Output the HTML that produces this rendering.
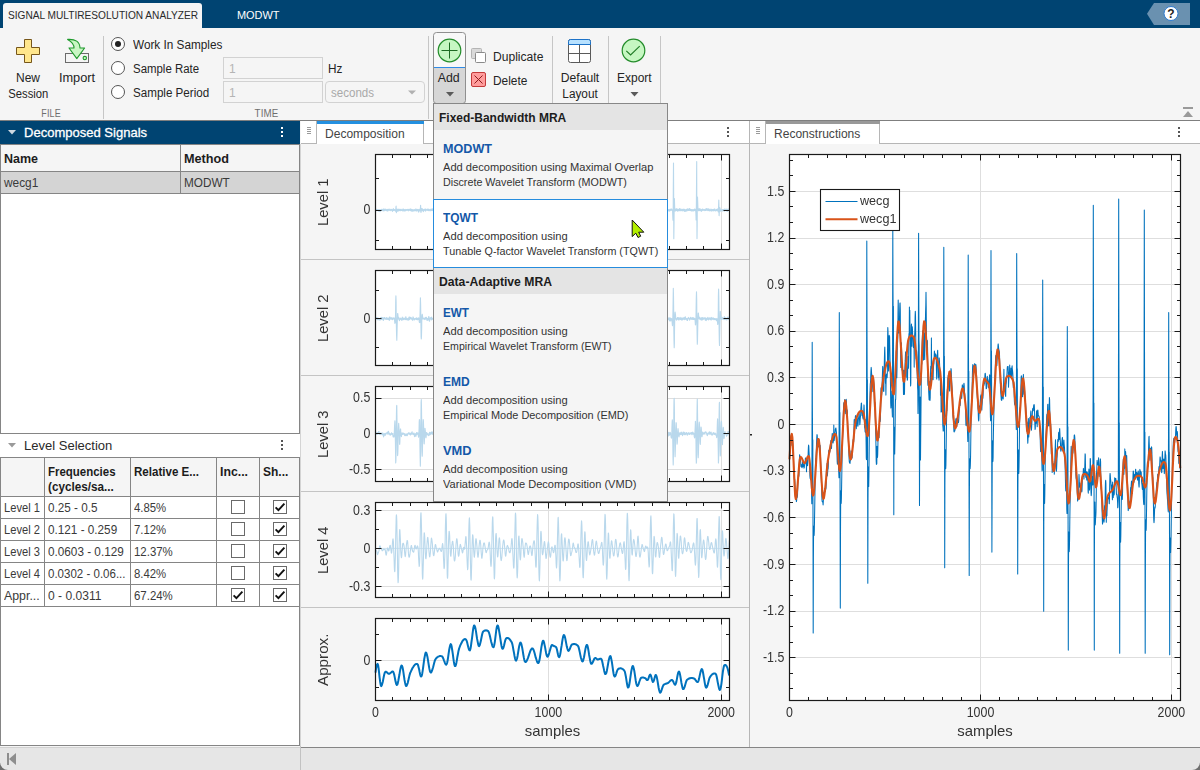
<!DOCTYPE html>
<html lang="en"><head><meta charset="utf-8"><title>Signal Multiresolution Analyzer</title>
<style>
*{box-sizing:border-box;margin:0;padding:0}
html,body{width:1200px;height:770px;overflow:hidden;background:#f5f5f5}
body{position:relative;font-family:"Liberation Sans",sans-serif;font-size:12px;color:#1c1c1c}
.abs{position:absolute}
#app{position:absolute;left:0;top:0;width:1200px;height:770px}
svg.gs{will-change:transform}
.f{display:inline-block;transform-origin:0 50%;white-space:nowrap}
.c>.f{transform-origin:50% 50%}
.t{position:absolute;white-space:nowrap;line-height:14px;height:14px}
.c{text-align:center}
.ui{font-size:12px;color:#242424}
#titlebar{left:0;top:0;width:1200px;height:28px;background:#004472}
#maintab{left:3px;top:3px;width:199px;height:26px;background:#f5f5f5;border-radius:3px 3px 0 0}
#strip{left:0;top:28px;width:1200px;height:92px;background:#f5f5f5}
#stripline{left:0;top:120px;width:1200px;height:1px;background:#7f7f7f}
.vsep{position:absolute;width:1px;background:#c6c6c6}
.seclab{font-size:11px;color:#6e6e6e;letter-spacing:.2px}
.radio{position:absolute;width:14px;height:14px;border:1px solid #555;border-radius:50%;background:#fff}
.radio.on:after{content:"";position:absolute;left:3px;top:3px;width:6px;height:6px;border-radius:50%;background:#222}
.field{position:absolute;border:1px solid #d2d2d2;background:#f5f5f5;color:#b4b4b4;font-size:12px;line-height:22px;padding-left:5px}
.hdr{position:absolute;background:#004472;color:#fff}
.tbl{position:absolute;border:1px solid #858585;background:#fff}
.hl{position:absolute;height:1px;background:#858585}
.vl{position:absolute;width:1px;background:#858585}
.th{position:absolute;font-weight:bold;font-size:12.5px;color:#1c1c1c;white-space:nowrap;line-height:15px}
.td{position:absolute;font-size:12px;color:#3a3a3a;white-space:nowrap;line-height:14px;height:14px}
.cb{position:absolute;width:14px;height:14px;border:1px solid #6a6a6a;background:#fff}
.tabstrip{position:absolute;background:#fff;height:22px;top:121px}
.tabline{position:absolute;height:1px;background:#b6b6b6;top:143px}
.doctab{position:absolute;top:121px;height:23px;background:#fff;border-right:1px solid #b6b6b6;border-left:1px solid #b6b6b6}
.doctab .bar{position:absolute;left:0;right:-1px;top:0;height:3px}
.doctab>span{position:absolute;left:8px;top:6px;font-size:12.5px;color:#444;white-space:nowrap;line-height:14px}
svg{position:absolute;left:0;top:0;overflow:visible}
svg text{font-family:"Liberation Sans",sans-serif}
#popup{left:433px;top:103px;width:235px;height:399px;background:#f5f5f5;border:1px solid #878787}
.ph{position:absolute;left:0;width:233px;height:26px;background:#e4e4e4;font-weight:bold;font-size:12.5px;line-height:28px;padding-left:5px;overflow:hidden;color:#1c1c1c;white-space:nowrap}
.pi{position:absolute;left:0;width:233px;height:69px}
.pi b{position:absolute;left:9px;top:11px;font-size:12.5px;line-height:14px;color:#1458a8;white-space:nowrap}
.pi i{position:absolute;left:9px;font-style:normal;font-size:11px;line-height:14px;color:#333;white-space:nowrap}
.pi.sel{background:#fff;border:1px solid #268cdd;left:-1px;width:235px}
.pi.sel b,.pi.sel i{left:9px}
#status{left:0;top:747px;width:1200px;height:23px;background:#e6e6e6}
</style></head>
<body>
<div id="app">
<div id="titlebar" class="abs"></div>
<div id="maintab" class="abs"></div>
<div class="t" id="tt1" style="left:8px;top:8px;font-size:11px;color:#2a2a2a"><span class="f" style="transform:scaleX(0.921)">SIGNAL MULTIRESOLUTION ANALYZER</span></div>
<div class="t" id="tt2" style="left:237px;top:8px;font-size:11px;color:#fff"><span class="f" style="transform:scaleX(0.994)">MODWT</span></div>
<svg width="1200" height="28" viewBox="0 0 1200 28"><path d="M1147 13.7 L1154 3 L1190 3 L1190 25 L1154 25 Z" fill="#6a91b0"/><circle cx="1171" cy="13.5" r="7" fill="#fff" stroke="#2e7bd0" stroke-width="1"/><text x="1171" y="18" font-size="12" font-weight="bold" text-anchor="middle" fill="#222">?</text></svg>
<div id="strip" class="abs"></div><div id="stripline" class="abs"></div>
<div class="vsep" style="left:103px;top:36px;height:83px"></div>
<div class="vsep" style="left:428px;top:36px;height:83px"></div>
<div class="vsep" style="left:552px;top:36px;height:68px"></div>
<div class="vsep" style="left:608px;top:36px;height:68px"></div>
<div class="vsep" style="left:660px;top:36px;height:68px"></div>
<div class="t c seclab" style="left:21px;width:60px;top:106px"><span class="f" style="transform:scaleX(0.811)">FILE</span></div>
<div class="t c seclab" style="left:237px;width:60px;top:106px"><span class="f" style="transform:scaleX(0.886)">TIME</span></div>
<svg width="1200" height="121" viewBox="0 0 1200 121">
<path d="M24.5 39.5 h7 v8 h8 v7 h-8 v8 h-7 v-8 h-8 v-7 h8 z" fill="#ffe68c" stroke="#76561a" stroke-width="1" stroke-linejoin="round"/>
<rect x="65.5" y="53.5" width="23" height="9" fill="#f5f5f5" stroke="#6b6b6b" stroke-width="1"/>
<circle cx="84.8" cy="58.1" r="1.7" fill="#d4f7d0" stroke="#1f9a2c" stroke-width="1.1"/>
<path d="M67.6 39.4 Q79.6 38.6 80 48 H84.6 L76.8 58.6 L69 48 H74 Q74.2 43 67.6 39.4 Z" fill="#c9f6c4" stroke="#1f9a2c" stroke-width="1.1" stroke-linejoin="round"/>
<path d="M433.5 67 v-32 a3 3 0 0 1 3 -3 h26 a3 3 0 0 1 3 3 v32 z" fill="#f8f8f8"/>
<path d="M433.5 67 h32 v33 a3 3 0 0 1 -3 3 h-26 a3 3 0 0 1 -3 -3 z" fill="#d6d6d6"/>
<rect x="433.5" y="32.5" width="32" height="71" rx="3" fill="none" stroke="#8f8f8f"/>
<rect x="434" y="67" width="31" height="1" fill="#2f8be6"/>
<circle cx="449.5" cy="50.5" r="11.3" fill="#c6f7c2" stroke="#238c2a" stroke-width="1.2"/>
<path d="M449.5 42.5 v16 M441.5 50.5 h16" stroke="#1d6b22" stroke-width="1" fill="none"/>
<path d="M446 92 h8 l-4 4.5 z" fill="#5a5a5a"/>
<rect x="471.5" y="48.5" width="10" height="10" rx="1" fill="#dadada" stroke="#b4b4b4"/>
<rect x="475.5" y="52.5" width="10" height="10" rx="1" fill="#fff" stroke="#8a8a8a"/>
<rect x="471.5" y="72.5" width="14" height="14" rx="1.5" fill="#ff9c9c" stroke="#c23a3a"/>
<path d="M474.5 75.5 l8 8 M482.5 75.5 l-8 8" stroke="#8c1c1c" stroke-width="1" fill="none"/>
<rect x="568.5" y="39.5" width="22" height="23" rx="2" fill="#fff" stroke="#5a5a5a"/>
<path d="M568.5 44.5 v-3 a2 2 0 0 1 2 -2 h18 a2 2 0 0 1 2 2 v3 z" fill="#b7e1ff" stroke="#1c72c8"/>
<path d="M579.5 45 v17 M569 53.5 h21" stroke="#5a5a5a" fill="none"/>
<circle cx="633.5" cy="50.5" r="11.3" fill="#c6f7c2" stroke="#238c2a" stroke-width="1.2"/>
<path d="M626.3 50.9 l4.3 4 l9.1 -8.8" stroke="#1f7a25" stroke-width="1.1" fill="none"/>
<path d="M630.5 92 h8 l-4 4.5 z" fill="#5a5a5a"/>
<rect x="1183" y="107" width="10" height="2" fill="#9a9a9a"/><path d="M1183 117 h10 l-5 -6 z" fill="#9a9a9a"/>
</svg>
<div class="t c ui" style="left:3px;width:50px;top:71px"><span class="f" style="transform:scaleX(0.999)">New</span></div>
<div class="t c ui" style="left:3px;width:50px;top:87px"><span class="f" style="transform:scaleX(0.937)">Session</span></div>
<div class="t c ui" style="left:52px;width:50px;top:71px"><span class="f" style="transform:scaleX(1.064)">Import</span></div>
<div class="radio on" style="left:111px;top:37px"></div>
<div class="t ui" style="left:132.6px;top:38px"><span class="f" style="transform:scaleX(0.981)">Work In Samples</span></div>
<div class="radio" style="left:111px;top:61px"></div>
<div class="t ui" style="left:132.6px;top:62px"><span class="f" style="transform:scaleX(0.953)">Sample Rate</span></div>
<div class="radio" style="left:111px;top:85px"></div>
<div class="t ui" style="left:132.6px;top:86px"><span class="f" style="transform:scaleX(0.968)">Sample Period</span></div>
<div class="field" style="left:223px;top:57px;width:100px;height:22px">1</div>
<div class="field" style="left:223px;top:81px;width:100px;height:22px">1</div>
<div class="field" style="left:325px;top:81px;width:100px;height:22px;border-radius:4px;color:#a9a9a9"><span class="f" style="transform:scaleX(0.962)">seconds</span></div>
<svg width="1200" height="121" viewBox="0 0 1200 121"><path d="M408 90.5 h8 l-4 4 z" fill="#b0b0b0"/></svg>
<div class="t ui" style="left:328px;top:62px"><span class="f" style="transform:scaleX(0.981)">Hz</span></div>
<div class="t c ui" style="left:424px;width:50px;top:71px"><span class="f" style="transform:scaleX(1.030)">Add</span></div>
<div class="t ui" style="left:493px;top:50px"><span class="f" style="transform:scaleX(1.007)">Duplicate</span></div>
<div class="t ui" style="left:493px;top:74px"><span class="f" style="transform:scaleX(0.992)">Delete</span></div>
<div class="t c ui" style="left:550px;width:60px;top:71px"><span class="f" style="transform:scaleX(1.010)">Default</span></div>
<div class="t c ui" style="left:550px;width:60px;top:87px"><span class="f" style="transform:scaleX(0.982)">Layout</span></div>
<div class="t c ui" style="left:604px;width:60px;top:71px"><span class="f" style="transform:scaleX(0.997)">Export</span></div>
<div class="hdr" style="left:0;top:121px;width:300px;height:23px"></div>
<svg width="300" height="150" viewBox="0 0 300 150"><path d="M8 130 h8 l-4 4.5 z" fill="#cfd9e2"/><rect x="281" y="127" width="2" height="2" fill="#fff"/><rect x="281" y="131" width="2" height="2" fill="#fff"/><rect x="281" y="135" width="2" height="2" fill="#fff"/></svg>
<div class="t" id="dsh" style="left:24px;top:125px;-webkit-text-stroke:0.3px #fff;font-size:13.33px;line-height:16px;height:16px;color:#fff"><span class="f" style="transform:scaleX(0.977)">Decomposed Signals</span></div>
<div class="tbl" style="left:0;top:144px;width:300px;height:290px"></div>
<div class="abs" style="left:1px;top:145px;width:298px;height:26px;background:#f5f5f5"></div>
<div class="abs" style="left:1px;top:172px;width:298px;height:21px;background:#d4d4d4"></div>
<div class="hl" style="left:0;top:171px;width:300px"></div>
<div class="hl" style="left:0;top:193px;width:300px"></div>
<div class="vl" style="left:180px;top:144px;height:50px"></div>
<div class="th" style="left:4px;top:152px"><span class="f" style="transform:scaleX(0.999)">Name</span></div>
<div class="th" style="left:184px;top:152px"><span class="f" style="transform:scaleX(1.013)">Method</span></div>
<div class="td" style="left:4px;top:176px"><span class="f" style="transform:scaleX(0.989)">wecg1</span></div>
<div class="td" style="left:184px;top:176px"><span class="f" style="transform:scaleX(0.980)">MODWT</span></div>
<div class="abs" style="left:0;top:434px;width:300px;height:23px;background:#fff"></div>
<svg width="300" height="460" viewBox="0 0 300 460"><path d="M8 443 h8 l-4 4.5 z" fill="#9a9a9a"/><rect x="281" y="440" width="2" height="2" fill="#555"/><rect x="281" y="444" width="2" height="2" fill="#555"/><rect x="281" y="448" width="2" height="2" fill="#555"/></svg>
<div class="t" id="lsh" style="left:24px;top:438px;font-size:13.33px;line-height:16px;height:16px;color:#2a2a2a"><span class="f" style="transform:scaleX(0.977)">Level Selection</span></div>
<div class="tbl" style="left:0;top:457px;width:300px;height:289px"></div>
<div class="abs" style="left:1px;top:458px;width:298px;height:38px;background:#f5f5f5"></div>
<div class="hl" style="left:0;top:496px;width:300px"></div>
<div class="hl" style="left:0;top:518px;width:300px"></div>
<div class="hl" style="left:0;top:540px;width:300px"></div>
<div class="hl" style="left:0;top:562px;width:300px"></div>
<div class="hl" style="left:0;top:584px;width:300px"></div>
<div class="hl" style="left:0;top:606px;width:300px"></div>
<div class="vl" style="left:44px;top:457px;height:150px"></div>
<div class="vl" style="left:130px;top:457px;height:150px"></div>
<div class="vl" style="left:216px;top:457px;height:150px"></div>
<div class="vl" style="left:259px;top:457px;height:150px"></div>
<div class="th" style="left:48px;top:465px"><span class="f" style="transform:scaleX(0.917)">Frequencies</span></div>
<div class="th" style="left:48px;top:480px"><span class="f" style="transform:scaleX(0.937)">(cycles/sa...</span></div>
<div class="th" style="left:134px;top:465px"><span class="f" style="transform:scaleX(0.926)">Relative E...</span></div>
<div class="th" style="left:220px;top:465px"><span class="f" style="transform:scaleX(0.983)">Inc...</span></div>
<div class="th" style="left:263px;top:465px"><span class="f" style="transform:scaleX(0.958)">Sh...</span></div>
<div class="td" style="left:4px;top:501px"><span class="f" style="transform:scaleX(0.928)">Level 1</span></div>
<div class="td" style="left:48px;top:501px"><span class="f" style="transform:scaleX(0.974)">0.25 - 0.5</span></div>
<div class="td" style="left:134px;top:501px"><span class="f" style="transform:scaleX(0.946)">4.85%</span></div>
<div class="cb" style="left:231px;top:500px"></div>
<div class="cb" style="left:273px;top:500px"><svg width="14" height="14" viewBox="0 0 14 14" style="left:-1px;top:-1px"><path d="M2.6 7.4 L5.4 10.2 L11.4 3.6" stroke="#111" stroke-width="1.9" fill="none"/></svg></div>
<div class="td" style="left:4px;top:523px"><span class="f" style="transform:scaleX(0.928)">Level 2</span></div>
<div class="td" style="left:48px;top:523px"><span class="f" style="transform:scaleX(0.978)">0.121 - 0.259</span></div>
<div class="td" style="left:134px;top:523px"><span class="f" style="transform:scaleX(0.946)">7.12%</span></div>
<div class="cb" style="left:231px;top:522px"></div>
<div class="cb" style="left:273px;top:522px"><svg width="14" height="14" viewBox="0 0 14 14" style="left:-1px;top:-1px"><path d="M2.6 7.4 L5.4 10.2 L11.4 3.6" stroke="#111" stroke-width="1.9" fill="none"/></svg></div>
<div class="td" style="left:4px;top:545px"><span class="f" style="transform:scaleX(0.928)">Level 3</span></div>
<div class="td" style="left:48px;top:545px"><span class="f" style="transform:scaleX(0.979)">0.0603 - 0.129</span></div>
<div class="td" style="left:134px;top:545px"><span class="f" style="transform:scaleX(0.953)">12.37%</span></div>
<div class="cb" style="left:231px;top:544px"></div>
<div class="cb" style="left:273px;top:544px"><svg width="14" height="14" viewBox="0 0 14 14" style="left:-1px;top:-1px"><path d="M2.6 7.4 L5.4 10.2 L11.4 3.6" stroke="#111" stroke-width="1.9" fill="none"/></svg></div>
<div class="td" style="left:4px;top:567px"><span class="f" style="transform:scaleX(0.928)">Level 4</span></div>
<div class="td" style="left:48px;top:567px"><span class="f" style="transform:scaleX(0.960)">0.0302 - 0.06...</span></div>
<div class="td" style="left:134px;top:567px"><span class="f" style="transform:scaleX(0.946)">8.42%</span></div>
<div class="cb" style="left:231px;top:566px"></div>
<div class="cb" style="left:273px;top:566px"><svg width="14" height="14" viewBox="0 0 14 14" style="left:-1px;top:-1px"><path d="M2.6 7.4 L5.4 10.2 L11.4 3.6" stroke="#111" stroke-width="1.9" fill="none"/></svg></div>
<div class="td" style="left:4px;top:589px"><span class="f" style="transform:scaleX(1.029)">Appr...</span></div>
<div class="td" style="left:48px;top:589px"><span class="f" style="transform:scaleX(1.006)">0 - 0.0311</span></div>
<div class="td" style="left:134px;top:589px"><span class="f" style="transform:scaleX(0.953)">67.24%</span></div>
<div class="cb" style="left:231px;top:588px"><svg width="14" height="14" viewBox="0 0 14 14" style="left:-1px;top:-1px"><path d="M2.6 7.4 L5.4 10.2 L11.4 3.6" stroke="#111" stroke-width="1.9" fill="none"/></svg></div>
<div class="cb" style="left:273px;top:588px"><svg width="14" height="14" viewBox="0 0 14 14" style="left:-1px;top:-1px"><path d="M2.6 7.4 L5.4 10.2 L11.4 3.6" stroke="#111" stroke-width="1.9" fill="none"/></svg></div>
<div id="status" class="abs"></div>
<div class="abs" style="left:0;top:747px;width:300px;height:1px;background:#d2d2d2"></div>
<div class="abs" style="left:301px;top:747px;width:899px;height:1px;background:#858585"></div>
<div class="abs" style="left:300px;top:746px;width:1px;height:24px;background:#c2c2c2"></div>
<div class="abs" style="left:300px;top:144px;width:1px;height:602px;background:#d4d4d4"></div>
<svg width="40" height="770" viewBox="0 0 40 770"><rect x="7" y="753" width="2" height="12" fill="#8e8e8e"/><path d="M16 753 v12 l-7 -6 z" fill="#8e8e8e"/></svg>
<svg width="1200" height="770" viewBox="0 0 1200 770"><path d="M0 770 V762 A8 8 0 0 0 8 770 Z" fill="#6f6f6f"/><path d="M1200 770 V762 A8 8 0 0 1 1192 770 Z" fill="#6f6f6f"/></svg>
<div class="tabstrip" style="left:301px;width:448px"></div>
<div class="tabline" style="left:301px;width:15px"></div>
<div class="tabline" style="left:424px;width:325px"></div>
<div class="doctab" style="left:316px;width:108px"><div class="bar" style="background:#2490e0"></div><span id="dtab"><span class="f" style="transform:scaleX(0.963)">Decomposition</span></span></div>
<div class="abs" style="left:749px;top:121px;width:1px;height:626px;background:#b6b6b6"></div>
<div class="abs" style="left:301px;top:259px;width:448px;height:1px;background:#c4c4c4"></div>
<div class="abs" style="left:301px;top:375px;width:448px;height:1px;background:#c4c4c4"></div>
<div class="abs" style="left:301px;top:491px;width:448px;height:1px;background:#c4c4c4"></div>
<div class="abs" style="left:301px;top:607px;width:448px;height:1px;background:#c4c4c4"></div>
<svg class="gs" width="1200" height="770" viewBox="0 0 1200 770">
<rect x="307" y="127" width="4" height="1" fill="#9a9a9a"/>
<rect x="307" y="129" width="4" height="1" fill="#9a9a9a"/>
<rect x="307" y="131" width="4" height="1" fill="#9a9a9a"/>
<rect x="307" y="133" width="4" height="1" fill="#9a9a9a"/>
<rect x="727" y="127" width="2" height="2" fill="#555"/>
<rect x="727" y="131" width="2" height="2" fill="#555"/>
<rect x="727" y="135" width="2" height="2" fill="#555"/>
<rect x="375.5" y="154.5" width="354.0" height="95.0" fill="#fff"/>
<path d="M548.5 154.5 V249.5" stroke="#dedede" stroke-width="1" fill="none"/><path d="M721.5 154.5 V249.5" stroke="#dedede" stroke-width="1" fill="none"/>
<path d="M375.5 210.0H729.5" stroke="#cfe3f0" stroke-width="1" fill="none"/>
<path d="M375.5 210.0L375.7 209.8L375.8 210.2L376.0 210.6L376.2 210.3L376.4 210.6L376.5 210.0L376.7 209.2L376.9 210.3L377.1 210.4L377.2 209.7L377.4 209.8L377.6 209.9L377.7 210.6L377.9 210.0L378.1 209.6L378.3 210.9L378.4 210.3L378.6 211.2L378.8 210.8L379.0 211.2L379.1 210.1L379.3 210.8L379.5 209.8L379.6 209.9L379.8 210.1L380.0 211.6L380.2 210.3L380.3 210.0L380.5 209.9L380.7 211.0L380.9 210.3L381.0 210.6L381.2 210.5L381.4 209.3L381.5 210.5L381.7 210.0L381.9 209.4L382.1 210.4L382.2 210.1L382.4 209.9L382.6 210.0L382.8 210.8L382.9 210.0L383.1 209.1L383.3 211.0L383.5 209.5L383.6 209.9L383.8 210.4L384.0 208.7L384.1 209.5L384.3 210.8L384.5 210.0L384.7 209.6L384.8 210.1L385.0 209.6L385.2 210.0L385.4 209.6L385.5 209.1L385.7 210.4L385.9 209.9L386.0 210.3L386.2 209.9L386.4 210.8L386.6 210.4L386.7 210.1L386.9 209.4L387.1 209.3L387.3 210.8L387.4 210.5L387.6 209.6L387.8 211.3L387.9 210.3L388.1 210.1L388.3 209.2L388.5 209.6L388.6 210.2L388.8 210.2L389.0 210.2L389.2 209.0L389.3 210.3L389.5 210.2L389.7 209.8L389.8 210.1L390.0 210.1L390.2 210.7L390.4 210.0L390.5 210.3L390.7 209.3L390.9 209.6L391.1 210.0L391.2 209.6L391.4 210.2L391.6 209.3L391.7 210.0L391.9 209.6L392.1 210.8L392.3 209.8L392.4 211.1L392.6 211.3L392.8 210.2L393.0 210.6L393.1 209.9L393.3 208.6L393.5 210.5L393.6 210.4L393.8 209.9L394.0 209.7L394.2 210.1L394.3 210.1L394.5 209.6L394.7 209.7L394.9 210.7L395.0 210.1L395.2 210.1L395.4 211.2L395.6 210.7L395.7 210.9L395.9 207.7L396.1 206.1L396.2 209.4L396.4 212.7L396.6 211.3L396.8 210.8L396.9 209.7L397.1 209.1L397.3 211.2L397.5 209.5L397.6 211.1L397.8 209.5L398.0 210.5L398.1 209.5L398.3 209.9L398.5 211.0L398.7 209.2L398.8 209.1L399.0 210.0L399.2 210.2L399.4 210.1L399.5 210.6L399.7 209.3L399.9 210.3L400.0 210.0L400.2 210.5L400.4 210.4L400.6 210.8L400.7 209.2L400.9 210.1L401.1 209.4L401.3 210.0L401.4 210.4L401.6 210.2L401.8 210.4L401.9 210.0L402.1 210.2L402.3 210.2L402.5 210.9L402.6 210.5L402.8 209.0L403.0 210.4L403.2 210.7L403.3 209.8L403.5 209.1L403.7 210.9L403.8 210.1L404.0 210.4L404.2 211.1L404.4 209.5L404.5 210.0L404.7 210.0L404.9 210.5L405.1 209.7L405.2 210.3L405.4 210.1L405.6 210.7L405.7 210.8L405.9 209.2L406.1 210.3L406.3 209.8L406.4 210.0L406.6 210.3L406.8 210.3L407.0 209.6L407.1 210.2L407.3 210.1L407.5 210.0L407.7 209.3L407.8 209.6L408.0 209.8L408.2 210.4L408.3 210.9L408.5 209.4L408.7 209.4L408.9 210.1L409.0 209.7L409.2 209.5L409.4 209.5L409.6 209.4L409.7 210.3L409.9 209.0L410.1 210.8L410.2 209.5L410.4 209.7L410.6 209.4L410.8 208.8L410.9 209.1L411.1 210.7L411.3 211.1L411.5 209.5L411.6 210.6L411.8 210.0L412.0 209.5L412.1 211.0L412.3 211.3L412.5 209.8L412.7 210.0L412.8 210.2L413.0 210.0L413.2 210.5L413.4 211.0L413.5 210.1L413.7 210.6L413.9 211.0L414.0 209.7L414.2 210.0L414.4 209.7L414.6 210.6L414.7 210.4L414.9 210.6L415.1 210.6L415.3 209.9L415.4 210.5L415.6 209.8L415.8 209.8L415.9 208.7L416.1 210.9L416.3 209.4L416.5 210.1L416.6 210.0L416.8 210.9L417.0 210.3L417.2 209.5L417.3 210.1L417.5 209.9L417.7 210.2L417.8 209.3L418.0 210.0L418.2 211.4L418.4 210.4L418.5 211.2L418.7 212.1L418.9 210.3L419.1 209.2L419.2 210.0L419.4 210.7L419.6 210.6L419.8 209.4L419.9 210.5L420.1 210.9L420.3 210.4L420.4 208.1L420.6 205.3L420.8 209.1L421.0 212.4L421.1 212.0L421.3 209.2L421.5 209.3L421.7 208.6L421.8 210.6L422.0 210.1L422.2 210.0L422.3 210.8L422.5 208.9L422.7 209.1L422.9 210.3L423.0 209.5L423.2 209.8L423.4 211.7L423.6 209.8L423.7 210.0L423.9 209.9L424.1 210.7L424.2 210.2L424.4 210.1L424.6 209.2L424.8 209.8L424.9 210.0L425.1 209.0L425.3 210.4L425.5 210.2L425.6 211.1L425.8 209.0L426.0 209.4L426.1 209.4L426.3 209.6L426.5 209.9L426.7 209.9L426.8 210.2L427.0 210.1L427.2 210.0L427.4 209.0L427.5 209.6L427.7 210.0L427.9 210.4L428.0 210.4L428.2 209.0L428.4 209.7L428.6 210.0L428.7 210.2L428.9 210.7L429.1 210.0L429.3 209.4L429.4 210.2L429.6 210.1L429.8 210.1L429.9 209.9L430.1 211.0L430.3 210.1L430.5 210.5L430.6 209.4L430.8 210.5L431.0 209.6L431.2 209.0L431.3 210.2L431.5 210.4L431.7 209.9L431.8 210.0L432.0 210.6L432.2 209.7L432.4 208.7L432.5 210.2L432.7 210.1L432.9 210.7L433.1 209.8L433.2 210.8L433.4 210.7L433.6 209.2L433.8 210.6L433.9 209.3L434.1 209.0L434.3 209.8L434.4 209.7L434.6 208.8L434.8 210.1L435.0 210.4L435.1 210.9L435.3 210.0L435.5 209.1L435.7 209.4L435.8 210.6L436.0 210.5L436.2 210.3L436.3 209.8L436.5 210.1L436.7 209.9L436.9 209.8L437.0 210.2L437.2 210.0L437.4 209.9L437.6 210.1L437.7 209.7L437.9 208.8L438.1 209.6L438.2 210.0L438.4 211.1L438.6 209.8L438.8 211.2L438.9 210.9L439.1 209.5L439.3 209.6L439.5 210.1L439.6 211.1L439.8 210.2L440.0 210.4L440.1 209.6L440.3 208.6L440.5 209.9L440.7 210.5L440.8 210.7L441.0 210.0L441.2 210.1L441.4 210.7L441.5 209.9L441.7 210.7L441.9 209.3L442.0 209.3L442.2 209.3L442.4 210.3L442.6 209.7L442.7 210.1L442.9 210.2L443.1 210.2L443.3 210.8L443.4 210.9L443.6 209.5L443.8 210.1L443.9 209.9L444.1 209.4L444.3 211.1L444.5 210.5L444.6 210.2L444.8 211.2L445.0 212.7L445.2 210.3L445.3 204.8L445.5 199.5L445.7 209.1L445.9 216.3L446.2 210.0L446.4 206.1L446.5 207.8L446.7 208.7L446.9 210.2L447.1 210.2L447.2 210.7L447.4 208.4L447.6 210.1L447.8 209.0L447.9 210.4L448.1 209.9L448.3 211.1L448.4 210.2L448.6 209.4L448.8 210.8L449.0 209.3L449.1 209.8L449.3 210.7L449.5 210.3L449.7 210.3L449.8 210.0L450.0 210.3L450.2 210.5L450.3 210.2L450.5 210.6L450.7 210.8L450.9 210.0L451.0 209.4L451.2 211.0L451.4 210.0L451.6 210.4L451.7 210.6L451.9 209.5L452.1 210.3L452.2 209.1L452.4 210.5L452.6 209.8L452.8 210.1L452.9 210.5L453.1 209.6L453.3 210.1L453.5 209.6L453.6 210.0L453.8 210.7L454.0 210.1L454.1 210.0L454.3 209.4L454.5 210.6L454.7 210.0L454.8 211.1L455.0 209.6L455.2 210.7L455.4 211.1L455.5 210.0L455.7 209.3L455.9 211.0L456.0 210.7L456.2 210.5L456.4 210.7L456.6 209.8L456.7 210.5L456.9 210.5L457.1 209.6L457.3 210.5L457.4 209.7L457.6 210.6L457.8 210.8L458.0 211.2L458.1 208.8L458.3 210.2L458.5 209.8L458.6 210.0L458.8 209.9L459.0 210.0L459.2 208.8L459.3 210.7L459.5 211.0L459.7 210.6L459.9 210.8L460.2 209.5L460.4 210.6L460.5 210.9L460.7 210.2L460.9 209.1L461.1 211.8L461.2 209.7L461.4 210.7L461.6 209.3L461.8 210.7L461.9 210.2L462.1 211.0L462.3 210.6L462.4 209.1L462.6 209.5L462.8 210.3L463.0 210.6L463.1 211.2L463.3 210.2L463.5 210.0L463.7 210.1L463.8 210.1L464.0 210.7L464.2 210.0L464.3 210.0L464.5 209.2L464.7 208.8L464.9 210.1L465.0 210.5L465.2 210.0L465.4 210.4L465.6 210.5L465.7 210.0L465.9 210.7L466.1 209.6L466.2 210.1L466.4 209.8L466.6 210.1L466.8 210.5L466.9 210.6L467.1 210.2L467.3 210.3L467.5 209.9L467.6 210.0L467.8 210.9L468.0 210.0L468.1 211.4L468.3 213.1L468.5 214.6L468.7 213.1L468.8 200.8L469.0 189.6L469.2 207.4L469.4 222.5L469.5 216.6L469.7 208.4L469.9 204.7L470.0 207.0L470.2 209.2L470.4 210.7L470.6 209.8L470.7 209.9L470.9 210.1L471.1 210.3L471.3 209.7L471.4 211.1L471.6 209.7L471.8 209.8L472.0 209.8L472.1 209.8L472.3 210.4L472.5 210.2L472.6 209.6L472.8 209.7L473.0 209.9L473.2 211.0L473.3 209.7L473.5 209.3L473.7 209.4L473.9 209.9L474.0 211.0L474.2 209.4L474.4 210.1L474.5 211.6L474.7 209.8L474.9 210.9L475.1 210.8L475.2 210.4L475.4 209.2L475.6 210.2L475.8 209.8L475.9 208.9L476.1 209.0L476.3 210.1L476.4 210.2L476.6 210.8L476.8 210.4L477.0 209.7L477.1 209.7L477.3 209.9L477.5 209.4L477.7 210.5L477.8 210.0L478.0 209.5L478.2 209.6L478.3 209.3L478.5 209.7L478.7 210.2L478.9 209.8L479.0 210.6L479.2 211.0L479.4 209.6L479.6 210.0L479.7 209.8L479.9 211.1L480.1 210.2L480.2 210.4L480.4 210.5L480.6 211.4L480.8 210.2L480.9 209.4L481.1 209.8L481.3 210.4L481.5 210.0L481.6 209.5L481.8 211.7L482.0 210.1L482.1 209.7L482.3 209.6L482.5 208.9L482.7 209.3L482.8 209.8L483.0 209.8L483.2 209.5L483.4 210.3L483.5 210.0L483.7 209.4L483.9 208.8L484.1 210.1L484.2 210.0L484.4 209.9L484.6 209.2L484.7 210.0L484.9 209.1L485.1 210.6L485.3 210.1L485.4 210.1L485.6 209.5L485.8 209.3L486.0 211.0L486.1 210.6L486.3 209.8L486.5 210.4L486.6 211.0L486.8 209.3L487.0 209.7L487.2 209.7L487.3 210.3L487.5 209.3L487.7 210.2L487.9 209.3L488.0 210.6L488.2 210.5L488.4 209.9L488.5 210.4L488.7 209.6L488.9 209.8L489.1 210.6L489.2 210.0L489.4 210.2L489.6 209.4L489.8 210.4L489.9 210.3L490.1 209.2L490.3 208.6L490.4 208.7L490.6 210.0L490.8 209.9L491.0 209.0L491.1 210.1L491.3 210.7L491.5 210.7L491.7 213.0L491.8 216.0L492.0 213.2L492.2 199.6L492.3 184.5L492.5 207.2L492.7 225.3L492.9 217.8L493.0 206.9L493.2 203.4L493.4 205.5L493.6 209.6L493.7 210.2L493.9 210.6L494.1 209.3L494.2 210.0L494.4 210.5L494.6 210.2L494.8 210.1L494.9 209.6L495.1 211.0L495.3 210.7L495.5 210.2L495.6 208.4L495.8 209.4L496.0 210.1L496.2 209.5L496.3 208.7L496.5 210.1L496.7 210.2L496.8 209.2L497.0 209.7L497.2 209.6L497.4 210.3L497.5 208.8L497.7 208.9L497.9 209.6L498.1 209.6L498.2 211.3L498.4 209.6L498.6 210.1L498.7 209.7L498.9 209.6L499.1 210.2L499.3 211.1L499.4 209.8L499.6 210.5L499.8 210.2L500.0 210.4L500.1 210.2L500.3 211.5L500.5 209.2L500.6 209.8L500.8 209.3L501.0 208.7L501.2 210.0L501.3 211.1L501.5 210.6L501.7 210.8L501.9 210.3L502.0 209.9L502.2 211.3L502.4 209.8L502.5 211.0L502.7 209.8L502.9 210.1L503.1 210.2L503.2 210.0L503.4 210.3L503.6 210.4L503.8 211.1L503.9 210.0L504.1 208.8L504.3 208.7L504.4 209.2L504.6 209.6L504.8 210.4L505.0 209.1L505.1 210.0L505.3 210.0L505.5 210.2L505.7 209.9L505.8 210.3L506.0 210.1L506.2 210.7L506.3 210.2L506.5 208.6L506.7 210.0L506.9 210.2L507.0 209.7L507.2 209.6L507.4 210.7L507.6 210.1L507.7 209.4L507.9 209.8L508.1 209.9L508.2 209.0L508.4 210.4L508.6 209.9L508.8 210.3L508.9 209.1L509.1 211.2L509.3 210.4L509.5 210.3L509.6 209.6L509.8 209.6L510.0 209.1L510.2 211.0L510.3 209.5L510.5 210.2L510.7 210.4L510.8 209.7L511.0 210.6L511.2 211.3L511.4 210.2L511.5 210.9L511.7 210.4L511.9 209.8L512.1 209.8L512.2 209.0L512.4 210.1L512.6 211.0L512.7 210.5L512.9 210.6L513.1 210.8L513.3 209.7L513.4 210.4L513.6 211.3L513.8 209.6L514.0 210.1L514.1 209.8L514.3 210.7L514.5 213.1L514.6 215.8L514.8 211.5L515.0 197.7L515.2 183.1L515.3 206.2L515.5 227.1L515.7 218.5L515.9 207.2L516.0 202.7L516.2 206.4L516.5 209.9L516.7 210.8L516.9 211.1L517.1 210.2L517.2 210.1L517.4 210.5L517.6 209.9L517.8 210.4L517.9 209.7L518.1 210.5L518.3 210.0L518.4 209.4L518.6 208.4L518.8 210.6L519.0 210.3L519.1 210.5L519.3 209.5L519.5 210.7L519.7 210.3L519.8 210.0L520.0 210.6L520.2 210.6L520.3 210.3L520.5 211.3L520.7 210.9L520.9 210.3L521.0 209.9L521.2 210.1L521.4 211.1L521.6 210.3L521.7 209.5L521.9 209.6L522.1 210.0L522.3 210.6L522.4 209.6L522.6 210.4L522.8 210.7L522.9 210.5L523.1 209.1L523.3 209.9L523.5 209.3L523.6 210.3L523.8 209.4L524.0 210.4L524.2 210.1L524.3 208.4L524.5 209.5L524.7 210.3L524.8 210.1L525.0 209.8L525.2 209.2L525.4 210.3L525.5 211.1L525.7 210.2L525.9 210.0L526.1 209.9L526.2 209.2L526.4 209.8L526.6 209.5L526.7 210.7L526.9 209.5L527.1 208.7L527.3 209.5L527.4 209.8L527.6 209.9L527.8 208.9L528.0 210.6L528.1 210.1L528.3 209.7L528.5 209.5L528.6 210.3L528.8 209.8L529.0 210.2L529.2 209.9L529.3 210.1L529.5 210.7L529.7 210.0L529.9 209.4L530.0 210.6L530.2 210.2L530.4 209.6L530.5 210.7L530.7 209.9L530.9 210.7L531.1 209.3L531.2 208.5L531.4 208.7L531.6 210.1L531.8 209.5L531.9 209.9L532.1 209.9L532.3 209.0L532.4 210.8L532.6 209.3L532.8 210.0L533.0 209.1L533.1 209.9L533.3 210.4L533.5 209.8L533.7 209.5L533.8 210.0L534.0 209.7L534.2 210.3L534.4 211.3L534.5 209.4L534.7 209.6L534.9 209.9L535.0 210.0L535.2 209.3L535.4 210.3L535.6 210.4L535.7 210.1L535.9 209.2L536.1 210.9L536.3 209.3L536.4 211.2L536.6 214.4L536.8 215.3L536.9 212.5L537.1 198.1L537.3 182.0L537.5 205.7L537.6 226.3L537.8 219.2L538.0 206.6L538.2 201.9L538.3 205.7L538.5 208.7L538.7 209.9L538.8 210.3L539.0 210.3L539.2 210.0L539.4 210.0L539.5 210.4L539.7 210.3L539.9 209.3L540.1 209.9L540.2 209.4L540.4 209.2L540.6 209.6L540.7 208.6L540.9 210.5L541.1 209.5L541.3 210.2L541.4 208.8L541.6 208.9L541.8 211.2L542.0 210.6L542.1 209.6L542.3 209.5L542.5 209.5L542.6 210.0L542.8 209.7L543.0 209.6L543.2 210.0L543.3 209.4L543.5 211.4L543.7 209.6L543.9 210.7L544.0 209.4L544.2 210.1L544.4 210.6L544.5 209.8L544.7 210.6L544.9 210.6L545.1 211.0L545.2 210.0L545.4 209.7L545.6 209.4L545.8 210.1L545.9 209.3L546.1 210.0L546.3 210.1L546.5 209.6L546.6 209.3L546.8 210.2L547.0 210.2L547.1 210.1L547.3 209.9L547.5 210.6L547.7 209.3L547.8 210.3L548.0 209.7L548.2 210.5L548.4 209.8L548.5 209.8L548.7 210.3L548.9 208.7L549.0 209.8L549.2 208.9L549.4 209.4L549.6 210.4L549.7 210.2L549.9 209.7L550.1 210.0L550.3 210.0L550.4 210.2L550.6 211.1L550.8 210.1L550.9 211.4L551.1 209.8L551.3 210.5L551.5 210.5L551.6 210.1L551.8 209.8L552.0 210.9L552.2 211.1L552.3 210.7L552.5 211.3L552.7 210.6L552.8 209.0L553.0 210.7L553.2 209.6L553.4 210.9L553.5 209.8L553.7 210.2L553.9 210.0L554.1 209.6L554.2 208.9L554.4 209.9L554.6 209.9L554.7 210.6L554.9 209.6L555.1 210.2L555.3 209.5L555.4 210.0L555.6 208.9L555.8 211.3L556.0 210.2L556.1 209.4L556.3 210.2L556.5 210.5L556.6 210.2L556.8 210.9L557.0 210.8L557.2 212.2L557.3 215.4L557.5 213.1L557.7 197.7L557.9 181.9L558.0 205.6L558.2 227.7L558.5 206.3L558.7 201.8L558.9 205.6L559.1 209.7L559.2 210.9L559.4 210.4L559.6 211.4L559.8 209.5L559.9 210.4L560.1 209.7L560.3 208.8L560.5 209.3L560.6 210.7L560.8 209.5L561.0 209.3L561.1 210.5L561.3 210.6L561.5 210.1L561.7 211.0L561.8 209.1L562.0 211.5L562.2 210.7L562.4 210.2L562.5 210.1L562.7 209.9L562.9 209.8L563.0 210.1L563.2 209.3L563.4 211.4L563.6 210.0L563.7 210.5L563.9 209.9L564.1 209.9L564.3 210.6L564.4 210.4L564.6 209.5L564.8 209.8L564.9 210.4L565.1 208.7L565.3 208.5L565.5 210.9L565.6 209.8L565.8 208.4L566.0 209.5L566.2 209.9L566.3 210.1L566.5 210.3L566.7 210.1L566.8 210.3L567.0 209.5L567.2 210.3L567.4 210.3L567.5 210.8L567.7 210.0L567.9 210.6L568.1 210.1L568.2 209.3L568.4 209.8L568.6 209.7L568.7 209.8L568.9 210.0L569.1 210.1L569.3 210.2L569.4 209.5L569.6 210.7L569.8 209.2L570.0 210.0L570.1 210.5L570.3 210.3L570.5 210.4L570.6 209.9L570.8 210.5L571.0 209.3L571.2 210.5L571.3 211.4L571.5 210.5L571.7 211.3L571.9 210.0L572.0 209.3L572.2 209.6L572.4 210.8L572.6 210.5L572.7 208.9L572.9 209.8L573.1 210.0L573.2 209.3L573.4 208.4L573.6 209.2L573.8 209.9L573.9 209.8L574.1 209.6L574.3 210.4L574.5 210.7L574.6 210.0L574.8 210.6L575.0 210.0L575.1 209.9L575.3 208.5L575.5 210.5L575.7 210.1L575.8 210.1L576.0 209.7L576.2 209.3L576.4 210.3L576.5 210.5L576.7 211.0L576.9 210.6L577.0 209.7L577.2 210.0L577.4 210.6L577.6 210.2L577.7 210.0L577.9 209.7L578.1 210.4L578.3 210.2L578.4 211.1L578.6 210.7L578.8 209.0L578.9 211.4L579.1 210.2L579.3 209.9L579.5 210.2L579.6 210.5L579.8 210.0L580.0 210.0L580.2 210.1L580.3 212.0L580.5 213.6L580.7 216.3L580.8 212.6L581.0 197.8L581.2 182.9L581.4 205.9L581.5 226.5L581.7 217.8L581.9 206.3L582.1 202.1L582.2 204.7L582.4 209.1L582.6 210.0L582.7 209.5L582.9 210.9L583.1 209.9L583.3 210.3L583.4 210.2L583.6 211.1L583.8 210.6L584.0 210.0L584.1 209.4L584.3 209.4L584.5 210.1L584.7 210.1L584.8 210.5L585.0 209.7L585.2 210.2L585.3 209.6L585.5 208.9L585.7 210.0L585.9 210.9L586.0 210.5L586.2 210.9L586.4 210.8L586.6 209.2L586.9 211.0L587.1 209.6L587.2 209.2L587.4 210.2L587.6 210.4L587.8 210.2L587.9 209.8L588.1 209.6L588.3 209.3L588.5 209.2L588.6 209.3L588.8 209.1L589.0 209.6L589.1 211.0L589.3 210.1L589.5 209.8L589.7 210.2L589.8 209.4L590.0 210.2L590.2 210.6L590.4 209.1L590.5 209.6L590.7 209.9L590.9 209.4L591.0 209.3L591.2 209.8L591.4 211.6L591.6 210.4L591.7 210.3L591.9 210.6L592.1 209.9L592.3 209.2L592.4 210.3L592.6 210.7L592.8 208.7L592.9 210.3L593.1 210.8L593.3 209.8L593.5 209.7L593.6 210.4L593.8 209.5L594.0 210.3L594.2 210.6L594.3 209.9L594.5 209.5L594.7 210.4L594.8 209.8L595.0 210.1L595.2 208.2L595.4 210.4L595.5 209.1L595.7 210.0L595.9 210.1L596.1 209.5L596.2 209.4L596.4 209.2L596.6 209.8L596.8 210.4L596.9 210.3L597.1 209.7L597.3 209.6L597.4 209.1L597.6 209.7L597.8 209.3L598.0 209.0L598.1 209.9L598.3 210.9L598.5 210.7L598.7 210.9L598.8 209.0L599.0 210.5L599.2 209.2L599.3 209.6L599.5 208.9L599.7 209.4L599.9 210.1L600.0 210.1L600.2 209.9L600.4 209.9L600.6 210.3L600.9 209.0L601.1 211.1L601.2 209.8L601.4 210.6L601.6 209.9L601.8 209.5L601.9 210.0L602.1 209.5L602.3 211.0L602.5 209.3L602.6 210.4L602.8 209.6L603.0 209.9L603.1 211.6L603.3 210.5L603.5 209.9L603.7 209.1L603.8 210.6L604.0 213.2L604.2 216.3L604.4 211.2L604.5 197.5L604.7 184.9L604.9 206.8L605.0 226.2L605.2 217.3L605.4 205.5L605.6 202.8L605.7 205.1L605.9 208.7L606.1 210.5L606.3 209.2L606.4 210.8L606.6 210.1L606.8 209.8L606.9 209.4L607.1 209.7L607.3 209.8L607.5 210.5L607.6 210.8L607.8 210.0L608.0 210.4L608.2 210.8L608.3 210.8L608.5 210.3L608.7 211.2L608.8 210.9L609.0 211.0L609.2 209.9L609.4 209.7L609.5 208.7L609.7 210.9L609.9 210.4L610.1 209.4L610.2 210.1L610.4 210.2L610.6 208.9L610.8 210.2L610.9 210.7L611.1 210.8L611.3 209.8L611.4 209.8L611.6 210.9L611.8 210.6L612.0 209.7L612.1 209.6L612.3 210.4L612.5 209.6L612.7 209.6L612.8 211.1L613.0 210.2L613.2 209.7L613.3 210.4L613.5 211.4L613.7 210.2L613.9 209.5L614.0 209.0L614.2 211.4L614.4 208.3L614.6 210.7L614.9 209.2L615.1 209.4L615.2 209.9L615.4 210.7L615.6 209.6L615.8 210.5L615.9 211.6L616.1 208.2L616.3 209.6L616.5 208.9L616.6 210.6L616.8 209.1L617.0 209.0L617.1 209.0L617.3 210.0L617.5 210.8L617.7 210.1L617.8 211.4L618.0 211.1L618.2 209.9L618.4 210.6L618.5 210.1L618.7 210.1L618.9 208.8L619.0 209.2L619.2 210.0L619.4 209.2L619.6 210.5L619.7 210.2L619.9 209.4L620.1 210.8L620.3 210.2L620.4 210.8L620.6 209.9L620.8 209.0L620.9 210.5L621.1 209.9L621.3 210.6L621.5 210.7L621.6 210.8L621.8 209.1L622.0 208.5L622.2 209.7L622.3 210.5L622.5 209.6L622.7 210.2L622.9 209.5L623.0 209.8L623.2 209.8L623.4 209.6L623.5 210.4L623.7 210.3L623.9 211.1L624.1 210.3L624.2 210.9L624.4 210.1L624.6 210.6L624.8 209.9L624.9 209.7L625.1 210.9L625.3 210.5L625.4 210.6L625.6 209.5L625.8 208.9L626.0 209.5L626.1 211.1L626.3 212.8L626.5 217.1L626.7 211.5L626.8 197.7L627.0 183.6L627.2 204.6L627.3 226.0L627.5 219.5L627.7 206.8L627.9 202.5L628.0 205.3L628.2 209.9L628.4 210.3L628.6 209.7L628.7 209.9L628.9 209.2L629.1 209.9L629.2 208.5L629.4 210.5L629.6 209.8L629.8 211.2L629.9 210.8L630.1 209.2L630.3 210.6L630.5 209.7L630.6 210.0L630.8 210.7L631.0 210.2L631.1 210.3L631.3 210.3L631.5 209.5L631.7 209.6L631.8 210.4L632.0 210.6L632.2 209.8L632.4 210.1L632.5 209.3L632.7 208.3L632.9 209.5L633.0 210.0L633.2 210.1L633.4 210.5L633.6 210.6L633.7 210.6L633.9 210.3L634.1 210.3L634.3 209.5L634.4 210.3L634.6 210.1L634.8 210.8L635.0 209.0L635.1 209.7L635.3 208.9L635.5 209.5L635.6 209.1L635.8 210.2L636.0 209.5L636.2 208.3L636.3 210.8L636.5 209.3L636.7 208.9L636.9 209.7L637.0 209.5L637.2 209.2L637.4 210.4L637.5 209.7L637.7 210.6L637.9 210.4L638.1 210.4L638.2 210.1L638.4 209.9L638.6 209.7L638.8 210.9L638.9 208.7L639.1 209.3L639.3 209.5L639.4 210.2L639.6 210.1L639.8 209.6L640.0 209.7L640.1 211.1L640.3 209.5L640.5 208.1L640.7 211.2L640.8 209.4L641.0 209.8L641.2 210.1L641.3 209.1L641.5 210.8L641.7 209.9L641.9 209.1L642.0 210.1L642.2 210.3L642.4 209.9L642.6 210.3L642.7 209.0L642.9 210.6L643.1 209.4L643.2 210.8L643.4 209.6L643.6 210.1L643.8 211.7L643.9 210.0L644.1 210.7L644.3 210.3L644.5 209.0L644.6 210.7L644.8 210.7L645.0 209.1L645.1 209.9L645.3 209.0L645.5 209.8L645.7 210.6L645.8 210.0L646.0 209.2L646.2 209.4L646.4 210.0L646.5 210.0L646.7 210.1L646.9 210.4L647.0 208.7L647.2 210.0L647.4 210.7L647.6 210.3L647.7 209.5L647.9 209.6L648.1 210.1L648.3 210.4L648.4 210.0L648.6 211.1L648.8 210.8L649.0 209.5L649.1 210.3L649.3 209.8L649.5 209.3L649.6 210.7L649.8 215.0L650.0 216.9L650.2 212.8L650.3 193.0L650.5 171.5L650.7 204.7L650.9 233.5L651.0 221.9L651.2 205.9L651.4 201.0L651.5 203.8L651.7 208.8L651.9 210.2L652.1 211.1L652.2 210.2L652.4 210.0L652.6 209.9L652.8 210.7L652.9 209.6L653.1 210.8L653.3 210.1L653.4 209.2L653.6 210.5L653.8 210.3L654.0 209.3L654.1 210.2L654.3 210.2L654.5 209.9L654.7 209.3L654.8 211.4L655.0 210.5L655.2 210.7L655.3 210.7L655.5 210.6L655.7 210.5L655.9 209.8L656.0 210.6L656.2 209.9L656.4 209.7L656.6 210.5L656.7 209.9L656.9 208.9L657.2 210.4L657.4 210.0L657.6 210.6L657.8 209.8L657.9 209.4L658.1 210.5L658.3 210.1L658.5 209.3L658.6 210.3L658.8 209.9L659.0 210.7L659.1 210.5L659.3 210.3L659.5 208.6L659.7 210.3L659.8 210.3L660.0 210.4L660.2 210.1L660.4 209.6L660.5 209.9L660.7 208.7L660.9 209.9L661.1 209.1L661.2 209.8L661.4 209.6L661.6 210.9L661.7 210.1L661.9 210.0L662.1 210.2L662.3 211.4L662.4 209.4L662.6 210.2L662.8 210.3L663.0 210.2L663.1 210.1L663.3 209.7L663.5 210.8L663.6 210.6L663.8 209.8L664.0 209.9L664.2 210.2L664.3 210.4L664.5 210.5L664.7 210.0L664.9 209.3L665.0 210.7L665.2 209.0L665.4 209.5L665.5 210.3L665.7 209.5L665.9 210.9L666.1 211.1L666.2 210.8L666.4 210.3L666.6 210.2L666.8 210.3L666.9 209.9L667.1 211.4L667.3 209.7L667.4 210.9L667.6 210.4L667.8 210.3L668.0 210.7L668.1 210.9L668.3 210.6L668.5 210.0L668.7 209.6L668.8 209.6L669.0 210.6L669.2 210.5L669.3 210.6L669.5 209.7L669.7 211.3L669.9 209.2L670.0 210.3L670.2 210.5L670.4 209.8L670.6 209.3L670.7 209.8L670.9 209.3L671.1 209.9L671.2 209.2L671.4 209.2L671.6 210.1L671.8 209.1L671.9 209.9L672.1 209.9L672.3 210.6L672.5 210.3L672.6 210.9L672.8 217.2L673.0 220.1L673.2 213.9L673.3 188.0L673.5 163.1L673.7 203.7L673.8 238.8L674.0 225.7L674.2 204.6L674.4 198.5L674.5 201.6L674.7 208.6L674.9 209.3L675.1 211.2L675.2 209.6L675.4 210.1L675.6 209.5L675.7 210.6L675.9 210.4L676.1 208.6L676.3 210.5L676.4 210.4L676.6 210.2L676.8 210.6L677.0 209.2L677.1 208.9L677.3 210.4L677.5 211.1L677.6 209.3L677.8 209.3L678.0 209.5L678.2 209.3L678.3 210.5L678.5 210.1L678.7 210.9L678.9 210.9L679.0 209.4L679.2 210.4L679.4 208.6L679.5 210.0L679.7 210.4L679.9 209.5L680.1 208.9L680.2 209.7L680.4 210.8L680.6 209.8L680.8 209.1L680.9 210.3L681.1 210.5L681.3 209.4L681.4 209.9L681.6 210.7L681.8 210.2L682.0 210.5L682.1 209.8L682.3 209.9L682.5 209.3L682.7 209.6L682.8 211.0L683.0 209.7L683.2 209.4L683.3 209.7L683.5 209.3L683.7 210.3L683.9 210.6L684.0 209.4L684.2 210.7L684.4 211.4L684.6 209.4L684.7 210.5L684.9 210.2L685.1 210.9L685.2 210.8L685.6 210.2L685.8 209.8L685.9 211.5L686.1 209.5L686.3 210.7L686.5 210.7L686.6 209.6L686.8 210.0L687.0 211.0L687.2 208.8L687.3 210.5L687.5 209.8L687.7 209.9L687.8 209.1L688.0 210.3L688.2 209.4L688.4 210.5L688.5 209.3L688.7 210.5L688.9 210.2L689.1 208.8L689.2 209.8L689.4 209.9L689.6 208.6L689.7 209.8L689.9 210.5L690.1 209.5L690.3 210.7L690.4 209.3L690.6 209.2L690.8 210.4L691.0 210.4L691.1 209.9L691.3 210.0L691.5 210.6L691.6 209.6L691.8 211.3L692.0 210.3L692.2 210.3L692.3 210.2L692.5 209.8L692.7 210.8L692.9 209.6L693.0 210.1L693.2 210.4L693.4 210.9L693.5 210.7L693.7 209.8L693.9 210.6L694.1 210.0L694.2 209.3L694.4 209.3L694.6 209.0L694.8 210.2L694.9 210.7L695.1 209.4L695.3 209.8L695.4 209.3L695.6 210.1L695.8 210.7L696.0 215.9L696.1 220.0L696.3 213.8L696.5 187.9L696.7 161.5L696.8 203.5L697.0 238.6L697.2 225.6L697.3 203.6L697.5 197.0L697.7 201.4L697.9 208.3L698.0 210.0L698.2 208.7L698.4 210.2L698.6 210.8L698.7 210.5L698.9 210.2L699.1 208.6L699.3 209.9L699.4 209.4L699.6 210.6L699.8 209.8L699.9 209.6L700.1 208.9L700.3 210.4L700.5 209.6L700.6 209.8L700.8 210.6L701.0 210.0L701.2 210.2L701.3 211.5L701.5 209.6L701.7 209.7L701.8 210.3L702.0 210.8L702.2 209.1L702.4 209.8L702.5 209.4L702.7 209.1L702.9 210.3L703.1 209.5L703.2 210.2L703.4 210.0L703.6 210.1L703.7 210.0L703.9 209.3L704.1 209.9L704.3 210.1L704.4 210.2L704.6 209.8L704.8 210.6L705.0 210.3L705.1 210.0L705.3 210.4L705.5 210.1L705.6 210.4L705.8 208.7L706.0 209.2L706.2 209.7L706.3 210.0L706.5 208.6L706.7 209.8L706.9 210.1L707.0 209.8L707.2 209.8L707.4 209.1L707.5 210.0L707.7 208.7L707.9 210.6L708.1 209.6L708.2 210.6L708.4 208.9L708.6 210.2L708.8 210.0L708.9 209.4L709.1 209.2L709.3 210.7L709.4 210.2L709.6 210.9L709.8 209.9L710.0 210.1L710.1 210.2L710.3 210.4L710.5 210.2L710.7 210.5L710.8 209.7L711.0 209.0L711.2 211.2L711.4 210.1L711.5 210.3L711.7 209.7L711.9 210.6L712.0 210.1L712.2 210.7L712.4 209.6L712.6 209.9L712.7 210.1L712.9 209.8L713.1 210.2L713.3 211.0L713.4 209.6L713.6 209.8L713.8 210.1L713.9 209.4L714.1 209.2L714.3 210.7L714.5 210.5L714.6 209.0L714.8 209.1L715.0 210.5L715.2 210.7L715.3 210.4L715.5 210.3L715.7 211.0L715.8 210.0L716.0 210.8L716.2 210.8L716.4 209.4L716.5 210.4L716.7 210.0L716.9 209.6L717.1 209.5L717.2 210.2L717.4 210.0L717.6 210.5L717.7 208.9L717.9 209.8L718.1 211.8L718.3 211.9L718.4 210.3L718.6 205.8L718.8 200.1L719.0 208.0L719.1 215.6L719.3 212.8L719.5 209.9L719.6 207.5L719.8 208.5L720.0 208.0L720.2 209.9L720.3 211.3L720.5 210.4L720.7 209.9L720.9 210.8L721.0 210.5L721.2 210.2L721.4 209.8L721.5 210.1L721.7 210.6L721.9 209.5L722.1 210.3L722.2 210.3L722.4 210.9L722.6 210.5L722.8 209.6L722.9 211.0L723.1 210.0L723.3 209.5L723.5 210.2L723.6 209.8L723.8 210.7L724.0 209.2L724.1 209.3L724.3 209.9L724.5 211.1L724.7 210.7L724.8 209.4L725.0 208.9L725.2 209.8L725.4 209.2L725.5 210.4L725.7 210.1L725.9 210.0L726.0 209.7L726.2 211.0L726.4 209.4L726.6 209.2L726.7 210.7L726.9 210.9L727.1 209.8L727.3 210.4L727.4 211.5L727.6 209.5L727.8 209.9L727.9 210.3L728.1 208.7L728.3 209.9L728.5 210.5L728.6 209.9L728.8 210.7L729.0 210.5L729.2 209.8L729.3 210.4" stroke="#b9d8ec" stroke-width="1.1" fill="none" stroke-linejoin="round"/>
<path d="M375.5 154.5v6M375.5 249.5v-6M392.5 154.5v3.5M392.5 249.5v-3.5M410.5 154.5v3.5M410.5 249.5v-3.5M427.5 154.5v3.5M427.5 249.5v-3.5M444.5 154.5v3.5M444.5 249.5v-3.5M461.5 154.5v3.5M461.5 249.5v-3.5M479.5 154.5v3.5M479.5 249.5v-3.5M496.5 154.5v3.5M496.5 249.5v-3.5M513.5 154.5v3.5M513.5 249.5v-3.5M531.5 154.5v3.5M531.5 249.5v-3.5M548.5 154.5v6M548.5 249.5v-6M565.5 154.5v3.5M565.5 249.5v-3.5M582.5 154.5v3.5M582.5 249.5v-3.5M600.5 154.5v3.5M600.5 249.5v-3.5M617.5 154.5v3.5M617.5 249.5v-3.5M634.5 154.5v3.5M634.5 249.5v-3.5M652.5 154.5v3.5M652.5 249.5v-3.5M669.5 154.5v3.5M669.5 249.5v-3.5M686.5 154.5v3.5M686.5 249.5v-3.5M703.5 154.5v3.5M703.5 249.5v-3.5M721.5 154.5v6M721.5 249.5v-6M375.5 210.5h6M729.5 210.5h-6M375.5 178.5h3.5M729.5 178.5h-3.5M375.5 240.5h3.5M729.5 240.5h-3.5" stroke="#1a1a1a" stroke-width="1" fill="none"/><rect x="375.5" y="154.5" width="354.0" height="95.0" fill="none" stroke="#1a1a1a" stroke-width="1.2"/>
<text x="370.3" y="214.1" font-size="14" text-anchor="end" fill="#333" textLength="6.9" lengthAdjust="spacingAndGlyphs">0</text>
<text transform="translate(328.4 202.3) rotate(-90)" font-size="15.5" text-anchor="middle" fill="#333" textLength="47.4" lengthAdjust="spacingAndGlyphs">Level 1</text>
<rect x="375.5" y="270.5" width="354.0" height="95.0" fill="#fff"/>
<path d="M548.5 270.5 V365.5" stroke="#dedede" stroke-width="1" fill="none"/><path d="M721.5 270.5 V365.5" stroke="#dedede" stroke-width="1" fill="none"/>
<path d="M375.5 318.8H729.5" stroke="#cfe3f0" stroke-width="1" fill="none"/>
<path d="M375.5 319.1L375.8 317.4L376.0 317.9L376.2 318.0L376.4 318.2L376.5 317.7L376.7 318.0L376.9 317.8L377.1 318.3L377.2 319.5L377.4 319.7L377.6 319.8L377.7 318.7L377.9 317.7L378.1 318.4L378.3 319.2L378.4 319.0L378.6 319.4L378.8 319.9L379.0 319.4L379.1 319.7L379.3 319.7L379.5 318.7L379.6 319.2L379.8 319.7L380.0 320.2L380.2 318.5L380.3 318.5L380.5 318.7L380.7 317.6L380.9 318.7L381.0 319.7L381.2 318.9L381.4 317.2L381.5 318.3L381.7 319.5L381.9 318.4L382.1 318.0L382.2 317.5L382.4 318.0L382.6 318.8L382.8 319.2L382.9 318.3L383.1 318.0L383.3 320.5L383.5 320.1L383.6 319.0L383.8 317.8L384.0 317.9L384.1 319.0L384.3 318.5L384.5 317.6L384.7 317.9L384.8 318.2L385.0 317.9L385.2 318.7L385.4 318.9L385.5 318.7L385.7 319.3L385.9 318.6L386.0 318.9L386.2 318.9L386.4 317.6L386.6 318.3L386.7 319.3L386.9 319.4L387.1 318.7L387.3 318.1L387.4 318.2L387.6 318.1L387.8 318.6L387.9 319.0L388.1 319.6L388.3 319.3L388.5 318.3L388.6 318.9L388.8 318.4L389.0 317.7L389.2 320.0L389.3 320.4L389.5 319.6L389.8 316.8L390.0 317.7L390.2 319.1L390.4 318.9L390.5 318.7L390.7 318.2L390.9 317.7L391.1 318.6L391.2 318.5L391.4 318.4L391.6 319.2L391.7 318.0L391.9 317.7L392.1 318.9L392.3 319.7L392.4 319.5L392.6 319.1L392.8 318.2L393.0 318.9L393.1 319.3L393.3 318.2L393.5 318.1L393.6 318.2L393.8 317.7L394.0 317.7L394.2 318.2L394.3 318.6L394.5 319.0L394.7 321.8L394.9 323.4L395.0 323.0L395.2 322.7L395.4 319.2L395.6 312.1L395.7 301.5L395.9 295.9L396.1 301.5L396.2 314.9L396.4 327.3L396.6 335.7L396.8 340.2L396.9 337.1L397.1 329.4L397.3 321.6L397.5 316.3L397.6 313.5L397.8 313.7L398.0 316.1L398.1 317.8L398.3 318.6L398.5 319.0L398.7 317.6L398.8 317.4L399.0 318.6L399.2 319.9L399.4 320.5L399.5 320.6L399.7 319.3L399.9 318.8L400.0 319.2L400.2 319.1L400.4 319.1L400.6 318.0L400.7 318.4L400.9 319.4L401.1 319.5L401.3 318.8L401.4 318.9L401.6 320.0L401.8 320.2L401.9 320.4L402.1 319.3L402.3 317.1L402.5 317.9L402.6 318.8L402.8 318.1L403.0 319.3L403.2 319.6L403.3 319.1L403.5 319.3L403.7 318.1L403.8 318.8L404.0 319.7L404.2 318.4L404.4 318.9L404.5 319.0L404.7 318.2L404.9 318.2L405.1 318.5L405.2 318.2L405.4 319.6L405.6 319.1L405.7 316.7L405.9 316.9L406.1 317.7L406.3 319.0L406.4 319.7L406.6 319.3L406.8 319.6L407.0 318.6L407.1 318.7L407.3 319.3L407.5 320.0L407.7 320.0L407.8 318.8L408.0 319.1L408.2 319.6L408.3 318.1L408.5 318.4L408.7 320.1L408.9 319.9L409.0 318.6L409.2 316.9L409.4 317.4L409.6 319.0L409.7 319.5L409.9 318.4L410.1 318.7L410.2 318.5L410.4 317.2L410.6 318.0L410.8 318.4L410.9 318.0L411.1 317.5L411.3 318.5L411.5 318.7L411.6 318.3L411.8 319.4L412.0 319.2L412.1 318.9L412.3 319.5L412.5 320.3L412.7 320.2L412.8 318.5L413.0 316.9L413.2 317.3L413.4 317.8L413.5 318.4L413.7 319.1L413.9 318.7L414.0 319.3L414.2 320.0L414.4 319.3L414.6 318.9L414.7 319.6L414.9 319.2L415.1 318.7L415.3 318.4L415.4 318.2L415.6 319.0L415.8 318.9L415.9 318.8L416.1 319.3L416.3 319.4L416.5 318.6L416.6 318.0L416.8 317.7L417.0 319.0L417.2 320.0L417.3 319.3L417.5 318.9L417.8 319.3L418.0 318.6L418.2 318.3L418.4 319.4L418.5 318.8L418.7 317.7L418.9 319.1L419.1 320.0L419.2 321.4L419.4 322.4L419.6 322.5L419.8 322.6L419.9 319.2L420.1 312.0L420.3 302.6L420.4 297.7L420.6 303.2L420.8 315.1L421.0 328.7L421.1 336.7L421.3 338.9L421.5 335.6L421.7 326.7L421.8 319.6L422.0 315.8L422.2 314.2L422.3 314.3L422.5 315.9L422.7 317.7L422.9 318.9L423.0 318.4L423.2 318.1L423.4 318.3L423.6 318.4L423.7 318.9L423.9 318.9L424.1 318.6L424.2 318.1L424.4 318.2L424.6 319.0L424.8 319.6L424.9 318.3L425.1 318.0L425.3 319.1L425.5 318.1L425.6 317.3L425.8 317.9L426.0 318.7L426.1 317.7L426.3 317.2L426.5 318.3L426.7 318.6L426.8 319.7L427.0 320.4L427.2 319.3L427.4 318.3L427.5 318.7L427.7 319.6L427.9 320.3L428.0 319.8L428.2 319.8L428.4 319.1L428.6 317.6L428.7 316.5L428.9 316.7L429.1 318.6L429.3 319.6L429.4 321.3L429.6 321.1L429.8 319.2L429.9 318.4L430.1 317.9L430.3 318.1L430.5 318.3L430.6 318.3L430.8 317.6L431.0 318.6L431.2 319.7L431.3 319.8L431.5 318.7L431.7 317.1L431.8 317.6L432.0 319.1L432.2 319.4L432.4 318.8L432.5 318.9L432.7 318.9L432.9 318.6L433.1 318.7L433.2 318.5L433.4 318.2L433.6 318.8L433.8 319.0L433.9 319.1L434.1 318.6L434.3 318.5L434.4 318.8L434.6 318.9L434.8 319.9L435.0 319.1L435.1 318.9L435.3 319.0L435.5 318.2L435.7 319.5L435.8 320.3L436.0 319.6L436.2 319.6L436.3 319.9L436.5 319.1L436.7 318.5L436.9 318.7L437.0 318.8L437.2 318.9L437.4 319.1L437.6 319.2L437.7 318.5L437.9 318.4L438.1 319.0L438.2 319.7L438.4 319.3L438.6 318.5L438.8 318.8L438.9 319.4L439.1 318.9L439.3 317.1L439.5 317.6L439.6 318.8L439.8 318.4L440.0 320.0L440.1 320.2L440.3 319.1L440.5 318.4L440.7 318.2L440.8 319.4L441.0 319.4L441.2 318.8L441.4 319.0L441.5 319.1L441.7 319.6L441.9 319.7L442.0 318.5L442.2 317.2L442.4 317.3L442.6 318.2L442.7 318.0L442.9 317.5L443.1 317.3L443.3 317.2L443.4 318.3L443.6 318.9L443.8 319.1L443.9 319.9L444.1 321.1L444.3 323.0L444.5 324.7L444.6 323.6L444.8 320.0L445.0 312.4L445.2 302.1L445.3 298.7L445.5 303.7L445.7 313.9L445.9 325.8L446.2 336.0L446.4 334.4L446.5 327.7L446.7 319.5L446.9 315.2L447.1 313.0L447.2 314.0L447.4 316.3L447.6 317.8L447.8 319.0L447.9 319.0L448.1 319.6L448.3 320.2L448.4 319.1L448.6 318.5L448.8 318.6L449.0 319.7L449.1 320.3L449.3 319.6L449.5 319.1L449.7 319.1L449.8 318.6L450.0 318.3L450.2 318.8L450.3 318.8L450.5 318.4L450.7 318.7L450.9 318.4L451.0 317.9L451.2 318.5L451.4 318.7L451.6 318.5L451.7 317.9L451.9 317.7L452.1 318.0L452.2 318.1L452.4 318.2L452.6 318.0L452.8 318.1L452.9 320.0L453.1 319.2L453.3 318.0L453.5 319.4L453.6 319.6L453.8 319.4L454.0 318.1L454.1 317.3L454.3 319.4L454.5 319.4L454.7 318.7L454.8 317.9L455.0 318.3L455.2 320.7L455.4 320.0L455.5 319.0L455.7 319.2L455.9 320.3L456.0 319.8L456.2 317.6L456.4 318.9L456.6 319.2L456.7 318.5L456.9 317.8L457.1 317.2L457.3 318.7L457.4 318.3L457.6 317.9L457.8 318.8L458.0 318.7L458.1 318.7L458.3 320.1L458.5 318.7L458.6 317.8L458.8 319.3L459.0 319.0L459.2 319.5L459.3 320.5L459.5 319.9L459.7 319.4L459.9 319.1L460.0 318.1L460.2 318.4L460.4 318.8L460.5 318.2L460.7 319.1L460.9 319.3L461.1 319.2L461.2 318.7L461.4 317.9L461.6 318.5L461.8 319.6L461.9 319.5L462.1 319.2L462.3 318.8L462.4 318.5L462.6 319.3L462.8 318.7L463.0 317.9L463.1 318.7L463.3 318.5L463.5 318.3L463.7 319.1L463.8 318.9L464.0 319.2L464.2 319.5L464.3 319.1L464.5 318.0L464.7 317.1L464.9 318.1L465.0 318.0L465.2 317.9L465.4 318.6L465.6 318.1L465.7 318.1L465.9 317.3L466.1 317.3L466.2 319.3L466.4 318.7L466.6 318.3L466.8 319.2L466.9 320.7L467.1 320.1L467.3 318.4L467.5 319.3L467.6 320.5L467.8 321.2L468.0 322.3L468.1 321.6L468.3 318.4L468.5 311.7L468.7 301.2L468.8 296.2L469.0 303.2L469.2 315.2L469.4 326.5L469.5 335.9L469.7 338.8L469.9 335.3L470.0 329.0L470.2 322.0L470.4 315.2L470.6 313.5L470.7 314.7L470.9 314.9L471.1 316.3L471.3 318.4L471.4 319.4L471.6 318.8L471.8 318.3L472.0 318.7L472.1 319.8L472.3 318.9L472.5 317.6L472.6 318.0L472.8 318.9L473.0 318.9L473.2 318.5L473.3 318.3L473.5 319.0L473.7 319.4L473.9 318.8L474.0 319.5L474.2 319.3L474.4 318.7L474.5 319.0L474.7 318.8L474.9 319.4L475.1 319.6L475.2 318.6L475.4 318.4L475.6 318.0L475.8 318.9L475.9 320.3L476.1 319.5L476.3 318.4L476.4 317.3L476.6 317.2L476.8 318.9L477.0 318.8L477.1 318.8L477.3 320.1L477.5 318.2L477.7 317.1L477.8 318.2L478.0 318.1L478.2 317.5L478.3 317.6L478.5 317.9L478.7 318.7L478.9 320.2L479.0 318.8L479.2 317.2L479.4 317.7L479.6 318.4L479.7 318.6L479.9 319.1L480.1 318.3L480.2 317.6L480.4 318.1L480.6 318.3L480.8 318.0L480.9 317.9L481.1 318.1L481.3 319.0L481.5 319.2L481.6 317.3L481.8 317.9L482.0 319.2L482.1 318.4L482.3 317.7L482.5 317.9L482.7 319.4L482.8 319.4L483.0 319.2L483.2 319.9L483.4 319.0L483.5 318.7L483.7 318.5L483.9 316.6L484.1 316.6L484.2 317.9L484.4 318.9L484.6 319.7L484.7 319.8L484.9 319.7L485.1 319.7L485.3 319.8L485.4 319.3L485.6 319.5L485.8 320.2L486.0 320.4L486.1 319.3L486.3 318.5L486.5 318.2L486.6 317.6L486.8 318.4L487.0 318.6L487.2 319.2L487.3 318.3L487.5 316.8L487.7 318.2L487.9 319.6L488.0 319.2L488.2 319.6L488.4 320.3L488.5 318.8L488.7 318.3L488.9 319.0L489.1 318.5L489.2 318.8L489.4 319.2L489.6 318.9L489.8 319.6L489.9 319.0L490.1 319.1L490.3 318.3L490.4 318.2L490.6 318.6L490.8 319.7L491.0 321.8L491.1 323.0L491.3 324.6L491.5 322.7L491.7 318.0L491.8 311.5L492.0 301.8L492.2 297.1L492.3 303.2L492.5 314.4L492.7 326.0L492.9 335.9L493.0 338.5L493.2 333.9L493.4 327.7L493.6 321.2L493.7 317.1L493.9 315.4L494.1 314.5L494.2 315.3L494.4 317.8L494.6 319.0L494.8 318.0L494.9 318.0L495.1 319.3L495.3 318.4L495.5 317.8L495.6 318.5L495.8 319.1L496.0 320.0L496.2 320.3L496.3 319.7L496.5 319.2L496.7 318.7L496.8 318.3L497.0 318.4L497.2 318.5L497.4 319.2L497.5 320.6L497.7 320.3L497.9 319.6L498.1 319.7L498.2 319.3L498.4 319.7L498.6 320.1L498.7 319.5L498.9 318.8L499.1 319.1L499.3 318.9L499.4 318.6L499.6 319.5L499.8 319.4L500.0 317.7L500.1 318.1L500.3 318.5L500.5 317.4L500.6 317.2L500.8 318.4L501.0 318.1L501.2 317.6L501.3 318.9L501.5 319.1L501.7 318.6L501.9 318.4L502.0 318.9L502.2 318.2L502.5 319.8L502.7 318.9L502.9 317.9L503.1 317.8L503.2 318.8L503.4 318.8L503.6 317.9L503.8 317.5L503.9 318.5L504.1 319.4L504.3 318.8L504.4 319.9L504.6 320.1L504.8 318.6L505.0 318.4L505.1 319.5L505.3 318.7L505.5 317.7L505.7 317.7L505.8 318.7L506.0 319.3L506.2 318.2L506.3 318.6L506.5 319.6L506.7 318.8L506.9 317.4L507.0 318.6L507.2 320.9L507.4 321.1L507.6 320.2L507.7 319.5L507.9 318.5L508.1 318.5L508.2 319.3L508.4 319.1L508.6 319.3L508.8 319.4L508.9 319.2L509.1 317.6L509.3 316.8L509.5 318.8L509.6 319.8L509.8 319.6L510.0 320.0L510.2 320.1L510.3 319.6L510.5 318.7L510.7 318.5L510.8 319.5L511.0 320.0L511.2 320.2L511.4 319.5L511.5 319.0L511.7 318.3L511.9 318.5L512.1 318.6L512.2 318.1L512.4 318.7L512.6 319.9L512.7 320.7L512.9 319.1L513.1 317.6L513.3 318.1L513.4 318.9L513.6 320.1L513.8 322.1L514.0 323.5L514.1 323.2L514.3 321.5L514.5 318.4L514.6 311.0L514.8 300.7L515.0 295.6L515.2 302.2L515.3 313.9L515.5 325.8L515.7 335.9L515.9 338.6L516.0 334.6L516.2 327.7L516.5 315.7L516.7 314.4L516.9 315.4L517.1 315.9L517.2 317.3L517.4 318.7L517.6 318.6L517.8 319.8L517.9 319.5L518.1 318.8L518.3 318.3L518.4 317.4L518.6 317.6L518.8 318.1L519.0 318.6L519.1 318.7L519.3 318.3L519.5 319.0L519.7 319.1L519.8 318.9L520.0 318.7L520.2 318.5L520.3 318.9L520.5 319.5L520.7 318.8L520.9 319.3L521.0 320.1L521.2 318.3L521.4 319.5L521.6 320.7L521.7 318.8L521.9 319.3L522.1 318.3L522.3 318.8L522.4 319.5L522.6 317.1L522.8 317.4L522.9 318.4L523.1 318.7L523.3 319.1L523.5 318.8L523.6 319.0L523.8 319.6L524.0 318.4L524.2 318.9L524.3 319.6L524.5 318.9L524.7 319.5L524.8 318.9L525.0 317.9L525.2 319.5L525.4 319.7L525.5 319.3L525.7 319.6L525.9 319.1L526.1 319.2L526.2 318.7L526.4 318.7L526.6 318.6L526.7 318.3L526.9 318.3L527.1 318.6L527.3 319.4L527.4 319.7L527.6 319.1L527.8 317.9L528.0 317.1L528.1 316.9L528.3 317.9L528.5 318.8L528.6 318.7L528.8 318.6L529.0 318.0L529.2 317.4L529.3 318.7L529.5 319.7L529.7 318.4L529.9 317.8L530.0 318.8L530.2 318.3L530.5 319.2L530.7 319.2L530.9 320.2L531.1 319.4L531.2 319.0L531.4 319.8L531.6 319.5L531.8 318.8L531.9 318.4L532.1 318.8L532.3 319.7L532.4 319.8L532.6 319.7L532.8 319.5L533.0 318.4L533.1 318.6L533.3 317.6L533.5 317.3L533.7 318.2L533.8 318.4L534.0 318.8L534.2 318.4L534.4 317.6L534.5 318.9L534.7 318.9L534.9 317.9L535.0 318.0L535.2 318.0L535.4 319.4L535.6 320.8L535.7 319.9L535.9 320.3L536.1 323.4L536.3 323.8L536.4 322.1L536.6 319.7L536.8 313.4L536.9 303.7L537.1 297.7L537.3 302.5L537.5 314.8L537.6 326.6L537.8 334.9L538.0 339.5L538.2 336.7L538.3 328.5L538.5 321.6L538.7 316.6L538.8 314.0L539.0 314.2L539.2 316.4L539.4 318.1L539.5 317.2L539.7 318.0L539.9 320.3L540.1 319.6L540.2 318.3L540.4 318.2L540.6 319.2L540.7 318.9L540.9 318.7L541.1 319.9L541.3 319.8L541.4 319.2L541.6 318.5L541.8 318.0L542.0 318.5L542.1 318.3L542.3 318.2L542.5 318.2L542.6 319.1L542.8 320.5L543.0 319.3L543.2 319.1L543.3 319.8L543.5 319.0L543.7 319.1L543.9 319.3L544.0 318.3L544.2 319.4L544.4 319.7L544.5 317.0L544.7 317.5L544.9 318.8L545.1 318.4L545.2 317.3L545.4 318.4L545.6 319.4L545.8 318.9L545.9 318.6L546.1 318.4L546.3 318.3L546.5 318.7L546.6 319.0L546.8 319.2L547.0 319.6L547.1 319.3L547.3 319.0L547.5 319.5L547.7 318.6L547.8 318.0L548.0 319.7L548.2 319.0L548.4 318.6L548.5 318.9L548.7 318.5L548.9 318.7L549.0 318.6L549.2 319.0L549.4 319.1L549.6 317.6L549.7 318.9L549.9 320.0L550.1 318.5L550.3 319.2L550.4 320.2L550.6 318.4L550.8 317.8L550.9 317.8L551.1 317.3L551.3 318.5L551.5 318.5L551.6 318.2L551.8 317.8L552.0 317.9L552.2 318.5L552.3 318.6L552.5 317.9L552.7 317.6L552.8 318.9L553.0 319.7L553.2 319.0L553.4 319.0L553.5 319.4L553.7 319.6L553.9 319.5L554.1 318.7L554.2 318.0L554.4 318.2L554.6 317.6L554.7 317.7L554.9 317.0L555.1 316.4L555.3 317.9L555.4 318.8L555.6 320.7L555.8 320.5L556.0 319.0L556.1 318.3L556.3 320.1L556.5 321.4L556.6 322.1L556.8 323.3L557.0 323.4L557.2 319.8L557.3 310.5L557.5 299.9L557.7 294.7L557.9 301.8L558.0 314.4L558.2 326.4L558.5 339.4L558.7 335.5L558.9 328.0L559.1 321.4L559.2 316.8L559.4 313.2L559.6 312.4L559.8 314.7L559.9 317.0L560.1 318.2L560.3 318.5L560.5 318.9L560.6 319.4L560.8 318.0L561.0 317.4L561.1 319.0L561.3 319.9L561.5 320.0L561.7 318.8L561.8 318.0L562.0 318.5L562.2 318.9L562.4 318.9L562.5 319.6L562.7 318.7L562.9 317.8L563.0 317.2L563.2 317.8L563.4 319.3L563.6 318.4L563.7 318.4L563.9 319.7L564.1 320.1L564.3 319.3L564.4 318.5L564.6 318.7L564.8 318.3L564.9 317.7L565.1 318.1L565.3 318.6L565.5 318.9L565.6 318.6L565.8 318.0L566.0 318.2L566.2 318.5L566.3 318.7L566.5 319.8L566.7 320.2L566.8 318.9L567.0 318.1L567.2 317.6L567.4 317.9L567.5 318.3L567.7 317.6L567.9 317.5L568.1 318.6L568.2 319.3L568.4 318.8L568.6 319.3L568.7 319.1L568.9 317.9L569.1 318.5L569.3 318.0L569.4 317.8L569.6 319.1L569.8 319.1L570.0 319.3L570.1 319.0L570.3 318.6L570.5 317.8L570.6 317.5L570.8 318.1L571.0 318.6L571.2 319.7L571.3 319.7L571.5 319.3L571.7 318.7L571.9 318.3L572.0 317.9L572.2 317.4L572.4 317.9L572.6 318.2L572.7 318.6L572.9 318.3L573.1 317.9L573.2 318.7L573.4 318.9L573.6 317.0L573.8 317.4L573.9 319.0L574.1 319.3L574.3 320.0L574.5 318.9L574.6 318.1L574.8 318.6L575.0 317.6L575.1 316.3L575.3 317.9L575.5 318.7L575.7 317.8L575.8 318.2L576.0 318.3L576.2 318.5L576.4 317.9L576.5 317.5L576.7 318.3L576.9 317.9L577.0 317.6L577.2 318.0L577.4 318.3L577.6 317.6L577.7 317.5L577.9 318.6L578.1 319.3L578.3 319.5L578.4 319.6L578.6 319.3L578.8 318.6L578.9 319.8L579.1 320.0L579.3 318.6L579.5 319.0L579.6 320.8L579.8 321.5L580.0 322.7L580.2 324.6L580.3 323.7L580.5 319.1L580.7 309.9L580.8 299.0L581.0 294.6L581.2 301.9L581.4 315.4L581.5 328.1L581.7 337.2L581.9 341.2L582.1 337.5L582.2 328.1L582.4 320.3L582.6 315.1L582.7 313.5L582.9 314.9L583.1 316.3L583.3 316.5L583.4 316.7L583.6 318.2L583.8 318.3L584.0 318.3L584.1 318.1L584.3 317.7L584.5 318.8L584.7 318.6L584.8 318.8L585.0 319.8L585.2 320.2L585.3 319.5L585.5 318.7L585.7 318.9L585.9 319.1L586.0 318.2L586.2 318.2L586.4 319.5L586.6 318.5L586.7 317.3L586.9 317.8L587.1 319.6L587.2 320.1L587.4 318.8L587.6 318.4L587.8 317.9L587.9 318.7L588.1 319.2L588.3 318.8L588.5 318.4L588.6 318.1L588.8 318.3L589.0 318.6L589.1 320.0L589.3 320.2L589.5 319.8L589.7 319.7L589.8 318.7L590.0 317.4L590.2 317.9L590.4 319.2L590.5 319.5L590.7 319.3L590.9 318.4L591.0 317.8L591.2 318.3L591.4 318.7L591.6 320.2L591.7 320.4L591.9 319.9L592.1 319.2L592.3 318.5L592.4 319.2L592.6 319.5L592.8 318.1L592.9 318.5L593.1 319.9L593.3 319.5L593.5 319.3L593.6 319.4L593.8 318.7L594.0 317.5L594.2 318.8L594.3 319.8L594.5 318.8L594.7 318.8L594.8 319.0L595.0 319.1L595.2 318.4L595.4 318.5L595.5 319.1L595.7 318.9L595.9 318.7L596.1 318.8L596.2 318.3L596.4 318.2L596.6 318.7L596.8 318.7L596.9 319.4L597.1 319.8L597.3 319.9L597.4 319.3L597.6 319.1L597.8 319.8L598.0 319.3L598.1 318.4L598.3 319.5L598.5 318.8L598.7 317.8L598.8 318.8L599.0 318.3L599.2 318.2L599.3 319.1L599.5 317.9L599.7 318.2L599.9 319.5L600.0 318.4L600.2 318.9L600.4 319.5L600.6 318.6L600.7 317.2L600.9 317.9L601.1 319.3L601.2 318.5L601.4 318.4L601.6 319.4L601.8 319.3L601.9 318.5L602.1 318.5L602.3 317.9L602.5 317.6L602.6 318.0L602.8 318.6L603.0 319.9L603.1 321.0L603.3 321.6L603.5 323.0L603.7 323.6L603.8 322.7L604.0 318.1L604.2 308.6L604.4 299.8L604.5 296.0L604.7 301.8L604.9 313.9L605.0 326.0L605.2 335.8L605.4 339.6L605.6 336.1L605.7 328.8L605.9 320.7L606.1 315.4L606.3 313.5L606.4 313.3L606.6 314.6L606.8 316.3L606.9 317.4L607.1 318.5L607.3 318.9L607.5 318.6L607.6 318.8L607.8 318.6L608.0 318.2L608.2 319.4L608.3 319.8L608.5 319.5L608.7 319.0L608.8 319.2L609.0 320.5L609.2 320.3L609.4 318.8L609.5 318.6L609.7 319.5L609.9 319.0L610.1 320.1L610.2 320.0L610.4 318.6L610.6 318.5L610.8 318.4L610.9 318.5L611.1 319.0L611.3 319.0L611.4 318.8L611.6 317.5L611.8 317.5L612.0 318.5L612.1 319.0L612.3 319.6L612.5 318.4L612.7 318.6L612.8 320.0L613.0 319.4L613.2 319.1L613.3 317.9L613.5 319.0L613.7 319.9L613.9 318.2L614.0 319.0L614.2 319.8L614.4 318.9L614.6 317.6L614.9 320.2L615.1 319.1L615.2 317.4L615.4 318.1L615.6 320.2L615.8 319.2L615.9 318.1L616.1 318.3L616.3 318.2L616.5 319.0L616.6 319.3L616.8 318.2L617.0 317.1L617.1 319.2L617.3 320.5L617.5 318.3L617.7 318.0L617.8 319.8L618.0 319.6L618.2 318.9L618.4 318.9L618.5 319.1L618.7 319.2L618.9 319.2L619.0 318.9L619.2 319.1L619.4 319.4L619.6 319.0L619.7 318.1L619.9 317.8L620.1 318.7L620.3 318.6L620.4 318.3L620.6 318.0L620.8 317.9L620.9 317.5L621.1 317.0L621.3 318.1L621.5 319.1L621.6 318.5L621.8 318.0L622.0 318.6L622.2 319.7L622.3 320.7L622.5 319.6L622.7 318.2L622.9 317.9L623.0 319.1L623.2 318.9L623.4 318.5L623.5 318.9L623.7 318.3L623.9 319.0L624.1 319.6L624.2 320.3L624.4 320.5L624.6 320.3L624.8 319.6L624.9 318.6L625.1 318.4L625.3 318.7L625.4 320.4L625.6 321.7L625.8 322.8L626.0 323.1L626.1 321.6L626.3 318.9L626.5 311.6L626.7 301.5L626.8 297.2L627.0 302.3L627.2 313.2L627.3 325.9L627.5 335.8L627.7 340.1L627.9 336.6L628.0 328.2L628.2 321.9L628.4 316.6L628.6 313.1L628.7 314.0L628.9 316.0L629.2 318.2L629.4 319.0L629.6 319.8L629.8 317.9L629.9 317.7L630.1 318.5L630.3 318.6L630.5 319.6L630.6 319.5L630.8 318.6L631.0 319.1L631.1 319.2L631.3 317.9L631.5 317.5L631.7 319.1L631.8 320.3L632.0 320.3L632.2 319.1L632.4 317.8L632.5 318.1L632.7 318.9L632.9 320.0L633.0 319.4L633.2 318.7L633.4 319.2L633.6 319.2L633.7 318.4L633.9 318.3L634.1 319.3L634.3 320.6L634.4 320.1L634.6 318.9L634.8 318.9L635.0 319.2L635.1 319.4L635.3 318.8L635.5 318.4L635.6 318.8L635.8 319.3L636.0 319.7L636.2 319.1L636.3 319.3L636.5 320.1L636.7 319.7L636.9 318.3L637.0 318.0L637.2 317.9L637.4 318.0L637.5 319.1L637.7 319.8L637.9 319.9L638.1 318.3L638.2 317.8L638.4 318.2L638.6 318.0L638.8 318.4L638.9 318.9L639.1 318.8L639.3 318.4L639.4 318.2L639.6 318.3L639.8 318.4L640.0 319.1L640.1 319.4L640.3 319.5L640.5 318.8L640.7 319.4L640.8 320.1L641.0 317.6L641.2 317.6L641.3 319.6L641.5 319.5L641.7 318.1L641.9 318.2L642.0 318.5L642.2 318.4L642.4 319.0L642.6 317.2L642.7 317.0L642.9 319.1L643.1 319.4L643.2 318.9L643.4 318.4L643.6 318.1L643.8 318.3L643.9 319.5L644.1 319.3L644.3 318.7L644.5 319.1L644.6 319.8L644.8 320.0L645.0 319.5L645.1 319.2L645.3 319.6L645.5 319.6L645.7 318.7L645.8 319.4L646.0 319.8L646.2 319.6L646.4 318.8L646.5 319.7L646.7 320.4L646.9 319.9L647.0 320.0L647.2 318.6L647.4 318.7L647.6 319.1L647.7 319.2L647.9 318.2L648.1 317.2L648.3 317.7L648.4 319.0L648.6 320.4L648.8 319.6L649.0 320.3L649.1 322.8L649.3 324.2L649.5 325.4L649.6 323.6L649.8 317.9L650.0 307.9L650.2 295.2L650.3 289.0L650.5 296.7L650.7 312.9L650.9 328.4L651.0 340.4L651.2 345.2L651.4 340.8L651.5 332.4L651.7 322.1L651.9 314.0L652.1 311.8L652.2 312.2L652.4 315.1L652.6 317.4L652.8 317.7L652.9 317.3L653.1 318.3L653.3 319.7L653.4 318.5L653.6 318.5L653.8 318.1L654.0 317.6L654.1 319.3L654.3 318.7L654.5 317.3L654.7 318.7L654.8 318.7L655.0 318.1L655.2 318.1L655.3 318.2L655.5 319.9L655.7 319.4L655.9 318.0L656.0 317.1L656.2 316.6L656.4 317.4L656.6 318.5L656.7 319.2L656.9 319.3L657.1 319.4L657.2 319.4L657.4 320.4L657.6 320.1L657.8 318.7L657.9 317.4L658.1 316.9L658.3 318.6L658.5 318.8L658.6 319.2L658.8 319.8L659.0 320.2L659.1 319.0L659.3 317.6L659.5 319.1L659.7 319.5L659.8 318.3L660.0 318.0L660.2 318.3L660.4 319.1L660.5 319.6L660.7 319.1L660.9 318.2L661.1 318.7L661.2 319.9L661.4 318.8L661.6 318.7L661.7 318.7L661.9 318.1L662.1 318.2L662.3 317.3L662.4 317.4L662.6 318.0L662.8 318.9L663.0 319.7L663.1 318.8L663.3 317.6L663.5 317.1L663.6 316.7L663.8 317.3L664.0 318.5L664.2 318.1L664.3 318.2L664.5 318.8L664.7 319.4L664.9 318.8L665.0 318.8L665.2 319.1L665.4 319.3L665.5 319.0L665.7 318.8L665.9 318.9L666.1 319.2L666.2 320.0L666.4 318.4L666.6 318.6L666.8 319.2L666.9 319.0L667.1 320.4L667.3 319.9L667.4 318.4L667.6 319.2L667.8 319.1L668.0 318.9L668.1 319.8L668.3 319.4L668.5 319.2L668.7 317.9L668.8 318.4L669.0 319.3L669.2 317.8L669.3 319.4L669.5 320.9L669.7 319.5L669.9 318.8L670.0 318.9L670.2 317.9L670.4 318.4L670.6 319.6L670.7 321.0L670.9 320.2L671.2 319.2L671.4 318.6L671.6 319.7L671.8 319.4L671.9 319.2L672.1 321.5L672.3 324.4L672.5 325.8L672.6 323.9L672.8 318.9L673.0 309.0L673.2 295.3L673.3 288.3L673.5 296.1L673.7 313.1L673.8 329.2L674.0 340.9L674.2 347.7L674.4 343.5L674.5 331.7L674.7 320.5L674.9 314.0L675.1 312.0L675.2 312.6L675.4 314.1L675.6 316.2L675.7 318.3L675.9 319.2L676.1 318.8L676.3 318.8L676.4 320.1L676.6 319.4L676.8 318.8L677.0 319.0L677.1 318.4L677.3 317.9L677.5 317.5L677.6 318.5L677.8 319.2L678.0 319.6L678.2 318.6L678.3 317.6L678.5 317.8L678.7 318.2L678.9 320.1L679.0 319.1L679.2 317.9L679.4 318.7L679.5 318.7L679.7 318.4L679.9 318.1L680.1 319.4L680.2 319.1L680.4 318.5L680.6 319.4L680.8 318.1L680.9 317.3L681.1 318.5L681.3 320.0L681.4 319.8L681.6 318.4L681.8 318.5L682.0 319.6L682.1 320.0L682.3 320.0L682.5 319.4L682.7 318.2L682.8 317.8L683.0 318.6L683.2 319.1L683.3 318.4L683.5 318.8L683.7 319.2L683.9 317.7L684.0 317.5L684.2 318.2L684.4 318.5L684.6 319.0L684.7 319.8L684.9 319.8L685.1 318.1L685.2 316.9L685.4 316.9L685.6 317.7L685.8 318.4L685.9 319.1L686.1 319.2L686.3 318.5L686.5 318.9L686.6 318.7L686.8 318.8L687.0 320.4L687.2 320.4L687.3 320.3L687.5 320.5L687.7 318.9L687.8 318.3L688.0 318.8L688.2 318.0L688.4 317.4L688.5 318.4L688.7 318.3L688.9 317.8L689.1 318.6L689.2 318.5L689.4 319.4L689.6 320.1L689.7 319.3L689.9 318.5L690.1 318.7L690.3 319.1L690.4 318.3L690.6 317.4L690.8 317.6L691.0 317.6L691.1 318.3L691.3 319.2L691.5 318.8L691.6 318.8L691.8 319.3L692.0 318.1L692.2 318.0L692.3 319.5L692.5 319.1L692.7 317.5L692.9 317.7L693.0 318.1L693.2 318.3L693.4 319.3L693.5 319.5L693.7 319.3L693.9 317.8L694.1 318.4L694.2 318.5L694.4 318.5L694.6 319.6L694.8 318.7L694.9 318.7L695.1 320.1L695.3 323.1L695.4 324.6L695.6 324.8L695.8 322.2L696.0 317.1L696.1 308.9L696.3 297.2L696.5 291.8L696.7 299.1L696.8 313.6L697.0 328.4L697.2 339.9L697.3 344.3L697.5 340.6L697.7 330.0L697.9 320.7L698.0 316.2L698.2 313.0L698.4 313.0L698.6 315.4L698.7 316.2L698.9 317.8L699.1 318.5L699.3 318.6L699.6 317.2L699.8 318.3L699.9 319.2L700.1 319.4L700.3 319.2L700.5 318.0L700.6 319.0L700.8 319.1L701.0 319.0L701.2 320.0L701.3 320.3L701.5 318.6L701.7 317.6L701.8 318.6L702.0 319.0L702.2 318.6L702.4 319.4L702.5 320.0L702.7 317.5L702.9 317.8L703.1 319.0L703.2 318.4L703.4 318.9L703.6 319.2L703.7 318.2L703.9 318.1L704.1 318.5L704.3 318.8L704.4 318.8L704.6 318.6L704.8 317.9L705.0 317.6L705.1 318.5L705.3 320.3L705.5 319.8L705.6 318.0L705.8 318.9L706.0 320.5L706.2 320.6L706.3 318.9L706.5 318.9L706.7 319.7L706.9 318.9L707.0 318.0L707.2 318.1L707.4 318.9L707.5 319.2L707.7 318.2L707.9 317.3L708.1 318.2L708.2 319.6L708.4 320.0L708.6 318.9L708.8 318.9L708.9 318.7L709.1 318.1L709.3 318.4L709.4 318.3L709.6 318.1L709.8 319.0L710.0 319.5L710.1 317.7L710.3 318.2L710.5 319.8L710.7 318.5L710.8 318.3L711.0 319.4L711.2 320.0L711.4 319.2L711.5 317.9L711.7 317.4L711.9 318.0L712.0 318.2L712.2 318.8L712.4 319.3L712.6 319.1L712.7 319.1L712.9 318.3L713.1 317.8L713.3 318.8L713.6 318.3L713.8 319.7L713.9 319.5L714.1 319.7L714.3 319.6L714.5 318.6L714.6 318.7L714.8 318.6L715.0 318.7L715.2 319.0L715.3 319.6L715.5 319.6L715.7 319.3L715.8 319.5L716.0 319.1L716.2 318.7L716.4 319.6L716.5 320.6L716.7 319.9L716.9 319.0L717.1 319.1L717.2 320.1L717.4 321.2L717.6 323.1L717.7 324.5L717.9 323.9L718.1 319.5L718.3 309.1L718.4 295.5L718.6 289.0L718.8 296.7L719.0 313.2L719.1 329.2L719.3 340.8L719.5 345.4L719.6 340.9L719.8 331.2L720.0 321.9L720.2 314.7L720.3 311.3L720.5 312.1L720.7 314.6L720.9 315.3L721.0 316.9L721.2 319.0L721.4 318.7L721.5 319.3L721.7 319.4L721.9 317.7L722.1 317.2L722.2 317.9L722.4 318.1L722.6 318.4L722.8 318.2L722.9 318.3L723.1 319.1L723.3 319.0L723.5 318.2L723.6 318.1L723.8 318.2L724.0 319.6L724.1 319.3L724.3 316.8L724.5 316.7L724.7 318.2L724.8 319.5L725.0 319.1L725.2 319.2L725.4 318.9L725.5 318.7L725.7 318.6L725.9 317.5L726.0 319.2L726.2 319.8L726.4 319.0L726.6 320.0L726.7 320.0L726.9 319.3L727.1 318.3L727.3 319.1L727.6 317.1L727.8 317.3L727.9 318.2L728.1 318.5L728.3 319.5L728.5 319.2L728.6 318.3L728.8 318.2L729.0 316.9L729.2 316.9L729.3 318.1" stroke="#b9d8ec" stroke-width="1.1" fill="none" stroke-linejoin="round"/>
<path d="M375.5 270.5v6M375.5 365.5v-6M392.5 270.5v3.5M392.5 365.5v-3.5M410.5 270.5v3.5M410.5 365.5v-3.5M427.5 270.5v3.5M427.5 365.5v-3.5M444.5 270.5v3.5M444.5 365.5v-3.5M461.5 270.5v3.5M461.5 365.5v-3.5M479.5 270.5v3.5M479.5 365.5v-3.5M496.5 270.5v3.5M496.5 365.5v-3.5M513.5 270.5v3.5M513.5 365.5v-3.5M531.5 270.5v3.5M531.5 365.5v-3.5M548.5 270.5v6M548.5 365.5v-6M565.5 270.5v3.5M565.5 365.5v-3.5M582.5 270.5v3.5M582.5 365.5v-3.5M600.5 270.5v3.5M600.5 365.5v-3.5M617.5 270.5v3.5M617.5 365.5v-3.5M634.5 270.5v3.5M634.5 365.5v-3.5M652.5 270.5v3.5M652.5 365.5v-3.5M669.5 270.5v3.5M669.5 365.5v-3.5M686.5 270.5v3.5M686.5 365.5v-3.5M703.5 270.5v3.5M703.5 365.5v-3.5M721.5 270.5v6M721.5 365.5v-6M375.5 318.5h6M729.5 318.5h-6M375.5 290.5h3.5M729.5 290.5h-3.5M375.5 347.5h3.5M729.5 347.5h-3.5" stroke="#1a1a1a" stroke-width="1" fill="none"/><rect x="375.5" y="270.5" width="354.0" height="95.0" fill="none" stroke="#1a1a1a" stroke-width="1.2"/>
<text x="370.3" y="322.9" font-size="14" text-anchor="end" fill="#333" textLength="6.9" lengthAdjust="spacingAndGlyphs">0</text>
<text transform="translate(328.4 318.3) rotate(-90)" font-size="15.5" text-anchor="middle" fill="#333" textLength="47.4" lengthAdjust="spacingAndGlyphs">Level 2</text>
<rect x="375.5" y="386.5" width="354.0" height="95.0" fill="#fff"/>
<path d="M548.5 386.5 V481.5" stroke="#dedede" stroke-width="1" fill="none"/><path d="M721.5 386.5 V481.5" stroke="#dedede" stroke-width="1" fill="none"/><path d="M375.5 398.5 H729.5" stroke="#dedede" stroke-width="1" fill="none"/><path d="M375.5 469.5 H729.5" stroke="#dedede" stroke-width="1" fill="none"/>
<path d="M375.5 433.9H729.5" stroke="#cfe3f0" stroke-width="1" fill="none"/>
<path d="M375.5 433.4L375.8 431.9L376.0 432.7L376.2 432.8L376.4 434.1L376.5 434.4L376.7 434.4L376.9 434.0L377.1 433.4L377.2 433.1L377.4 432.8L377.6 434.0L377.7 433.3L377.9 433.9L378.1 433.1L378.3 432.1L378.4 432.7L378.6 431.6L378.8 432.1L379.0 431.6L379.1 432.8L379.3 433.3L379.5 433.6L379.6 434.4L379.8 433.6L380.0 433.9L380.2 432.9L380.3 433.8L380.5 433.8L380.7 434.4L380.9 434.6L381.0 433.9L381.2 433.6L381.4 433.5L381.5 433.7L381.7 433.0L381.9 433.4L382.1 433.2L382.2 434.3L382.4 434.7L382.6 434.0L382.8 434.3L382.9 433.0L383.1 434.3L383.3 435.7L383.5 436.2L383.6 437.0L383.8 435.9L384.0 434.9L384.1 434.2L384.3 433.6L384.5 433.8L384.7 434.5L384.8 435.1L385.0 434.4L385.2 435.4L385.4 434.8L385.5 433.3L385.7 434.2L385.9 433.4L386.0 433.3L386.2 433.6L386.4 433.2L386.6 433.3L386.7 432.9L386.9 433.2L387.1 433.2L387.3 432.0L387.4 432.6L387.6 433.5L387.8 433.9L387.9 433.7L388.1 433.1L388.3 432.2L388.5 431.2L388.6 432.7L388.8 432.6L389.0 433.0L389.2 434.3L389.3 433.6L389.5 433.3L389.8 433.8L390.0 434.7L390.2 435.3L390.4 435.0L390.5 434.5L390.7 434.2L390.9 434.7L391.1 433.9L391.2 434.2L391.4 433.3L391.6 432.8L391.7 433.6L391.9 434.3L392.1 434.2L392.3 434.3L392.4 433.6L392.6 433.7L392.8 434.9L393.0 435.9L393.1 436.9L393.3 435.6L393.5 435.3L393.6 435.5L393.8 436.3L394.0 437.0L394.2 436.3L394.3 432.7L394.5 427.4L394.7 423.6L394.9 420.8L395.0 422.4L395.2 430.7L395.4 442.0L395.6 454.6L395.7 463.0L395.9 460.7L396.1 449.6L396.2 432.4L396.4 416.2L396.6 405.8L396.8 405.4L396.9 414.4L397.1 427.0L397.3 441.6L397.5 452.7L397.6 455.6L397.8 453.6L398.0 447.7L398.1 437.6L398.3 430.8L398.5 425.7L398.7 423.4L398.8 425.3L399.0 427.9L399.2 433.8L399.4 439.4L399.5 443.3L399.7 444.5L399.9 441.7L400.0 436.3L400.2 431.6L400.4 429.4L400.6 428.9L400.7 431.0L400.9 433.9L401.1 435.8L401.3 436.1L401.4 436.6L401.6 435.2L401.8 433.2L401.9 433.3L402.1 432.8L402.3 433.4L402.5 434.4L402.6 434.3L402.8 434.3L403.0 433.8L403.2 433.4L403.3 433.0L403.5 433.6L403.7 433.5L403.8 434.1L404.0 434.2L404.2 433.6L404.4 434.0L404.5 434.3L404.7 435.6L404.9 435.5L405.1 435.5L405.2 435.0L405.4 434.6L405.6 434.8L405.7 435.0L405.9 435.8L406.1 434.9L406.3 434.9L406.4 434.2L406.6 434.2L406.8 434.5L407.0 435.2L407.1 435.7L407.3 435.4L407.5 435.1L407.7 434.1L407.8 433.9L408.0 433.2L408.2 433.4L408.3 433.2L408.5 432.7L408.7 433.2L408.9 433.5L409.0 433.6L409.2 434.2L409.4 434.0L409.6 433.2L409.7 433.0L409.9 432.9L410.1 433.8L410.2 434.5L410.4 435.0L410.6 434.2L410.8 433.7L410.9 433.8L411.1 433.3L411.3 434.2L411.5 434.1L411.6 433.0L411.8 432.6L412.0 432.0L412.1 431.8L412.3 433.2L412.5 433.7L412.7 434.0L412.8 434.1L413.0 433.8L413.2 434.1L413.4 434.3L413.5 434.2L413.7 433.2L413.9 433.0L414.0 433.8L414.2 434.5L414.4 436.1L414.6 436.7L414.7 435.5L414.9 434.8L415.1 434.2L415.3 433.7L415.4 434.4L415.6 435.3L415.8 435.8L415.9 436.4L416.1 435.2L416.3 435.2L416.5 433.8L416.6 432.6L416.8 433.5L417.0 432.7L417.2 433.6L417.3 434.1L417.5 433.4L417.8 432.9L418.0 433.2L418.2 434.8L418.4 436.1L418.5 437.2L418.7 436.4L418.9 433.5L419.1 427.8L419.2 422.0L419.4 419.6L419.6 420.1L419.8 429.4L419.9 443.2L420.1 456.0L420.3 466.1L420.4 464.4L420.6 452.7L420.8 434.7L421.0 415.0L421.1 402.3L421.3 399.6L421.5 408.0L421.7 423.0L421.8 439.2L422.0 451.8L422.2 456.1L422.3 454.4L422.5 447.7L422.7 437.5L422.9 429.1L423.0 422.8L423.2 419.5L423.4 420.9L423.6 426.2L423.7 432.3L423.9 439.1L424.1 443.5L424.2 443.9L424.4 440.8L424.6 435.5L424.8 431.5L424.9 428.2L425.1 429.0L425.3 430.8L425.5 432.9L425.6 435.5L425.8 437.5L426.0 437.8L426.1 436.9L426.3 435.5L426.5 432.6L426.7 432.5L426.8 432.5L427.0 433.4L427.2 434.4L427.4 433.9L427.5 434.0L427.7 434.0L427.9 433.8L428.0 434.5L428.2 435.6L428.4 434.9L428.6 435.1L428.7 435.3L428.9 435.1L429.1 435.4L429.3 434.5L429.4 433.1L429.6 432.2L429.8 433.2L429.9 434.0L430.1 434.3L430.3 434.6L430.5 433.4L430.6 433.5L430.8 432.8L431.0 432.2L431.2 432.5L431.3 432.9L431.5 432.7L431.7 433.8L431.8 433.1L432.0 431.6L432.2 433.2L432.4 432.7L432.5 433.5L432.7 434.3L432.9 433.6L433.1 432.7L433.2 432.2L433.4 432.5L433.6 432.1L433.8 433.3L433.9 433.8L434.1 432.6L434.3 433.6L434.4 433.7L434.6 433.5L434.8 435.3L435.0 436.0L435.1 435.1L435.3 435.6L435.5 435.3L435.7 434.4L435.8 435.5L436.0 435.6L436.2 435.2L436.3 433.8L436.5 432.8L436.7 431.9L436.9 432.8L437.0 434.1L437.2 435.1L437.4 435.1L437.6 434.4L437.7 434.3L437.9 433.8L438.1 434.5L438.2 435.2L438.4 434.9L438.6 435.6L438.8 435.9L438.9 435.3L439.1 435.9L439.3 435.1L439.5 433.9L439.6 433.6L439.8 433.1L440.0 433.2L440.1 433.3L440.3 434.4L440.5 434.3L440.7 434.9L440.8 436.0L441.0 435.0L441.2 435.4L441.4 434.6L441.5 433.4L441.7 434.6L441.9 434.4L442.0 433.5L442.2 433.4L442.4 431.2L442.6 431.0L442.7 433.2L442.9 435.3L443.1 437.2L443.3 438.3L443.4 438.5L443.6 436.7L443.8 433.1L443.9 428.6L444.1 422.4L444.3 418.1L444.5 419.5L444.6 427.7L444.8 440.5L445.0 455.7L445.2 465.7L445.3 465.1L445.5 452.9L445.7 433.1L445.9 411.6L446.2 396.6L446.4 407.3L446.5 424.4L446.7 442.0L446.9 454.5L447.1 459.2L447.2 456.7L447.4 448.1L447.6 438.7L447.8 428.7L447.9 422.9L448.1 420.4L448.3 421.3L448.4 424.7L448.6 431.0L448.8 437.8L449.0 442.0L449.1 445.0L449.3 443.0L449.5 437.8L449.7 432.8L449.8 428.9L450.0 427.7L450.2 431.0L450.3 434.1L450.5 436.1L450.7 437.5L450.9 437.0L451.0 435.4L451.2 433.2L451.4 432.6L451.6 431.2L451.7 432.5L451.9 435.0L452.1 435.0L452.2 435.7L452.4 435.0L452.6 434.2L452.8 434.6L452.9 434.0L453.1 433.1L453.3 432.9L453.5 433.6L453.6 433.4L453.8 434.0L454.0 433.5L454.1 432.6L454.3 432.0L454.5 432.3L454.7 432.3L454.8 433.4L455.0 435.0L455.2 435.4L455.4 435.7L455.5 434.5L455.7 434.6L455.9 433.3L456.0 433.9L456.2 434.3L456.4 433.8L456.6 435.4L456.7 434.5L456.9 433.9L457.1 434.2L457.3 432.5L457.4 432.8L457.6 432.9L457.8 433.3L458.0 435.2L458.1 435.6L458.3 435.9L458.5 435.7L458.6 434.4L458.8 435.3L459.0 435.7L459.2 436.5L459.3 436.2L459.5 435.2L459.7 434.9L459.9 434.5L460.0 434.7L460.2 434.6L460.4 434.2L460.5 434.7L460.7 434.6L460.9 434.1L461.1 434.0L461.2 432.2L461.4 432.9L461.6 433.2L461.8 433.2L461.9 433.6L462.1 433.6L462.3 433.5L462.4 434.2L462.6 434.0L462.8 433.4L463.0 433.4L463.1 432.1L463.3 433.3L463.5 433.9L463.7 433.0L463.8 434.3L464.0 434.3L464.2 433.4L464.3 434.0L464.5 434.5L464.7 433.2L464.9 434.5L465.0 435.6L465.2 435.0L465.4 435.6L465.6 435.5L465.7 434.8L465.9 435.0L466.1 434.7L466.2 434.5L466.4 434.8L466.6 436.0L466.8 438.2L466.9 439.5L467.1 438.8L467.3 434.0L467.5 427.1L467.6 420.9L467.8 417.2L468.0 421.0L468.1 429.6L468.3 442.8L468.5 456.4L468.7 463.5L468.8 462.5L469.0 450.0L469.2 432.1L469.4 413.5L469.5 400.5L469.7 397.2L469.9 405.7L470.0 421.6L470.2 439.2L470.4 452.6L470.6 458.4L470.7 456.3L470.9 448.1L471.1 440.0L471.3 429.8L471.4 422.7L471.6 420.7L471.8 421.4L472.0 427.1L472.1 434.4L472.3 439.7L472.5 443.0L472.6 442.9L472.8 439.7L473.0 435.9L473.2 431.5L473.3 429.5L473.5 429.0L473.7 429.5L473.9 431.8L474.2 435.8L474.4 436.0L474.5 434.8L474.7 433.9L474.9 432.8L475.1 432.8L475.2 433.1L475.4 433.1L475.6 433.1L475.8 433.8L475.9 433.3L476.1 432.6L476.3 432.9L476.4 432.8L476.6 433.4L476.8 433.2L477.0 433.8L477.1 433.5L477.3 434.8L477.5 435.6L477.7 435.7L477.8 436.5L478.0 436.2L478.2 436.3L478.3 435.3L478.5 434.2L478.7 433.9L478.9 434.0L479.0 433.9L479.2 435.4L479.4 436.3L479.6 435.3L479.7 435.4L479.9 433.8L480.1 432.8L480.2 433.9L480.4 434.5L480.6 434.8L480.8 435.1L480.9 434.8L481.1 435.2L481.3 436.2L481.5 435.3L481.6 434.7L481.8 434.6L482.0 434.5L482.1 435.3L482.3 435.2L482.5 435.2L482.7 434.7L482.8 435.6L483.0 436.6L483.2 435.7L483.4 435.1L483.5 434.6L483.7 434.3L483.9 434.1L484.1 434.8L484.2 434.5L484.4 433.8L484.6 434.1L484.7 433.3L484.9 432.6L485.1 433.2L485.3 433.3L485.4 434.0L485.6 435.1L485.8 435.3L486.0 434.8L486.1 435.6L486.3 434.3L486.5 433.6L486.6 434.2L486.8 433.1L487.0 433.4L487.2 432.9L487.3 433.0L487.5 433.4L487.7 433.8L487.9 433.5L488.0 432.7L488.2 433.1L488.4 433.2L488.5 434.6L488.7 435.0L488.9 434.3L489.1 432.6L489.2 433.0L489.4 432.5L489.6 432.7L489.8 435.2L489.9 435.8L490.1 438.0L490.3 438.8L490.4 436.6L490.6 433.7L490.8 427.2L491.0 421.8L491.1 418.5L491.3 419.7L491.5 428.2L491.7 440.8L491.8 454.2L492.0 462.2L492.2 461.7L492.3 449.8L492.5 431.6L492.7 412.0L492.9 400.7L493.0 399.8L493.2 408.8L493.4 426.2L493.6 441.3L493.7 451.7L493.9 455.9L494.1 453.3L494.2 445.2L494.4 436.6L494.6 428.5L494.8 421.8L494.9 419.9L495.1 422.0L495.3 426.8L495.5 432.5L495.6 438.4L495.8 440.9L496.0 441.6L496.2 440.9L496.3 436.9L496.5 433.2L496.7 429.8L496.8 427.9L497.0 429.8L497.2 431.9L497.4 435.2L497.5 436.4L497.7 436.3L497.9 436.8L498.1 434.3L498.2 434.8L498.4 434.5L498.6 433.6L498.7 435.0L498.9 433.7L499.1 433.7L499.3 434.4L499.4 433.0L499.6 433.4L499.8 433.3L500.0 433.5L500.1 435.1L500.3 434.6L500.5 434.2L500.6 433.7L500.8 433.7L501.0 433.7L501.2 434.9L501.3 435.1L501.5 434.8L501.7 435.6L501.9 434.6L502.0 434.8L502.2 435.1L502.5 433.4L502.7 432.4L502.9 431.9L503.1 432.3L503.2 432.3L503.4 432.3L503.6 431.1L503.8 431.7L503.9 432.0L504.1 432.7L504.3 435.8L504.4 436.5L504.6 436.6L504.8 436.2L505.0 434.6L505.1 433.3L505.3 432.6L505.5 433.1L505.7 432.1L505.8 431.7L506.0 432.2L506.2 432.5L506.3 432.5L506.5 433.5L506.7 433.9L506.9 433.3L507.0 434.4L507.2 433.8L507.4 433.1L507.6 432.5L507.7 431.9L507.9 432.9L508.1 433.4L508.2 433.6L508.4 434.2L508.6 432.2L508.8 432.2L508.9 433.0L509.1 432.2L509.3 433.3L509.5 433.2L509.6 433.0L509.8 433.4L510.0 433.4L510.2 432.9L510.3 433.0L510.5 433.0L510.7 433.0L510.8 433.0L511.0 434.5L511.2 435.2L511.4 436.1L511.5 436.6L511.7 434.7L511.9 433.4L512.1 432.5L512.2 432.4L512.4 432.9L512.6 433.4L512.7 435.6L512.9 437.0L513.1 436.8L513.3 436.2L513.4 433.0L513.6 426.9L513.8 421.7L514.0 418.7L514.1 419.5L514.3 428.7L514.5 442.9L514.6 456.8L514.8 465.7L515.0 464.0L515.2 450.8L515.3 430.9L515.5 411.1L515.7 398.5L515.9 397.4L516.0 408.2L516.2 425.7L516.5 455.0L516.7 459.1L516.9 455.5L517.1 448.1L517.2 438.1L517.4 429.2L517.6 423.4L517.8 420.5L517.9 422.2L518.1 426.0L518.3 432.7L518.4 439.6L518.6 442.6L518.8 444.0L519.0 441.0L519.1 435.8L519.3 432.4L519.5 429.3L519.7 429.5L519.8 431.6L520.0 434.2L520.2 436.7L520.3 436.6L520.5 437.0L520.7 434.8L520.9 434.0L521.0 434.4L521.2 434.6L521.4 434.6L521.6 434.8L521.7 434.5L521.9 434.0L522.1 435.6L522.3 434.8L522.4 434.4L522.6 432.9L522.8 432.3L522.9 434.3L523.1 433.8L523.3 435.0L523.5 435.0L523.6 432.9L523.8 433.5L524.0 432.7L524.2 432.6L524.3 433.8L524.5 433.4L524.7 434.4L524.8 433.7L525.0 432.8L525.2 433.0L525.4 432.4L525.5 432.7L525.7 433.4L525.9 432.9L526.1 433.4L526.2 433.4L526.4 433.7L526.6 434.1L526.7 433.8L526.9 434.6L527.1 434.3L527.3 434.6L527.4 434.4L527.6 434.4L527.8 433.9L528.0 432.8L528.1 433.0L528.3 433.5L528.5 433.7L528.6 433.9L528.8 434.3L529.0 432.8L529.2 432.6L529.3 432.9L529.5 432.9L529.7 433.7L529.9 434.2L530.0 434.4L530.2 434.0L530.4 433.5L530.5 433.5L530.7 433.5L530.9 433.6L531.1 434.7L531.2 434.9L531.4 435.4L531.6 435.7L531.8 435.0L531.9 434.7L532.1 434.7L532.3 434.3L532.4 434.0L532.6 434.7L532.8 434.2L533.0 435.2L533.1 434.5L533.3 433.8L533.5 434.1L533.7 433.3L533.8 434.2L534.0 433.8L534.2 432.6L534.4 432.5L534.5 432.3L534.7 432.5L534.9 435.3L535.0 435.9L535.2 436.5L535.4 435.4L535.6 431.8L535.7 426.9L535.9 421.6L536.1 419.4L536.3 419.9L536.4 428.3L536.6 441.2L536.8 453.6L536.9 462.0L537.1 460.1L537.3 448.2L537.5 429.9L537.6 411.6L537.8 401.3L538.0 400.6L538.2 410.6L538.3 426.3L538.5 440.5L538.7 451.2L538.8 455.6L539.0 453.6L539.2 446.8L539.4 438.6L539.5 429.9L539.7 423.6L539.9 422.5L540.1 422.7L540.2 426.5L540.4 432.2L540.6 437.6L540.7 442.3L540.9 443.7L541.1 441.5L541.3 436.7L541.4 431.7L541.6 427.4L541.8 426.2L542.0 428.3L542.1 431.5L542.3 434.2L542.5 436.7L542.6 435.7L542.8 433.6L543.0 433.4L543.2 432.1L543.3 432.2L543.5 433.5L543.7 434.2L543.9 434.8L544.0 434.8L544.2 434.7L544.5 434.2L544.7 435.2L544.9 434.1L545.1 435.2L545.2 435.3L545.4 434.3L545.6 435.9L545.8 434.3L545.9 433.3L546.1 434.1L546.3 433.2L546.5 434.1L546.6 434.5L546.8 434.0L547.0 434.0L547.1 432.7L547.3 432.7L547.5 432.0L547.7 431.8L547.8 433.2L548.0 433.3L548.2 433.8L548.4 434.9L548.5 433.5L548.7 433.6L548.9 433.7L549.0 433.4L549.2 434.1L549.4 433.9L549.6 434.3L549.7 433.8L549.9 435.0L550.1 434.4L550.3 434.8L550.4 436.0L550.6 435.4L550.8 436.6L550.9 435.7L551.1 435.0L551.3 434.4L551.5 434.4L551.6 433.5L551.8 432.7L552.0 431.8L552.2 431.9L552.3 432.7L552.5 433.5L552.7 434.3L552.8 433.3L553.0 434.6L553.2 434.7L553.4 435.6L553.5 436.8L553.7 436.3L553.9 436.3L554.1 436.4L554.2 435.5L554.4 434.6L554.6 434.6L554.7 433.9L554.9 433.9L555.1 434.7L555.3 435.4L555.4 436.2L555.6 437.2L555.8 437.4L556.0 435.8L556.1 431.3L556.3 424.9L556.5 419.5L556.6 416.2L556.8 419.1L557.0 429.5L557.2 442.9L557.3 456.8L557.5 466.2L557.7 464.1L557.9 452.6L558.0 433.3L558.2 414.2L558.5 397.3L558.7 406.2L558.9 421.6L559.1 439.4L559.2 451.7L559.4 456.4L559.6 453.2L559.8 446.5L559.9 437.3L560.1 429.4L560.3 424.5L560.5 422.1L560.6 423.3L560.8 426.7L561.0 432.8L561.1 437.1L561.3 440.5L561.5 442.0L561.7 439.2L561.8 435.8L562.0 431.6L562.2 428.6L562.4 428.3L562.5 429.7L562.7 434.2L562.9 436.6L563.0 437.0L563.2 437.2L563.4 434.7L563.6 433.1L563.7 432.1L563.9 431.6L564.1 432.4L564.3 433.2L564.4 434.2L564.6 434.0L564.8 432.9L564.9 432.5L565.1 432.7L565.3 433.7L565.5 434.5L565.6 434.0L565.8 433.4L566.0 433.1L566.2 433.4L566.3 433.7L566.5 433.7L566.7 433.7L566.8 433.2L567.0 432.8L567.2 433.1L567.4 432.1L567.5 431.5L567.7 432.4L567.9 431.8L568.1 432.8L568.2 433.9L568.4 434.1L568.6 435.0L568.7 434.7L568.9 434.2L569.1 433.8L569.3 432.9L569.4 434.8L569.6 434.7L569.8 435.9L570.0 436.3L570.1 435.1L570.3 435.2L570.5 433.5L570.6 434.5L570.8 433.9L571.0 434.0L571.2 435.8L571.3 434.5L571.5 434.6L571.7 434.8L571.9 434.2L572.0 432.8L572.2 433.0L572.4 433.7L572.6 433.9L572.7 435.8L572.9 435.8L573.1 434.8L573.2 434.9L573.4 434.4L573.6 434.5L573.8 435.2L573.9 435.0L574.1 435.5L574.3 434.8L574.5 433.8L574.6 433.6L574.8 433.4L575.0 433.7L575.1 432.9L575.3 433.0L575.5 432.8L575.7 432.5L575.8 434.1L576.0 433.7L576.2 433.8L576.4 434.5L576.5 433.7L576.7 433.2L576.9 432.7L577.0 432.6L577.2 432.8L577.4 432.1L577.6 433.2L577.7 432.9L577.9 432.3L578.1 433.2L578.3 432.3L578.4 432.7L578.6 433.7L578.8 434.5L578.9 436.4L579.1 436.9L579.3 436.1L579.5 433.4L579.6 427.8L579.8 422.8L580.0 419.4L580.2 420.5L580.3 428.0L580.5 439.8L580.7 453.8L580.8 461.8L581.0 461.4L581.2 450.4L581.4 430.5L581.5 413.4L581.7 400.6L581.9 399.1L582.1 409.4L582.2 424.8L582.4 441.1L582.6 453.1L582.7 456.9L582.9 453.3L583.1 447.0L583.3 438.0L583.4 430.3L583.6 425.6L583.8 422.9L584.0 423.6L584.1 427.6L584.3 433.8L584.5 439.3L584.7 443.0L584.8 444.3L585.0 441.6L585.2 436.1L585.3 431.2L585.5 428.4L585.7 428.1L585.9 430.3L586.0 434.5L586.2 436.5L586.4 437.6L586.6 437.7L586.9 437.0L587.1 436.3L587.2 435.4L587.4 434.1L587.6 434.3L587.8 433.9L587.9 434.4L588.1 434.7L588.3 433.9L588.5 433.8L588.6 433.4L588.8 433.1L589.0 432.6L589.1 432.8L589.3 433.7L589.5 434.3L589.7 434.5L589.8 434.6L590.0 434.6L590.2 433.6L590.4 433.4L590.5 432.8L590.7 433.5L590.9 433.7L591.0 434.3L591.2 435.2L591.4 434.8L591.6 434.5L591.7 433.7L591.9 433.6L592.1 433.8L592.3 434.4L592.4 435.1L592.6 433.9L592.8 434.0L592.9 435.0L593.1 434.9L593.3 435.8L593.5 434.9L593.6 433.6L593.8 432.3L594.0 432.5L594.2 432.9L594.3 434.2L594.5 435.2L594.7 434.5L594.8 434.4L595.0 432.8L595.2 432.9L595.4 432.6L595.5 432.3L595.7 433.5L595.9 433.8L596.1 435.5L596.2 436.6L596.4 435.9L596.6 435.0L596.8 433.2L596.9 432.3L597.1 432.5L597.3 433.6L597.4 434.1L597.6 433.9L597.8 434.1L598.0 433.1L598.1 433.3L598.3 434.6L598.5 433.8L598.7 434.1L598.8 434.6L599.0 433.9L599.2 433.3L599.3 432.6L599.5 431.4L599.7 431.8L599.9 433.1L600.0 433.4L600.2 435.0L600.4 434.8L600.6 435.5L600.9 433.7L601.1 433.0L601.2 431.8L601.4 432.8L601.6 433.4L601.8 433.3L601.9 434.1L602.1 434.2L602.3 435.7L602.5 438.0L602.6 437.5L602.8 437.0L603.0 432.7L603.1 426.7L603.3 422.8L603.5 419.4L603.7 422.7L603.8 430.6L604.0 443.6L604.2 458.4L604.4 465.6L604.5 464.2L604.7 451.2L604.9 432.0L605.0 412.7L605.2 401.5L605.4 400.5L605.6 409.7L605.7 426.3L605.9 441.6L606.1 453.5L606.3 457.3L606.4 454.1L606.6 448.0L606.8 439.0L606.9 431.0L607.1 425.7L607.3 422.0L607.5 423.5L607.6 427.1L607.8 432.3L608.0 438.4L608.2 442.1L608.3 443.2L608.5 441.6L608.7 436.9L608.8 431.6L609.0 428.2L609.2 427.6L609.4 428.8L609.5 432.8L609.7 436.4L609.9 437.5L610.1 439.3L610.2 436.7L610.4 435.4L610.6 434.4L610.8 433.4L610.9 434.1L611.1 433.7L611.3 434.4L611.4 434.5L611.6 433.3L611.8 433.3L612.0 433.7L612.1 432.8L612.3 433.4L612.5 432.7L612.7 431.3L612.8 432.3L613.0 432.2L613.2 432.3L613.3 433.2L613.5 432.6L613.7 434.8L613.9 435.7L614.0 434.7L614.2 435.8L614.4 434.5L614.6 434.0L614.7 434.7L614.9 432.8L615.1 433.5L615.2 433.6L615.4 433.5L615.6 435.1L615.8 434.1L615.9 433.2L616.1 432.9L616.3 431.9L616.5 433.3L616.6 434.4L616.8 434.9L617.0 435.3L617.1 434.0L617.3 432.2L617.5 432.6L617.7 432.9L617.8 432.7L618.0 434.6L618.2 434.6L618.4 434.2L618.5 433.9L618.7 433.6L618.9 434.0L619.0 434.1L619.2 434.2L619.4 434.6L619.6 433.4L619.7 432.9L619.9 433.6L620.1 433.2L620.3 432.8L620.4 432.4L620.6 431.9L620.8 431.5L620.9 433.0L621.1 434.6L621.3 434.3L621.5 434.6L621.6 434.0L621.8 433.2L622.0 433.3L622.2 433.7L622.3 433.8L622.5 433.3L622.7 433.5L622.9 432.8L623.0 434.1L623.2 434.9L623.4 434.0L623.5 433.4L623.7 432.1L623.9 431.5L624.1 432.9L624.2 434.1L624.4 434.7L624.6 436.9L624.8 437.4L624.9 437.9L625.1 436.8L625.3 432.9L625.4 427.3L625.6 422.6L625.8 419.0L626.0 420.6L626.1 430.2L626.3 441.9L626.5 455.4L626.7 463.8L626.8 460.3L627.0 449.6L627.2 431.3L627.3 411.5L627.5 401.8L627.7 399.5L627.9 409.0L628.0 425.4L628.2 441.2L628.4 453.3L628.6 458.3L628.7 456.3L628.9 448.6L629.2 430.2L629.4 424.4L629.6 422.0L629.8 422.6L629.9 427.6L630.1 432.4L630.3 437.4L630.5 441.3L630.6 442.3L630.8 440.4L631.0 436.0L631.1 431.0L631.3 428.1L631.5 428.6L631.7 429.5L631.8 432.2L632.0 434.5L632.2 434.8L632.4 436.4L632.5 436.5L632.7 435.4L632.9 434.5L633.0 433.9L633.2 434.2L633.4 434.6L633.6 434.7L633.7 435.0L633.9 434.4L634.1 435.3L634.3 435.6L634.4 435.2L634.6 435.8L634.8 435.6L635.0 435.3L635.1 435.7L635.3 434.8L635.5 434.1L635.6 434.0L635.8 433.7L636.0 434.8L636.2 434.6L636.3 435.1L636.5 434.6L636.7 434.0L636.9 434.2L637.0 433.5L637.2 433.3L637.4 432.6L637.5 431.8L637.7 432.1L637.9 432.3L638.1 432.2L638.2 432.6L638.4 432.8L638.6 433.1L638.8 432.3L638.9 432.5L639.1 432.7L639.3 432.9L639.4 434.2L639.6 434.1L639.8 434.6L640.0 435.5L640.1 435.3L640.3 436.3L640.5 435.5L640.7 434.4L640.8 433.9L641.0 432.2L641.2 432.1L641.3 432.5L641.5 433.7L641.7 435.1L641.9 435.2L642.0 436.0L642.2 435.4L642.4 435.0L642.6 434.6L642.7 433.7L642.9 433.7L643.2 434.7L643.4 435.4L643.6 435.4L643.8 434.2L643.9 433.9L644.1 432.7L644.3 433.3L644.5 433.4L644.6 433.9L644.8 433.6L645.0 433.1L645.1 434.3L645.3 433.4L645.5 433.8L645.7 433.8L645.8 433.0L646.0 433.6L646.2 433.8L646.4 433.7L646.5 434.1L646.7 434.1L646.9 434.2L647.0 435.1L647.2 435.0L647.4 435.1L647.6 434.7L647.7 433.6L647.9 435.1L648.1 436.2L648.3 438.9L648.4 440.7L648.6 438.8L648.8 436.4L649.0 430.5L649.1 424.1L649.3 420.7L649.5 421.8L649.6 430.0L649.8 442.2L650.0 455.7L650.2 464.2L650.3 461.1L650.5 449.9L650.7 431.2L650.9 411.2L651.0 399.9L651.2 398.6L651.4 407.6L651.5 424.7L651.7 440.7L651.9 452.7L652.1 457.9L652.2 455.2L652.4 447.8L652.6 438.8L652.8 429.7L652.9 422.9L653.1 420.8L653.3 422.5L653.4 426.4L653.6 432.1L653.8 437.6L654.0 439.8L654.1 440.8L654.3 438.5L654.5 433.8L654.7 430.3L654.8 426.6L655.0 425.5L655.2 427.5L655.3 429.2L655.5 432.4L655.7 435.4L655.9 435.4L656.0 435.2L656.2 434.0L656.4 432.3L656.6 431.5L656.7 431.4L656.9 432.4L657.2 433.5L657.4 434.4L657.6 434.2L657.8 434.5L657.9 435.1L658.1 434.4L658.3 433.6L658.5 432.4L658.6 431.5L658.8 431.1L659.0 431.1L659.1 431.4L659.3 432.2L659.5 432.4L659.7 432.8L659.8 433.6L660.0 433.7L660.2 434.3L660.4 434.6L660.5 435.2L660.7 434.7L660.9 434.4L661.1 434.2L661.2 433.4L661.4 433.3L661.6 433.6L661.7 433.7L661.9 434.7L662.1 436.3L662.3 437.1L662.4 436.2L662.6 436.3L662.8 434.8L663.0 433.0L663.1 434.1L663.3 432.2L663.5 431.5L663.6 431.8L663.8 430.3L664.0 430.8L664.2 432.2L664.3 432.4L664.5 433.9L664.7 434.9L664.9 435.2L665.0 434.3L665.2 434.3L665.4 433.6L665.5 433.3L665.7 434.5L665.9 434.3L666.1 434.5L666.2 434.8L666.4 435.6L666.6 435.9L666.8 435.5L666.9 433.8L667.1 432.4L667.3 431.1L667.4 431.0L667.6 432.1L667.8 433.4L668.0 434.4L668.1 435.8L668.3 435.9L668.5 434.3L668.7 434.1L668.8 432.4L669.0 432.4L669.2 434.0L669.3 434.5L669.5 435.3L669.7 434.5L669.9 432.6L670.0 432.6L670.2 432.4L670.4 432.9L670.6 434.1L670.7 434.7L670.9 435.4L671.2 437.6L671.4 438.2L671.6 437.1L671.8 434.5L671.9 428.6L672.1 422.8L672.3 419.8L672.5 421.4L672.6 430.8L672.8 444.0L673.0 458.1L673.2 464.9L673.3 462.8L673.5 450.1L673.7 429.4L673.8 411.7L674.0 399.5L674.2 398.3L674.4 408.1L674.5 423.5L674.7 439.9L674.9 451.7L675.1 456.7L675.2 453.8L675.4 447.8L675.6 438.5L675.7 430.4L675.9 425.2L676.1 422.6L676.3 423.2L676.4 427.5L676.6 433.4L676.8 438.5L677.0 443.7L677.1 444.3L677.3 442.8L677.5 438.7L677.6 433.4L677.8 430.2L678.0 428.6L678.2 429.8L678.3 431.3L678.5 433.8L678.7 436.0L678.9 436.5L679.0 437.0L679.2 435.9L679.4 434.4L679.5 433.9L679.7 432.7L679.9 433.0L680.1 433.3L680.2 433.4L680.4 434.6L680.6 433.8L680.8 433.3L680.9 432.4L681.1 433.9L681.3 434.4L681.4 434.1L681.6 433.7L681.8 432.0L682.0 433.1L682.1 433.4L682.3 434.7L682.5 435.7L682.7 435.1L682.8 434.9L683.0 433.9L683.2 432.6L683.3 432.8L683.5 432.0L683.7 433.3L683.9 433.7L684.0 433.9L684.2 434.6L684.4 433.7L684.6 433.2L684.7 432.3L684.9 433.1L685.1 433.2L685.2 434.7L685.6 433.7L685.8 434.0L685.9 433.0L686.1 433.4L686.3 433.0L686.5 432.6L686.6 432.6L686.8 433.0L687.0 434.6L687.2 435.2L687.3 435.2L687.5 435.0L687.7 434.2L687.8 433.5L688.0 433.3L688.2 433.0L688.4 432.7L688.5 433.0L688.7 433.2L688.9 433.1L689.1 434.4L689.2 433.8L689.4 434.5L689.6 434.3L689.7 433.4L689.9 433.4L690.1 432.7L690.3 433.7L690.4 433.1L690.6 433.6L690.8 433.6L691.0 433.0L691.1 433.1L691.3 432.7L691.5 432.6L691.6 433.5L691.8 434.3L692.0 434.7L692.2 433.8L692.3 432.8L692.5 432.6L692.7 432.1L692.9 433.1L693.0 433.3L693.2 433.0L693.4 434.2L693.5 433.4L693.7 433.2L693.9 433.8L694.1 434.5L694.2 436.3L694.4 437.1L694.6 437.9L694.8 436.6L694.9 433.0L695.1 429.2L695.3 424.5L695.4 421.2L695.6 424.0L695.8 431.6L696.0 443.4L696.1 455.8L696.3 463.2L696.5 461.8L696.7 450.3L696.8 432.2L697.0 413.5L697.2 401.0L697.3 399.1L697.5 410.1L697.7 426.3L697.9 442.6L698.0 454.2L698.2 457.8L698.4 454.1L698.6 446.8L698.7 438.4L698.9 429.1L699.1 424.1L699.3 422.1L699.6 426.8L699.8 433.2L699.9 439.0L700.1 443.2L700.3 444.4L700.5 440.6L700.6 436.6L700.8 431.0L701.0 427.0L701.2 427.6L701.3 428.5L701.5 431.6L701.7 434.9L701.8 436.7L702.0 436.8L702.2 435.5L702.4 434.7L702.5 432.6L702.7 432.0L702.9 433.2L703.1 433.0L703.2 434.0L703.4 433.8L703.6 433.6L703.7 433.9L703.9 432.8L704.1 433.9L704.3 433.8L704.4 433.1L704.6 433.3L704.8 432.4L705.0 432.2L705.1 432.4L705.3 432.5L705.5 432.5L705.6 431.9L705.8 432.3L706.0 432.1L706.2 432.1L706.3 433.1L706.5 433.1L706.7 433.5L706.9 434.5L707.0 435.3L707.2 434.6L707.4 435.7L707.5 434.2L707.7 433.6L707.9 433.8L708.1 432.9L708.2 433.5L708.4 433.5L708.6 433.8L708.8 433.9L708.9 433.6L709.1 432.8L709.3 432.0L709.4 431.7L709.6 432.4L709.8 433.9L710.0 434.2L710.1 434.0L710.3 434.1L710.5 432.7L710.7 432.4L710.8 432.8L711.0 432.0L711.2 432.3L711.4 433.9L711.5 434.2L711.7 435.0L711.9 434.9L712.0 434.4L712.2 434.4L712.4 434.7L712.6 435.0L712.7 434.5L712.9 433.7L713.1 432.8L713.3 432.7L713.4 432.6L713.6 433.0L713.8 433.4L713.9 432.7L714.1 434.1L714.3 434.3L714.5 434.2L714.6 434.4L714.8 433.7L715.0 433.4L715.2 433.1L715.3 433.8L715.5 434.0L715.7 434.2L715.8 435.2L716.0 435.0L716.2 435.4L716.4 435.6L716.5 436.3L716.7 437.7L716.9 436.2L717.1 434.2L717.2 428.6L717.4 421.8L717.6 418.7L717.7 419.8L717.9 428.9L718.1 442.3L718.3 454.0L718.4 463.0L718.6 460.2L718.8 448.1L719.0 432.2L719.1 414.0L719.3 403.4L719.5 402.2L719.6 410.4L719.8 425.0L720.0 440.0L720.2 451.9L720.3 456.0L720.5 453.7L720.7 446.4L720.9 437.9L721.0 428.8L721.2 422.8L721.4 421.3L721.5 421.5L721.7 426.2L721.9 432.9L722.1 438.2L722.2 443.2L722.4 444.7L722.6 440.9L722.8 437.2L722.9 431.8L723.1 428.5L723.3 427.3L723.5 428.5L723.6 432.2L723.8 435.2L724.0 438.4L724.1 438.4L724.3 436.8L724.5 434.3L724.7 432.5L724.8 431.9L725.0 431.7L725.2 432.7L725.4 433.2L725.5 433.2L725.7 433.2L725.9 433.4L726.0 434.4L726.2 435.1L726.4 435.2L726.6 436.3L726.7 435.6L726.9 434.9L727.1 435.4L727.3 434.7L727.6 433.0L727.8 432.8L727.9 431.5L728.1 431.8L728.3 433.1L728.5 431.5L728.6 432.7L728.8 433.6L729.0 433.6L729.2 435.0L729.3 434.5" stroke="#b9d8ec" stroke-width="1.1" fill="none" stroke-linejoin="round"/>
<path d="M375.5 386.5v6M375.5 481.5v-6M392.5 386.5v3.5M392.5 481.5v-3.5M410.5 386.5v3.5M410.5 481.5v-3.5M427.5 386.5v3.5M427.5 481.5v-3.5M444.5 386.5v3.5M444.5 481.5v-3.5M461.5 386.5v3.5M461.5 481.5v-3.5M479.5 386.5v3.5M479.5 481.5v-3.5M496.5 386.5v3.5M496.5 481.5v-3.5M513.5 386.5v3.5M513.5 481.5v-3.5M531.5 386.5v3.5M531.5 481.5v-3.5M548.5 386.5v6M548.5 481.5v-6M565.5 386.5v3.5M565.5 481.5v-3.5M582.5 386.5v3.5M582.5 481.5v-3.5M600.5 386.5v3.5M600.5 481.5v-3.5M617.5 386.5v3.5M617.5 481.5v-3.5M634.5 386.5v3.5M634.5 481.5v-3.5M652.5 386.5v3.5M652.5 481.5v-3.5M669.5 386.5v3.5M669.5 481.5v-3.5M686.5 386.5v3.5M686.5 481.5v-3.5M703.5 386.5v3.5M703.5 481.5v-3.5M721.5 386.5v6M721.5 481.5v-6M375.5 398.5h6M729.5 398.5h-6M375.5 433.5h6M729.5 433.5h-6M375.5 469.5h6M729.5 469.5h-6" stroke="#1a1a1a" stroke-width="1" fill="none"/><rect x="375.5" y="386.5" width="354.0" height="95.0" fill="none" stroke="#1a1a1a" stroke-width="1.2"/>
<text x="370.3" y="402.2" font-size="14" text-anchor="end" fill="#333" textLength="17.2" lengthAdjust="spacingAndGlyphs">0.5</text>
<text x="370.3" y="438.0" font-size="14" text-anchor="end" fill="#333" textLength="6.9" lengthAdjust="spacingAndGlyphs">0</text>
<text x="370.3" y="473.8" font-size="14" text-anchor="end" fill="#333" textLength="21.3" lengthAdjust="spacingAndGlyphs">-0.5</text>
<text transform="translate(328.4 434.3) rotate(-90)" font-size="15.5" text-anchor="middle" fill="#333" textLength="47.4" lengthAdjust="spacingAndGlyphs">Level 3</text>
<rect x="375.5" y="502.5" width="354.0" height="95.0" fill="#fff"/>
<path d="M548.5 502.5 V597.5" stroke="#dedede" stroke-width="1" fill="none"/><path d="M721.5 502.5 V597.5" stroke="#dedede" stroke-width="1" fill="none"/><path d="M375.5 510.5 H729.5" stroke="#dedede" stroke-width="1" fill="none"/><path d="M375.5 586.5 H729.5" stroke="#dedede" stroke-width="1" fill="none"/>
<path d="M375.5 548.4H729.5" stroke="#cfe3f0" stroke-width="1" fill="none"/>
<path d="M375.5 549.4L375.8 550.1L376.0 550.2L376.2 550.3L376.4 550.4L376.5 550.7L376.7 551.2L376.9 551.9L377.1 552.8L377.2 553.7L377.4 554.4L377.6 554.6L377.7 554.4L377.9 553.9L378.1 553.2L378.3 552.6L378.4 552.1L378.6 551.7L378.8 551.2L379.0 550.4L379.1 549.5L379.3 548.4L379.5 547.2L379.6 546.3L379.8 545.8L380.0 545.8L380.2 546.1L380.3 546.8L380.5 547.6L380.7 548.1L380.9 548.5L381.0 548.7L381.2 548.8L381.4 549.0L381.5 549.3L381.7 549.7L381.9 550.1L382.1 550.5L382.2 550.7L382.4 550.8L382.6 550.7L382.8 550.5L382.9 550.1L383.1 549.7L383.3 549.4L383.5 549.2L383.6 549.2L383.8 549.4L384.0 549.6L384.1 549.8L384.3 549.7L384.5 549.6L384.7 549.3L384.8 549.2L385.0 549.3L385.2 549.8L385.4 550.6L385.5 551.8L385.7 553.1L385.9 554.2L386.0 554.9L386.2 555.1L386.4 554.6L386.6 553.6L386.7 552.4L386.9 551.0L387.1 549.8L387.3 548.8L387.4 548.2L387.6 548.0L387.8 548.3L387.9 548.9L388.1 549.5L388.3 550.2L388.5 550.7L388.6 550.9L388.8 550.8L389.0 550.4L389.2 549.6L389.3 548.6L389.5 547.5L389.8 545.8L390.0 545.4L390.2 545.3L390.4 545.8L390.5 546.8L390.7 548.2L390.9 549.6L391.1 551.0L391.2 552.3L391.4 553.0L391.6 553.1L391.7 552.4L391.9 550.8L392.1 548.6L392.3 546.0L392.4 543.5L392.6 541.3L392.8 539.7L393.0 538.9L393.1 539.2L393.3 540.7L393.5 543.2L393.6 546.9L393.8 551.4L394.0 556.5L394.2 561.8L394.3 566.6L394.5 570.2L394.7 571.8L394.9 571.1L395.0 568.0L395.2 562.6L395.4 555.1L395.6 546.5L395.7 537.4L395.9 528.8L396.1 521.7L396.2 516.8L396.4 514.9L396.6 516.2L396.8 520.7L396.9 528.2L397.1 537.9L397.3 548.7L397.5 559.4L397.6 569.1L397.8 576.7L398.0 581.4L398.1 582.8L398.3 580.9L398.5 576.0L398.7 568.8L398.8 560.2L399.0 551.3L399.2 542.9L399.4 536.2L399.5 531.6L399.7 529.6L399.9 529.9L400.0 532.2L400.2 535.9L400.4 540.4L400.6 545.0L400.7 549.3L400.9 552.9L401.1 555.6L401.3 557.2L401.4 557.7L401.6 557.2L401.8 555.7L401.9 553.6L402.1 551.0L402.3 548.5L402.5 546.3L402.6 544.6L402.8 543.6L403.0 543.2L403.2 543.2L403.3 543.3L403.5 543.6L403.8 544.8L404.0 545.9L404.2 547.4L404.4 549.2L404.5 551.3L404.7 553.3L404.9 555.0L405.1 556.2L405.2 556.6L405.4 556.1L405.6 554.9L405.7 553.0L405.9 550.9L406.1 548.7L406.3 546.8L406.4 545.1L406.6 543.6L406.8 542.3L407.0 541.3L407.1 540.6L407.3 540.5L407.5 541.0L407.7 542.2L407.8 544.0L408.0 546.2L408.2 548.8L408.3 551.5L408.5 553.9L408.7 555.6L408.9 556.7L409.0 557.2L409.2 557.2L409.4 557.0L409.6 556.4L409.7 555.4L409.9 554.3L410.1 553.0L410.2 551.7L410.4 550.6L410.6 549.4L410.8 548.2L410.9 547.0L411.1 546.1L411.3 545.5L411.5 545.6L411.6 546.2L411.8 547.1L412.0 548.1L412.1 549.2L412.3 550.1L412.5 550.8L412.7 551.3L412.8 551.5L413.0 551.6L413.2 551.8L413.4 552.1L413.5 552.2L413.7 552.1L413.9 551.4L414.0 550.3L414.2 549.1L414.4 547.8L414.6 546.7L414.7 545.9L414.9 545.4L415.1 545.3L415.3 545.7L415.4 546.4L415.6 547.3L415.8 548.0L415.9 548.6L416.1 548.9L416.3 548.9L416.5 548.6L416.6 548.1L416.8 547.6L417.0 547.0L417.2 546.5L417.3 546.0L417.5 545.9L417.8 546.7L418.0 547.9L418.2 549.8L418.4 552.5L418.5 555.8L418.7 559.4L418.9 562.8L419.1 565.4L419.2 566.5L419.4 565.6L419.6 562.4L419.8 557.0L419.9 549.8L420.1 541.5L420.3 532.8L420.4 524.7L420.6 518.1L420.8 513.9L421.0 512.7L421.1 514.8L421.3 519.9L421.5 527.5L421.7 537.0L421.8 547.4L422.0 557.6L422.2 566.7L422.3 573.7L422.5 577.9L422.7 579.1L422.9 577.2L423.0 572.9L423.2 566.7L423.4 559.3L423.6 551.6L423.7 544.4L423.9 538.6L424.1 534.6L424.2 532.7L424.4 533.0L424.6 535.1L424.8 538.5L424.9 542.8L425.1 547.3L425.3 551.7L425.5 555.2L425.6 557.6L425.8 558.7L426.0 558.7L426.1 557.6L426.3 555.7L426.5 553.1L426.7 550.0L426.8 546.8L427.0 543.8L427.2 541.2L427.4 539.2L427.5 537.9L427.7 537.4L427.9 537.7L428.0 538.8L428.2 540.6L428.4 542.9L428.6 545.5L428.7 548.0L428.9 550.5L429.1 552.7L429.3 554.5L429.4 555.9L429.6 556.7L429.8 556.9L429.9 556.4L430.1 555.2L430.3 553.4L430.5 551.1L430.6 548.3L430.8 545.4L431.0 542.5L431.2 540.2L431.3 538.7L431.5 538.1L431.8 539.2L432.0 540.6L432.2 542.4L432.4 544.3L432.5 546.4L432.7 548.6L432.9 550.7L433.1 552.5L433.2 553.9L433.4 555.0L433.6 555.6L433.8 555.7L433.9 555.3L434.1 554.4L434.3 553.1L434.4 551.6L434.6 549.9L434.8 548.1L435.0 546.5L435.1 545.3L435.3 544.6L435.5 544.5L435.7 544.9L435.8 545.7L436.0 546.6L436.2 547.3L436.3 547.9L436.5 548.5L436.7 549.1L436.9 549.8L437.0 550.6L437.2 551.2L437.4 551.8L437.6 552.0L437.7 551.9L437.9 551.4L438.1 550.8L438.2 550.3L438.4 549.9L438.6 549.6L438.8 549.4L438.9 549.1L439.1 548.8L439.3 548.5L439.5 548.3L439.6 548.3L439.8 548.4L440.0 548.6L440.1 549.0L440.3 549.6L440.5 550.1L440.7 550.5L440.8 550.9L441.0 551.2L441.2 551.4L441.4 551.5L441.5 551.2L441.7 550.4L441.9 549.1L442.0 547.4L442.2 545.7L442.4 544.2L442.6 543.5L442.7 543.8L442.9 545.3L443.1 548.1L443.3 551.9L443.4 556.2L443.6 560.6L443.8 564.4L443.9 567.2L444.1 568.6L444.3 568.1L444.5 565.6L444.6 561.3L444.8 555.2L445.0 547.7L445.2 539.4L445.3 531.0L445.5 523.3L445.7 517.3L445.9 513.9L446.0 513.7L446.2 517.1L446.4 523.8L446.5 533.2L446.7 544.4L446.9 555.8L447.1 566.0L447.2 573.7L447.4 577.9L447.6 578.3L447.8 575.3L447.9 569.7L448.1 562.4L448.3 554.5L448.4 546.9L448.6 540.5L448.8 535.7L449.0 532.5L449.1 531.2L449.3 531.5L449.5 533.3L449.7 536.3L449.8 540.1L450.0 544.3L450.2 548.5L450.3 552.1L450.5 554.8L450.7 556.1L450.9 556.2L451.0 555.1L451.2 553.2L451.4 550.8L451.6 548.6L451.7 546.5L451.9 544.8L452.1 543.4L452.2 542.3L452.4 541.6L452.6 541.2L452.8 541.4L452.9 542.3L453.1 543.9L453.3 546.1L453.5 548.8L453.6 551.7L453.8 554.6L454.0 557.1L454.1 559.1L454.3 560.4L454.5 561.0L454.7 561.0L454.8 560.5L455.0 559.5L455.2 557.8L455.4 555.6L455.5 553.0L455.7 550.1L455.9 547.3L456.0 544.7L456.2 542.5L456.4 540.7L456.6 539.3L456.7 538.7L456.9 538.9L457.1 539.8L457.3 541.3L457.4 543.3L457.6 545.8L457.8 548.4L458.0 551.0L458.1 553.3L458.3 555.1L458.5 556.0L458.6 556.2L458.8 555.9L459.0 555.0L459.2 553.6L459.3 551.8L459.5 549.9L459.7 548.0L459.9 546.4L460.2 544.5L460.4 544.3L460.5 544.6L460.7 545.3L460.9 546.1L461.1 547.0L461.2 547.7L461.4 548.4L461.6 549.0L461.8 549.8L461.9 550.7L462.1 551.6L462.3 552.4L462.4 552.9L462.6 552.8L462.8 552.3L463.0 551.4L463.1 550.4L463.3 549.2L463.5 548.2L463.7 547.5L463.8 547.3L464.0 547.7L464.2 548.4L464.3 549.0L464.5 549.2L464.7 548.7L464.9 547.4L465.0 545.4L465.2 543.1L465.4 540.6L465.6 538.5L465.7 537.0L465.9 536.6L466.1 537.4L466.2 539.4L466.4 542.5L466.6 546.3L466.8 550.8L466.9 555.7L467.1 560.6L467.3 565.0L467.5 568.2L467.6 569.6L467.8 568.9L468.0 566.0L468.1 561.1L468.3 554.4L468.5 546.6L468.7 538.4L468.8 530.5L469.0 523.9L469.2 519.5L469.4 517.8L469.5 519.1L469.7 523.5L469.9 530.6L470.0 539.7L470.2 549.7L470.4 559.8L470.6 568.7L470.7 575.4L470.9 579.3L471.1 580.2L471.3 578.2L471.4 573.7L471.6 567.3L471.8 559.9L472.0 552.4L472.1 545.7L472.3 540.2L472.5 536.5L472.6 534.8L472.8 534.8L473.0 536.3L473.2 539.1L473.3 542.7L473.5 546.6L473.7 550.1L473.9 553.2L474.2 556.9L474.4 557.1L474.5 556.2L474.7 554.4L474.9 551.9L475.1 549.0L475.2 546.1L475.4 543.3L475.6 541.1L475.8 539.4L475.9 538.7L476.1 538.8L476.3 539.7L476.4 541.1L476.6 542.9L476.8 545.0L477.0 547.2L477.1 549.5L477.3 551.8L477.5 553.9L477.7 555.7L477.8 556.9L478.0 557.2L478.2 556.8L478.3 555.7L478.5 553.9L478.7 551.7L478.9 549.3L479.0 547.1L479.2 545.1L479.4 543.4L479.6 542.0L479.7 541.0L479.9 540.3L480.1 540.2L480.2 540.6L480.4 541.8L480.6 543.6L480.8 545.8L480.9 548.3L481.1 551.1L481.3 553.6L481.5 555.8L481.6 557.4L481.8 558.3L482.0 558.2L482.1 557.3L482.3 555.7L482.5 553.7L482.7 551.5L482.8 549.4L483.0 547.6L483.2 546.1L483.4 544.9L483.5 544.0L483.7 543.3L483.9 543.0L484.1 542.9L484.2 543.0L484.4 543.3L484.6 543.9L484.7 544.8L484.9 545.9L485.1 547.1L485.3 548.4L485.4 549.5L485.6 550.5L485.8 551.5L486.0 552.3L486.1 552.6L486.3 552.6L486.5 552.1L486.6 551.5L486.8 550.8L487.0 550.3L487.2 550.0L487.3 549.8L487.5 549.6L487.7 549.5L487.9 549.2L488.2 547.6L488.4 546.5L488.5 545.2L488.7 544.0L488.9 542.8L489.1 542.1L489.2 542.1L489.4 542.7L489.6 544.0L489.8 546.0L489.9 548.7L490.1 551.9L490.3 555.6L490.4 559.3L490.6 562.7L490.8 565.2L491.0 566.4L491.1 566.0L491.3 563.6L491.5 559.2L491.7 553.0L491.8 545.4L492.0 537.3L492.2 529.6L492.3 523.0L492.5 518.5L492.7 516.7L492.9 517.9L493.0 522.0L493.2 528.6L493.4 537.2L493.6 546.9L493.7 556.8L493.9 565.9L494.1 573.1L494.2 577.6L494.4 579.0L494.6 577.1L494.8 572.7L494.9 566.3L495.1 558.8L495.3 551.0L495.5 544.1L495.6 538.7L495.8 535.2L496.0 533.5L496.2 533.6L496.3 535.2L496.5 538.0L496.7 541.6L496.8 545.6L497.0 549.5L497.2 552.9L497.4 555.3L497.5 556.6L497.7 556.8L497.9 556.1L498.1 554.4L498.2 552.0L498.4 549.2L498.6 546.2L498.7 543.3L498.9 540.8L499.1 538.9L499.3 537.9L499.4 537.8L499.6 538.9L499.8 540.9L500.0 543.7L500.1 547.1L500.3 550.6L500.5 553.7L500.6 556.5L500.8 558.6L501.0 560.0L501.2 560.6L501.3 560.5L501.5 559.5L501.7 558.1L501.9 556.2L502.0 554.2L502.2 552.1L502.5 548.0L502.7 546.0L502.9 544.3L503.1 542.7L503.2 541.5L503.4 540.7L503.6 540.1L503.8 540.0L503.9 540.4L504.1 541.2L504.3 542.6L504.4 544.4L504.6 546.6L504.8 548.8L505.0 551.1L505.1 553.1L505.3 554.8L505.5 555.8L505.7 556.2L505.8 555.8L506.0 554.8L506.2 553.3L506.3 551.7L506.5 550.0L506.7 548.4L506.9 547.1L507.0 546.2L507.2 545.8L507.4 545.5L507.6 545.4L507.7 545.7L507.9 546.2L508.1 546.6L508.2 547.0L508.4 547.6L508.6 548.4L508.8 549.5L508.9 550.6L509.1 551.5L509.3 552.2L509.5 552.6L509.6 552.7L509.8 552.8L510.0 552.6L510.2 552.1L510.3 551.4L510.5 550.7L510.7 549.9L510.8 548.8L511.0 547.2L511.2 545.1L511.4 542.9L511.5 540.8L511.7 539.4L511.9 538.6L512.1 538.8L512.2 540.0L512.4 542.4L512.6 545.7L512.7 549.8L512.9 554.0L513.1 558.3L513.3 562.2L513.4 565.4L513.6 567.5L513.8 568.2L514.0 567.1L514.1 564.0L514.3 559.0L514.5 552.3L514.6 544.3L514.8 535.6L515.0 527.1L515.2 519.8L515.3 514.9L515.5 513.0L515.7 514.4L515.9 519.3L516.0 527.0L516.2 536.8L516.5 558.0L516.7 566.9L516.9 573.4L517.1 577.2L517.2 578.0L517.4 576.1L517.6 572.0L517.8 566.2L517.9 559.5L518.1 552.7L518.3 546.5L518.4 541.4L518.6 537.8L518.8 536.1L519.0 536.1L519.1 538.0L519.3 541.3L519.5 545.4L519.7 549.9L519.8 554.1L520.0 557.5L520.2 559.5L520.3 560.0L520.5 559.1L520.7 556.9L520.9 553.9L521.0 550.4L521.2 546.8L521.4 543.7L521.6 541.2L521.7 539.4L521.9 538.6L522.1 538.7L522.3 539.3L522.4 540.3L522.6 541.5L522.8 542.9L522.9 544.5L523.1 546.4L523.3 548.6L523.5 550.9L523.6 553.3L523.8 555.2L524.0 556.7L524.2 557.3L524.3 556.6L524.5 554.9L524.7 552.5L524.8 549.9L525.0 547.6L525.2 545.7L525.4 544.2L525.5 543.4L525.7 543.0L525.9 543.0L526.1 543.2L526.2 543.3L526.4 543.5L526.6 543.8L526.7 544.3L526.9 545.2L527.1 546.3L527.3 547.7L527.4 549.3L527.6 550.9L527.8 552.4L528.0 553.5L528.1 554.3L528.3 554.5L528.5 554.2L528.6 553.4L528.8 552.2L529.0 550.8L529.2 549.5L529.3 548.4L529.5 547.5L529.7 546.8L529.9 546.3L530.0 546.0L530.2 545.9L530.5 546.5L530.7 547.2L530.9 548.3L531.1 549.7L531.2 551.5L531.4 553.1L531.6 554.5L531.8 555.4L531.9 555.6L532.1 555.0L532.3 553.8L532.4 552.0L532.6 550.1L532.8 548.2L533.0 546.5L533.1 545.0L533.3 543.7L533.5 542.7L533.7 541.8L533.8 541.2L534.0 540.7L534.2 540.7L534.4 541.3L534.5 542.5L534.7 544.5L534.9 547.3L535.0 550.7L535.2 554.6L535.4 558.8L535.6 562.7L535.7 565.7L535.9 567.3L536.1 567.1L536.3 564.8L536.4 560.3L536.6 553.6L536.8 545.4L536.9 536.4L537.1 527.9L537.3 520.9L537.5 516.3L537.6 514.5L537.8 516.0L538.0 520.5L538.2 527.8L538.3 537.3L538.5 547.8L538.7 558.1L538.8 567.4L539.0 574.8L539.2 579.4L539.4 580.9L539.5 579.0L539.7 574.2L539.9 567.1L540.1 558.8L540.2 550.4L540.4 542.9L540.6 537.0L540.7 533.0L540.9 531.3L541.1 531.8L541.3 533.9L541.4 537.2L541.6 541.2L541.8 545.2L542.0 548.8L542.1 551.7L542.3 553.7L542.5 554.6L542.6 554.8L542.8 554.2L543.0 553.2L543.2 551.8L543.3 550.1L543.5 548.4L543.7 546.7L543.9 545.1L544.0 543.6L544.2 542.3L544.5 541.5L544.7 542.2L544.9 543.8L545.1 546.0L545.2 548.8L545.4 551.8L545.6 554.6L545.8 556.8L545.9 558.2L546.1 558.5L546.3 557.9L546.5 556.8L546.6 555.4L546.8 553.9L547.0 552.3L547.1 550.8L547.3 549.2L547.5 547.6L547.7 546.0L547.8 544.6L548.0 543.3L548.2 542.3L548.4 541.8L548.5 542.1L548.7 542.9L548.9 544.5L549.0 546.5L549.2 548.6L549.4 550.7L549.6 552.6L549.7 554.3L549.9 555.7L550.1 556.8L550.3 557.3L550.4 557.2L550.6 556.5L550.8 555.4L550.9 553.8L551.1 552.0L551.3 550.2L551.5 548.7L551.6 547.5L551.8 547.0L552.0 546.9L552.2 547.2L552.3 547.7L552.5 548.4L552.7 549.3L552.8 550.2L553.0 551.2L553.2 552.0L553.4 552.5L553.5 552.7L553.7 552.5L553.9 551.9L554.1 551.1L554.2 549.9L554.4 548.6L554.6 547.3L554.7 546.1L554.9 545.3L555.1 545.2L555.3 546.0L555.4 547.9L555.6 550.8L555.8 554.7L556.0 559.0L556.1 563.2L556.3 566.4L556.5 568.0L556.6 567.6L556.8 564.8L557.0 559.9L557.2 553.1L557.3 545.1L557.5 536.9L557.7 529.1L557.9 522.8L558.0 518.7L558.2 517.3L558.5 523.4L558.7 530.5L558.9 539.7L559.1 549.9L559.2 560.1L559.4 569.1L559.6 576.0L559.8 580.1L559.9 581.0L560.1 578.9L560.3 574.1L560.5 567.3L560.6 559.6L560.8 551.7L561.0 544.6L561.1 539.0L561.3 535.3L561.5 533.7L561.7 534.1L561.8 536.4L562.0 539.8L562.2 544.0L562.4 548.5L562.5 553.0L562.7 556.7L562.9 559.4L563.0 560.8L563.2 560.9L563.4 559.9L563.6 557.7L563.7 554.6L563.9 550.9L564.1 547.1L564.3 543.7L564.4 540.9L564.6 539.0L564.8 538.0L564.9 537.8L565.1 538.3L565.3 539.7L565.5 541.5L565.6 543.8L565.8 546.4L566.0 549.3L566.2 552.4L566.3 555.4L566.5 557.9L566.7 559.8L566.8 560.7L567.0 560.5L567.2 559.3L567.4 557.2L567.5 554.4L567.7 551.3L567.9 548.1L568.1 545.2L568.2 542.8L568.4 540.9L568.6 539.6L568.7 539.1L568.9 539.1L569.1 539.7L569.3 540.7L569.4 542.1L569.6 544.0L569.8 546.2L570.0 548.6L570.1 551.0L570.3 553.1L570.5 554.7L570.6 555.5L570.8 555.7L571.0 555.3L571.2 554.6L571.3 553.7L571.5 552.9L571.7 552.4L571.9 551.8L572.0 551.1L572.2 550.0L572.4 548.7L572.6 547.1L572.9 544.2L573.1 543.3L573.2 543.1L573.4 543.4L573.6 544.3L573.8 545.4L573.9 546.3L574.1 547.0L574.3 547.4L574.5 547.7L574.6 547.9L574.8 548.1L575.0 548.4L575.1 549.0L575.3 549.7L575.5 550.6L575.7 551.5L575.8 552.0L576.0 552.4L576.2 552.5L576.4 552.5L576.5 552.3L576.7 551.9L576.9 551.2L577.0 550.2L577.2 548.9L577.4 547.5L577.6 546.2L577.7 545.0L577.9 544.2L578.1 543.9L578.3 544.4L578.4 545.6L578.6 547.6L578.8 550.3L578.9 553.5L579.1 557.2L579.3 560.7L579.5 563.9L579.6 566.3L579.8 567.5L580.0 567.0L580.2 564.7L580.3 560.6L580.5 554.8L580.7 547.8L580.8 540.3L581.0 533.1L581.2 527.0L581.4 522.7L581.5 520.8L581.7 521.9L581.9 525.9L582.1 532.6L582.2 541.2L582.4 550.8L582.6 560.2L582.7 568.4L582.9 574.3L583.1 577.4L583.3 577.7L583.4 575.3L583.6 570.5L583.8 564.0L584.0 556.6L584.1 549.1L584.3 542.4L584.5 537.1L584.7 533.4L584.8 531.7L585.0 532.1L585.2 534.3L585.3 538.0L585.5 542.6L585.7 547.4L585.9 552.0L586.0 555.9L586.2 558.7L586.4 560.3L586.6 560.4L586.9 556.9L587.1 554.0L587.2 550.9L587.4 547.9L587.6 545.4L587.8 543.5L587.9 542.3L588.1 541.7L588.3 541.9L588.5 542.7L588.6 544.0L588.8 546.0L589.0 548.2L589.1 550.5L589.3 552.5L589.5 553.9L589.7 554.7L589.8 554.8L590.0 554.3L590.2 553.5L590.4 552.5L590.5 551.6L590.7 550.7L590.9 549.7L591.0 548.7L591.2 547.5L591.4 546.1L591.6 544.6L591.7 543.1L591.9 541.6L592.1 540.4L592.3 539.7L592.4 539.5L592.6 539.9L592.8 540.9L592.9 542.4L593.1 544.4L593.3 546.5L593.5 548.7L593.6 550.7L593.8 552.3L594.0 553.6L594.2 554.5L594.3 555.1L594.5 555.1L594.7 554.6L594.8 553.6L595.0 552.2L595.2 550.5L595.4 548.4L595.5 546.3L595.7 544.3L595.9 542.7L596.1 541.6L596.2 541.1L596.4 541.2L596.6 541.9L596.8 543.0L596.9 544.4L597.1 545.7L597.3 547.1L597.4 548.4L597.6 549.5L597.8 550.6L598.0 551.7L598.1 552.5L598.3 553.1L598.5 553.4L598.7 553.5L598.8 553.4L599.0 553.0L599.2 552.4L599.3 551.7L599.5 550.9L599.7 550.1L599.9 549.3L600.0 548.6L600.2 547.9L600.4 547.4L600.6 547.0L600.9 546.0L601.1 545.2L601.2 544.2L601.4 543.2L601.6 542.5L601.8 542.3L601.9 542.8L602.1 544.4L602.3 547.2L602.5 550.9L602.6 555.1L602.8 559.1L603.0 562.4L603.1 564.5L603.3 565.2L603.5 564.2L603.7 561.4L603.8 556.9L604.0 550.8L604.2 543.7L604.4 536.0L604.5 528.4L604.7 521.6L604.9 516.7L605.0 514.4L605.2 515.2L605.4 519.3L605.6 526.4L605.7 535.6L605.9 546.0L606.1 556.5L606.3 565.8L606.4 573.1L606.6 577.6L606.8 579.1L606.9 577.7L607.1 573.7L607.3 567.7L607.5 560.3L607.6 552.6L607.8 545.5L608.0 539.5L608.2 535.3L608.3 533.1L608.5 533.2L608.7 535.3L608.8 539.0L609.0 543.7L609.2 548.4L609.4 552.6L609.5 555.8L609.7 557.7L609.9 558.3L610.1 557.6L610.2 555.9L610.4 553.6L610.6 550.9L610.8 548.3L610.9 545.9L611.1 543.8L611.3 542.2L611.4 541.1L611.6 540.8L611.8 541.2L612.0 542.1L612.1 543.5L612.3 545.1L612.5 546.9L612.7 548.8L612.8 550.7L613.0 552.4L613.2 553.8L613.3 554.8L613.5 555.6L613.7 556.0L613.9 556.0L614.0 555.4L614.2 554.2L614.4 552.5L614.6 550.5L614.9 546.0L615.1 543.7L615.2 541.8L615.4 540.4L615.6 539.5L615.8 539.3L615.9 539.7L616.1 540.6L616.3 542.0L616.5 543.9L616.6 546.2L616.8 548.6L617.0 550.9L617.1 552.9L617.3 554.6L617.5 555.9L617.7 556.7L617.8 557.0L618.0 556.7L618.2 555.9L618.4 554.7L618.5 553.2L618.7 551.6L618.9 550.0L619.0 548.5L619.2 547.2L619.4 546.0L619.6 545.0L619.7 544.1L619.9 543.3L620.1 542.9L620.3 542.8L620.4 543.1L620.6 543.8L620.8 544.7L620.9 545.8L621.1 547.1L621.3 548.2L621.5 549.3L621.6 550.2L621.8 551.2L622.0 552.2L622.2 553.0L622.3 553.5L622.5 553.5L622.7 553.1L622.9 552.1L623.0 550.7L623.2 548.9L623.4 546.8L623.5 544.7L623.7 543.1L623.9 542.0L624.1 541.7L624.2 542.4L624.4 544.2L624.6 547.2L624.8 551.1L624.9 555.6L625.1 560.3L625.3 564.6L625.4 567.9L625.6 569.5L625.8 569.1L626.0 566.2L626.1 561.0L626.3 553.8L626.5 545.2L626.7 536.1L626.8 527.4L627.0 520.1L627.2 515.2L627.3 513.2L627.5 514.4L627.7 518.8L627.9 526.2L628.0 535.8L628.2 546.7L628.4 557.6L628.6 567.3L628.7 574.9L628.9 579.5L629.1 580.8L629.2 578.7L629.4 573.6L629.6 566.3L629.8 557.8L629.9 549.2L630.1 541.5L630.3 535.4L630.5 531.3L630.6 529.7L630.8 530.3L631.0 532.9L631.1 536.8L631.3 541.3L631.5 545.8L631.7 549.7L631.8 552.7L632.0 554.5L632.2 555.0L632.4 554.2L632.5 552.3L632.7 549.8L632.9 547.1L633.0 544.4L633.2 542.2L633.4 540.6L633.6 539.7L633.7 539.4L633.9 539.8L634.1 540.5L634.3 541.4L634.4 542.6L634.6 544.1L634.8 545.7L635.0 547.6L635.1 549.7L635.3 551.8L635.5 553.7L635.6 555.2L635.8 556.2L636.0 556.5L636.2 556.3L636.3 555.6L636.5 554.5L636.7 553.0L636.9 551.0L637.0 548.6L637.2 545.9L637.4 542.9L637.5 540.0L637.7 537.7L637.9 536.4L638.1 536.2L638.2 537.3L638.4 539.3L638.6 542.0L638.8 545.1L638.9 548.1L639.1 550.8L639.3 553.1L639.4 554.9L639.6 556.1L639.8 556.9L640.0 557.1L640.1 556.8L640.3 556.1L640.5 555.2L640.7 554.0L640.8 552.8L641.0 551.4L641.2 550.0L641.3 548.7L641.5 547.5L641.7 546.3L641.9 545.3L642.0 544.6L642.2 544.5L642.4 544.9L642.6 545.7L642.7 546.4L642.9 547.1L643.2 548.4L643.4 549.0L643.6 549.5L643.8 550.0L643.9 550.5L644.1 551.1L644.3 551.5L644.5 551.6L644.6 551.1L644.8 550.3L645.0 549.2L645.1 548.1L645.3 547.1L645.5 546.4L645.7 546.1L645.8 546.1L646.0 546.4L646.2 546.9L646.4 547.4L646.5 547.8L646.7 548.0L646.9 547.9L647.0 547.7L647.2 547.3L647.4 547.0L647.6 547.1L647.7 547.5L647.9 548.6L648.1 550.5L648.3 553.0L648.4 556.2L648.6 559.8L648.8 563.2L649.0 565.8L649.1 567.0L649.3 566.4L649.5 563.8L649.6 559.1L649.8 552.6L650.0 544.9L650.2 536.6L650.3 528.7L650.5 521.9L650.7 517.4L650.9 515.7L651.0 517.2L651.2 521.7L651.4 528.8L651.5 537.7L651.7 547.5L651.9 556.9L652.1 564.8L652.2 570.4L652.4 573.3L652.6 573.7L652.8 571.6L652.9 567.7L653.1 562.4L653.3 556.3L653.4 550.2L653.6 544.8L653.8 540.4L654.0 537.5L654.1 536.4L654.3 536.9L654.5 538.8L654.7 541.9L654.8 545.6L655.0 549.5L655.2 552.8L655.3 555.3L655.5 556.7L655.7 557.0L655.9 556.4L656.0 554.9L656.2 552.7L656.4 550.2L656.6 547.6L656.7 545.3L656.9 543.7L657.2 542.5L657.4 542.6L657.6 543.1L657.8 543.9L657.9 544.7L658.1 545.6L658.3 546.5L658.5 547.7L658.6 549.4L658.8 551.7L659.0 554.0L659.1 556.0L659.3 557.2L659.5 557.4L659.7 556.8L659.8 555.4L660.0 553.2L660.2 550.8L660.4 548.7L660.5 546.8L660.7 545.0L660.9 543.4L661.1 541.8L661.2 540.1L661.4 538.6L661.6 537.6L661.7 537.2L661.9 537.5L662.1 538.5L662.3 540.2L662.4 542.6L662.6 545.3L662.8 548.0L663.0 550.3L663.1 552.2L663.3 553.6L663.5 554.4L663.6 554.5L663.8 554.0L664.0 553.3L664.2 552.3L664.3 551.1L664.5 549.9L664.7 548.8L664.9 547.8L665.0 546.8L665.2 545.8L665.4 545.0L665.5 544.4L665.7 544.0L665.9 544.0L666.1 544.4L666.2 545.3L666.4 546.3L666.6 547.5L666.8 548.7L666.9 549.8L667.1 550.6L667.3 550.8L667.4 550.8L667.6 550.5L667.8 550.0L668.0 549.5L668.1 549.1L668.3 548.8L668.5 548.4L668.7 547.9L668.8 547.5L669.0 547.1L669.2 546.8L669.3 546.5L669.5 546.0L669.7 545.3L669.9 544.3L670.0 543.1L670.2 542.3L670.4 541.9L670.6 542.1L670.7 543.3L670.9 545.4L671.2 552.3L671.4 556.5L671.6 561.0L671.8 565.2L671.9 568.6L672.1 570.5L672.3 570.7L672.5 568.5L672.6 563.7L672.8 556.6L673.0 547.8L673.2 538.4L673.3 529.2L673.5 521.5L673.7 516.3L673.8 513.8L674.0 514.5L674.2 518.5L674.4 525.2L674.5 534.1L674.7 544.0L674.9 554.0L675.1 563.1L675.2 570.3L675.4 574.9L675.6 576.5L675.7 575.1L675.9 571.1L676.1 565.1L676.3 558.0L676.4 550.8L676.6 544.1L676.8 538.7L677.0 535.0L677.1 533.4L677.3 533.9L677.5 536.2L677.6 539.7L677.8 543.9L678.0 548.4L678.2 552.4L678.3 555.6L678.5 557.7L678.7 558.3L678.9 557.4L679.0 555.3L679.2 552.4L679.4 549.1L679.5 545.7L679.7 542.5L679.9 539.8L680.1 537.7L680.2 536.5L680.4 536.0L680.6 536.3L680.8 537.2L680.9 538.6L681.1 540.6L681.3 542.9L681.4 545.4L681.6 547.9L681.8 550.0L682.0 551.5L682.1 552.7L682.3 553.4L682.5 553.8L682.7 553.7L682.8 553.2L683.0 552.5L683.2 551.5L683.3 550.0L683.5 548.2L683.7 546.0L683.9 543.7L684.0 541.3L684.2 539.4L684.4 538.2L684.6 537.8L684.7 538.1L684.9 539.2L685.1 540.8L685.2 542.7L685.6 546.5L685.8 548.0L685.9 549.3L686.1 550.2L686.3 550.8L686.5 551.2L686.6 551.3L686.8 551.1L687.0 550.5L687.2 549.6L687.3 548.4L687.5 547.0L687.7 545.6L687.8 544.4L688.0 543.2L688.2 542.5L688.4 542.3L688.5 542.6L688.7 543.2L688.9 544.0L689.1 544.8L689.2 545.6L689.4 546.4L689.6 547.3L689.7 548.2L689.9 549.2L690.1 550.1L690.3 551.0L690.4 551.9L690.6 552.5L690.8 552.8L691.0 552.8L691.1 552.6L691.3 552.3L691.5 551.9L691.6 551.5L691.8 551.1L692.0 550.5L692.2 549.7L692.3 548.8L692.5 547.8L692.7 546.8L692.9 545.7L693.0 544.6L693.2 543.8L693.4 543.1L693.5 542.9L693.7 543.1L693.9 543.9L694.1 545.5L694.2 547.6L694.4 550.3L694.6 553.5L694.8 556.9L694.9 560.1L695.1 562.9L695.3 564.7L695.4 565.2L695.6 564.0L695.8 560.9L696.0 556.1L696.1 549.6L696.3 542.0L696.5 534.2L696.7 527.0L696.8 521.6L697.0 518.5L697.2 518.5L697.3 521.6L697.5 527.5L697.7 535.8L697.9 545.5L698.0 555.6L698.2 564.7L698.4 571.9L698.6 576.3L698.7 577.5L698.9 575.6L699.1 570.6L699.3 563.6L699.6 547.0L699.8 539.6L699.9 533.9L700.1 530.5L700.3 529.5L700.5 530.8L700.6 533.9L700.8 538.3L701.0 543.4L701.2 548.4L701.3 552.8L701.5 555.9L701.7 557.6L701.8 557.8L702.0 556.7L702.2 554.7L702.4 552.2L702.5 549.5L702.7 547.1L702.9 544.8L703.1 542.9L703.2 541.5L703.4 540.5L703.6 540.0L703.7 540.1L703.9 540.9L704.1 542.3L704.3 544.3L704.4 546.7L704.6 549.5L704.8 552.2L705.0 554.5L705.1 556.6L705.3 558.1L705.5 559.2L705.6 559.5L705.8 559.2L706.0 558.2L706.2 556.7L706.3 554.6L706.5 551.9L706.7 548.9L706.9 545.8L707.0 542.8L707.2 540.4L707.4 538.5L707.5 537.2L707.7 536.5L707.9 536.4L708.1 536.9L708.2 538.0L708.4 539.4L708.6 541.1L708.8 542.8L708.9 544.6L709.1 546.2L709.3 547.6L709.4 548.6L709.6 549.3L709.8 549.5L710.0 549.3L710.1 548.8L710.3 548.0L710.5 546.9L710.7 545.6L710.8 544.4L711.0 543.4L711.2 542.8L711.4 542.5L711.5 542.5L711.7 542.9L711.9 543.6L712.0 544.3L712.2 545.2L712.4 546.1L712.6 547.0L712.7 547.8L712.9 548.7L713.1 549.5L713.3 550.3L713.6 551.7L713.8 552.3L713.9 552.7L714.1 553.0L714.3 552.9L714.5 552.2L714.6 550.9L714.8 549.1L715.0 546.9L715.2 544.5L715.3 542.2L715.5 540.4L715.7 539.3L715.8 538.9L716.0 539.6L716.2 541.4L716.4 544.3L716.5 548.0L716.7 552.4L716.9 557.1L717.1 561.5L717.2 565.0L717.4 567.0L717.6 567.2L717.7 565.3L717.9 561.2L718.1 555.2L718.3 547.9L718.4 539.8L718.6 531.8L718.8 524.7L719.0 519.4L719.1 516.6L719.3 516.9L719.5 520.3L719.6 526.7L719.8 535.5L720.0 545.8L720.2 556.3L720.3 565.9L720.5 573.6L720.7 578.3L720.9 579.8L721.0 578.0L721.2 573.0L721.4 565.8L721.5 557.4L721.7 548.9L721.9 541.4L722.1 535.6L722.2 532.1L722.4 530.9L722.6 531.8L722.8 534.4L722.9 538.3L723.1 542.6L723.3 546.9L723.5 550.6L723.6 553.4L723.8 555.2L724.0 556.0L724.1 555.8L724.3 554.8L724.5 553.2L724.7 551.2L724.8 548.9L725.0 546.5L725.2 544.2L725.4 542.0L725.5 540.1L725.7 538.9L725.9 538.4L726.0 538.7L726.2 539.7L726.4 541.2L726.6 543.1L726.7 545.3L726.9 547.6L727.1 550.2L727.3 552.9L727.6 557.2L727.8 558.4L727.9 558.6L728.1 557.7L728.3 555.8L728.5 553.1L728.6 550.1L728.8 547.0L729.0 544.3L729.2 542.1L729.3 540.5" stroke="#b9d8ec" stroke-width="1.1" fill="none" stroke-linejoin="round"/>
<path d="M375.5 502.5v6M375.5 597.5v-6M392.5 502.5v3.5M392.5 597.5v-3.5M410.5 502.5v3.5M410.5 597.5v-3.5M427.5 502.5v3.5M427.5 597.5v-3.5M444.5 502.5v3.5M444.5 597.5v-3.5M461.5 502.5v3.5M461.5 597.5v-3.5M479.5 502.5v3.5M479.5 597.5v-3.5M496.5 502.5v3.5M496.5 597.5v-3.5M513.5 502.5v3.5M513.5 597.5v-3.5M531.5 502.5v3.5M531.5 597.5v-3.5M548.5 502.5v6M548.5 597.5v-6M565.5 502.5v3.5M565.5 597.5v-3.5M582.5 502.5v3.5M582.5 597.5v-3.5M600.5 502.5v3.5M600.5 597.5v-3.5M617.5 502.5v3.5M617.5 597.5v-3.5M634.5 502.5v3.5M634.5 597.5v-3.5M652.5 502.5v3.5M652.5 597.5v-3.5M669.5 502.5v3.5M669.5 597.5v-3.5M686.5 502.5v3.5M686.5 597.5v-3.5M703.5 502.5v3.5M703.5 597.5v-3.5M721.5 502.5v6M721.5 597.5v-6M375.5 510.5h6M729.5 510.5h-6M375.5 548.5h6M729.5 548.5h-6M375.5 586.5h6M729.5 586.5h-6M375.5 529.5h3.5M729.5 529.5h-3.5M375.5 567.5h3.5M729.5 567.5h-3.5" stroke="#1a1a1a" stroke-width="1" fill="none"/><rect x="375.5" y="502.5" width="354.0" height="95.0" fill="none" stroke="#1a1a1a" stroke-width="1.2"/>
<text x="370.3" y="514.5" font-size="14" text-anchor="end" fill="#333" textLength="17.2" lengthAdjust="spacingAndGlyphs">0.3</text>
<text x="370.3" y="552.5" font-size="14" text-anchor="end" fill="#333" textLength="6.9" lengthAdjust="spacingAndGlyphs">0</text>
<text x="370.3" y="590.5" font-size="14" text-anchor="end" fill="#333" textLength="21.3" lengthAdjust="spacingAndGlyphs">-0.3</text>
<text transform="translate(328.4 550.3) rotate(-90)" font-size="15.5" text-anchor="middle" fill="#333" textLength="47.4" lengthAdjust="spacingAndGlyphs">Level 4</text>
<rect x="375.5" y="618.5" width="354.0" height="82.0" fill="#fff"/>
<path d="M548.5 618.5 V700.5" stroke="#dedede" stroke-width="1" fill="none"/><path d="M721.5 618.5 V700.5" stroke="#dedede" stroke-width="1" fill="none"/><path d="M375.5 660.5 H729.5" stroke="#dedede" stroke-width="1" fill="none"/>
<path d="M375.5 672.6L376.0 668.9L376.5 666.2L377.1 664.4L377.6 663.9L378.1 665.1L378.6 668.4L379.1 672.8L379.6 677.6L380.2 682.0L380.7 685.1L381.2 686.1L381.7 685.4L382.2 683.9L382.8 681.7L383.3 679.1L383.8 676.5L384.3 674.3L384.8 672.6L385.4 671.8L385.9 671.7L386.4 672.0L386.9 672.4L387.4 672.8L387.9 673.3L388.5 673.7L389.0 673.8L389.5 673.7L390.0 673.4L390.5 672.9L391.1 672.4L391.6 672.0L392.1 671.6L392.6 671.4L393.1 671.6L393.6 672.7L394.2 674.6L394.7 677.1L395.2 679.7L395.7 682.1L396.2 683.9L396.8 684.9L397.3 684.6L397.8 683.1L398.3 680.8L398.8 678.0L399.4 674.8L399.9 671.7L400.4 668.9L400.9 666.8L401.4 665.6L401.9 665.7L402.5 667.1L403.0 669.7L403.5 672.9L404.0 676.4L404.5 679.9L405.1 682.9L405.6 685.1L406.1 686.0L406.6 685.8L407.1 684.7L407.7 683.1L408.2 681.1L408.7 678.8L409.2 676.6L409.7 674.6L410.2 672.9L410.8 671.7L411.3 670.6L411.8 669.5L412.3 668.5L412.8 667.6L413.4 666.7L413.9 665.9L414.4 665.3L414.9 664.7L415.4 664.3L415.9 664.0L416.5 663.9L417.0 664.0L417.5 664.2L418.0 665.1L418.5 666.9L419.1 669.3L419.6 671.9L420.1 674.2L420.6 675.9L421.1 676.5L421.7 675.8L422.2 673.7L422.7 670.6L423.2 667.0L423.7 663.1L424.2 659.3L424.8 656.1L425.3 653.7L425.8 652.5L426.3 652.8L426.8 654.3L427.4 656.7L427.9 659.6L428.4 662.8L428.9 666.0L429.4 668.9L429.9 671.1L430.5 672.4L431.0 672.5L431.5 671.9L432.0 670.7L432.5 669.1L433.1 667.2L433.6 665.2L434.1 663.2L434.6 661.4L435.1 659.9L435.7 658.9L436.2 658.3L436.7 657.8L437.2 657.3L437.7 657.0L438.2 656.6L438.8 656.4L439.3 656.2L439.8 656.1L440.3 656.0L440.8 656.1L441.4 656.2L441.9 656.3L442.4 656.7L442.9 657.6L443.4 658.8L443.9 660.3L444.5 661.7L445.0 663.1L445.5 664.1L446.0 664.7L446.5 664.5L447.1 663.0L447.6 660.5L448.1 657.3L448.6 653.7L449.1 650.3L449.7 647.3L450.2 645.1L450.7 644.1L451.2 644.7L451.7 646.8L452.2 650.0L452.8 653.8L453.3 657.8L453.8 661.4L454.3 664.3L454.8 666.0L455.4 666.1L455.9 664.9L456.4 662.7L456.9 659.8L457.4 656.7L458.0 653.7L458.5 650.9L459.0 648.9L459.5 647.5L460.0 646.2L460.5 644.9L461.1 643.7L461.6 642.7L462.1 641.7L462.6 640.9L463.1 640.2L463.7 639.7L464.2 639.3L464.7 639.1L465.2 639.1L465.7 639.3L466.2 639.9L466.8 641.2L467.3 643.1L467.8 645.3L468.3 647.3L468.8 649.1L469.4 650.2L469.9 650.4L470.4 649.0L470.9 646.3L471.4 642.5L472.0 638.3L472.5 634.1L473.0 630.2L473.5 627.2L474.0 625.6L474.5 625.6L475.1 626.9L475.6 629.3L476.1 632.2L476.6 635.6L477.1 638.9L477.7 641.9L478.2 644.4L478.7 645.8L479.2 646.1L479.7 645.2L480.2 643.4L480.8 641.1L481.3 638.5L481.8 636.0L482.3 633.7L482.8 632.1L483.4 631.3L483.9 631.0L484.4 630.7L484.9 630.5L485.4 630.4L486.0 630.3L486.5 630.4L487.0 630.5L487.5 630.7L488.0 630.9L488.5 631.6L489.1 632.9L489.6 634.7L490.1 636.8L490.6 639.1L491.1 641.4L491.7 643.5L492.2 645.3L492.7 646.6L493.2 647.2L493.7 647.0L494.2 645.3L494.8 642.1L495.3 638.2L495.8 634.0L496.3 630.1L496.8 627.1L497.4 625.5L497.9 625.7L498.4 627.1L498.9 629.6L499.4 632.7L500.0 636.1L500.5 639.7L501.0 643.0L501.5 645.9L502.0 647.9L502.5 648.8L503.1 648.5L503.6 647.1L504.1 645.2L504.6 643.0L505.1 640.9L505.7 639.2L506.2 638.3L506.7 638.0L507.2 637.9L507.7 638.0L508.2 638.2L508.8 638.5L509.3 638.9L509.8 639.4L510.3 640.1L510.8 640.9L511.4 641.7L511.9 642.7L512.4 644.4L512.9 646.9L513.4 649.8L514.0 652.9L514.5 655.9L515.0 658.3L515.5 660.1L516.0 660.7L516.5 660.0L517.1 658.2L517.6 655.7L518.1 652.6L518.6 649.5L519.1 646.6L519.7 644.2L520.2 642.8L520.7 642.6L521.2 643.6L521.7 645.6L522.3 648.3L522.8 651.3L523.3 654.5L523.8 657.4L524.3 659.8L524.8 661.4L525.4 662.0L525.9 661.9L526.4 661.3L526.9 660.4L527.4 659.3L528.0 657.9L528.5 656.4L529.0 654.9L529.5 653.3L530.0 651.9L530.5 650.6L531.1 649.5L531.6 648.8L532.1 648.4L532.6 648.5L533.1 649.1L533.7 650.2L534.2 651.8L534.7 653.5L535.2 655.4L535.7 657.4L536.3 659.2L536.8 660.8L537.3 662.1L537.8 662.9L538.3 663.1L538.8 662.4L539.4 660.4L539.9 657.6L540.4 654.2L540.9 650.6L541.4 647.1L542.0 644.0L542.5 641.8L543.0 640.7L543.5 640.9L544.0 642.3L544.5 644.6L545.1 647.4L545.6 650.3L546.1 653.0L546.6 655.2L547.1 656.5L547.7 656.7L548.2 656.0L548.7 654.7L549.2 653.0L549.7 651.1L550.3 649.1L550.8 647.3L551.3 645.9L551.8 645.0L552.3 645.0L552.8 645.5L553.4 645.7L553.9 646.0L554.4 646.2L554.9 646.4L555.4 646.6L556.0 647.0L556.5 648.0L557.0 649.8L557.5 652.2L558.0 654.5L558.5 656.4L559.1 657.2L559.6 656.6L560.1 654.8L560.6 652.1L561.1 648.7L561.7 645.2L562.2 641.7L562.7 638.6L563.2 636.3L563.7 635.1L564.3 635.3L564.8 636.6L565.3 638.6L565.8 641.2L566.3 643.9L566.8 646.6L567.4 648.8L567.9 650.3L568.4 650.9L568.9 650.6L569.4 649.7L570.0 648.5L570.5 647.2L571.0 645.9L571.5 645.0L572.0 644.5L572.6 644.3L573.1 644.2L573.6 644.1L574.1 644.1L574.6 644.1L575.1 644.2L575.7 644.3L576.2 644.5L576.7 644.8L577.2 645.2L577.7 645.6L578.3 646.4L578.8 647.9L579.3 650.0L579.8 652.4L580.3 654.9L580.8 657.3L581.4 659.3L581.9 660.8L582.4 661.5L582.9 661.1L583.4 659.6L584.0 657.2L584.5 654.4L585.0 651.4L585.5 648.6L586.0 646.4L586.6 645.1L587.1 645.0L587.6 646.2L588.1 648.5L588.6 651.4L589.1 654.7L589.7 657.9L590.2 660.7L590.7 662.8L591.2 663.8L591.7 663.8L592.3 663.1L592.8 662.2L593.3 661.0L593.8 659.8L594.3 658.8L594.8 658.1L595.4 657.9L595.9 658.1L596.4 658.6L596.9 659.1L597.4 659.4L598.0 659.4L598.5 659.3L599.0 659.1L599.5 658.9L600.0 658.8L600.6 658.7L601.1 658.8L601.6 659.4L602.1 661.0L602.6 663.2L603.1 665.8L603.7 668.4L604.2 670.9L604.7 672.8L605.2 674.0L605.7 674.0L606.3 673.0L606.8 671.0L607.3 668.4L607.8 665.5L608.3 662.6L608.8 659.9L609.4 657.7L609.9 656.3L610.4 656.0L610.9 657.2L611.4 659.6L612.0 662.8L612.5 666.4L613.0 670.0L613.5 673.2L614.0 675.5L614.6 676.5L615.1 676.3L615.6 675.4L616.1 674.0L616.6 672.4L617.1 670.9L617.7 669.6L618.2 669.0L618.7 668.7L619.2 668.5L619.7 668.4L620.3 668.3L620.8 668.3L621.3 668.4L621.8 668.6L622.3 668.9L622.9 669.2L623.4 669.6L623.9 670.2L624.4 670.8L624.9 671.9L625.4 674.2L626.0 677.3L626.5 680.7L627.0 683.8L627.5 686.3L628.0 687.5L628.6 687.2L629.1 685.5L629.6 682.8L630.1 679.4L630.6 675.8L631.1 672.3L631.7 669.2L632.2 667.0L632.7 666.0L633.2 666.4L633.7 668.2L634.3 670.9L634.8 674.2L635.3 677.7L635.8 681.0L636.3 683.7L636.9 685.5L637.4 686.0L637.9 685.6L638.4 684.6L638.9 683.1L639.4 681.5L640.0 680.0L640.5 678.7L641.0 677.9L641.5 677.7L642.0 677.6L642.6 677.5L643.1 677.6L643.6 677.6L644.1 677.8L644.6 677.9L645.1 678.1L645.7 678.5L646.2 679.1L646.7 679.8L647.2 680.1L647.7 680.0L648.3 679.0L648.8 677.5L649.3 675.9L649.8 674.8L650.3 674.5L650.9 675.5L651.4 677.2L651.9 679.3L652.4 681.1L652.9 682.0L653.4 681.7L654.0 680.2L654.5 678.3L655.0 676.4L655.5 675.1L656.0 675.1L656.6 676.4L657.1 678.6L657.6 681.4L658.1 684.5L658.6 687.5L659.1 690.0L659.7 691.9L660.2 692.7L660.7 692.3L661.2 691.2L661.7 689.6L662.3 687.9L662.8 686.4L663.3 685.3L663.8 684.8L664.3 684.4L664.9 684.1L665.4 683.9L665.9 683.7L666.4 683.5L666.9 683.4L667.4 683.2L668.0 683.0L668.5 682.6L669.0 682.1L669.5 681.6L670.0 681.1L670.6 680.6L671.1 680.2L671.6 680.0L672.1 680.0L672.6 680.5L673.2 681.4L673.7 682.6L674.2 683.7L674.7 684.5L675.2 684.8L675.7 684.0L676.3 682.1L676.8 679.6L677.3 676.8L677.8 674.2L678.3 672.3L678.9 671.5L679.4 672.1L679.9 673.9L680.4 676.5L680.9 679.5L681.4 682.7L682.0 685.6L682.5 687.8L683.0 689.1L683.5 689.1L684.0 688.3L684.6 686.9L685.1 685.2L685.6 683.4L686.1 681.8L686.6 680.4L687.2 679.7L687.7 679.3L688.2 679.0L688.7 678.7L689.2 678.5L689.7 678.3L690.3 678.2L690.8 678.1L691.3 678.1L691.8 678.1L692.3 678.1L692.9 678.2L693.4 678.3L693.9 678.5L694.4 678.7L694.9 679.1L695.4 679.8L696.0 680.6L696.5 681.3L697.0 681.9L697.5 682.1L698.0 681.8L698.6 680.6L699.1 678.6L699.6 676.3L700.1 673.9L700.6 671.7L701.2 670.0L701.7 669.1L702.2 669.4L702.7 671.0L703.2 673.5L703.7 676.6L704.3 679.9L704.8 683.1L705.3 685.6L705.8 687.2L706.3 687.6L706.9 687.0L707.4 685.7L707.9 683.9L708.4 682.0L708.9 680.0L709.4 678.3L710.0 677.1L710.5 676.3L711.0 675.7L711.5 675.1L712.0 674.6L712.6 674.1L713.1 673.8L713.6 673.6L714.1 673.5L714.6 673.5L715.2 673.6L715.7 673.9L716.2 674.8L716.7 676.8L717.2 679.3L717.7 682.1L718.3 685.0L718.8 687.4L719.3 689.2L719.8 690.0L720.3 689.3L720.9 687.1L721.4 683.8L721.9 679.8L722.4 675.5L722.9 671.5L723.5 668.1L724.0 665.8L724.5 665.1L725.0 664.9L725.5 665.0L726.0 665.4L726.6 666.1L727.1 667.1L727.6 668.5L728.1 670.4L728.6 672.7L729.2 675.5" stroke="#0072bd" stroke-width="2" fill="none" stroke-linejoin="round"/>
<path d="M375.5 618.5v6M375.5 700.5v-6M392.5 618.5v3.5M392.5 700.5v-3.5M410.5 618.5v3.5M410.5 700.5v-3.5M427.5 618.5v3.5M427.5 700.5v-3.5M444.5 618.5v3.5M444.5 700.5v-3.5M461.5 618.5v3.5M461.5 700.5v-3.5M479.5 618.5v3.5M479.5 700.5v-3.5M496.5 618.5v3.5M496.5 700.5v-3.5M513.5 618.5v3.5M513.5 700.5v-3.5M531.5 618.5v3.5M531.5 700.5v-3.5M548.5 618.5v6M548.5 700.5v-6M565.5 618.5v3.5M565.5 700.5v-3.5M582.5 618.5v3.5M582.5 700.5v-3.5M600.5 618.5v3.5M600.5 700.5v-3.5M617.5 618.5v3.5M617.5 700.5v-3.5M634.5 618.5v3.5M634.5 700.5v-3.5M652.5 618.5v3.5M652.5 700.5v-3.5M669.5 618.5v3.5M669.5 700.5v-3.5M686.5 618.5v3.5M686.5 700.5v-3.5M703.5 618.5v3.5M703.5 700.5v-3.5M721.5 618.5v6M721.5 700.5v-6M375.5 660.5h6M729.5 660.5h-6M375.5 634.5h3.5M729.5 634.5h-3.5M375.5 687.5h3.5M729.5 687.5h-3.5" stroke="#1a1a1a" stroke-width="1" fill="none"/><rect x="375.5" y="618.5" width="354.0" height="82.0" fill="none" stroke="#1a1a1a" stroke-width="1.2"/>
<text x="370.3" y="664.8" font-size="14" text-anchor="end" fill="#333" textLength="6.9" lengthAdjust="spacingAndGlyphs">0</text>
<text transform="translate(328.4 659.8) rotate(-90)" font-size="15.5" text-anchor="middle" fill="#333" textLength="52.4" lengthAdjust="spacingAndGlyphs">Approx.</text>
<text x="375.5" y="717.0" font-size="14" text-anchor="middle" fill="#333" textLength="6.9" lengthAdjust="spacingAndGlyphs">0</text>
<text x="548.4" y="717.0" font-size="14" text-anchor="middle" fill="#333" textLength="27.6" lengthAdjust="spacingAndGlyphs">1000</text>
<text x="721.2" y="717.0" font-size="14" text-anchor="middle" fill="#333" textLength="27.6" lengthAdjust="spacingAndGlyphs">2000</text>
<text x="552.5" y="735.5" font-size="15" text-anchor="middle" fill="#333" textLength="55.5" lengthAdjust="spacingAndGlyphs">samples</text>
</svg>
<div class="tabstrip" style="left:750px;width:450px"></div>
<div class="tabline" style="left:750px;width:15px"></div>
<div class="tabline" style="left:880px;width:320px"></div>
<div class="doctab" style="left:765px;width:115px"><div class="bar" style="background:#999"></div><span id="rtab"><span class="f" style="transform:scaleX(0.963)">Reconstructions</span></span></div>
<svg class="gs" width="1200" height="770" viewBox="0 0 1200 770">
<rect x="756" y="127" width="4" height="1" fill="#9a9a9a"/>
<rect x="756" y="129" width="4" height="1" fill="#9a9a9a"/>
<rect x="756" y="131" width="4" height="1" fill="#9a9a9a"/>
<rect x="756" y="133" width="4" height="1" fill="#9a9a9a"/>
<rect x="1178" y="127" width="2" height="2" fill="#555"/>
<rect x="1178" y="131" width="2" height="2" fill="#555"/>
<rect x="1178" y="135" width="2" height="2" fill="#555"/>
<rect x="750" y="434" width="2" height="1.5" fill="#222"/>
<rect x="789.5" y="154.5" width="391.0" height="546.0" fill="#fff"/>
<path d="M980.5 154.5 V700.5" stroke="#dedede" stroke-width="1" fill="none"/><path d="M1171.5 154.5 V700.5" stroke="#dedede" stroke-width="1" fill="none"/><path d="M789.5 657.5 H1180.5" stroke="#dedede" stroke-width="1" fill="none"/><path d="M789.5 611.5 H1180.5" stroke="#dedede" stroke-width="1" fill="none"/><path d="M789.5 564.5 H1180.5" stroke="#dedede" stroke-width="1" fill="none"/><path d="M789.5 517.5 H1180.5" stroke="#dedede" stroke-width="1" fill="none"/><path d="M789.5 471.5 H1180.5" stroke="#dedede" stroke-width="1" fill="none"/><path d="M789.5 424.5 H1180.5" stroke="#dedede" stroke-width="1" fill="none"/><path d="M789.5 377.5 H1180.5" stroke="#dedede" stroke-width="1" fill="none"/><path d="M789.5 331.5 H1180.5" stroke="#dedede" stroke-width="1" fill="none"/><path d="M789.5 284.5 H1180.5" stroke="#dedede" stroke-width="1" fill="none"/><path d="M789.5 238.5 H1180.5" stroke="#dedede" stroke-width="1" fill="none"/><path d="M789.5 191.5 H1180.5" stroke="#dedede" stroke-width="1" fill="none"/>
<path d="M789.5 454.3L789.9 447.9L790.1 448.1L790.3 444.4L790.5 441.9L790.6 442.0L790.8 444.4L791.0 445.4L791.2 442.6L791.4 438.8L791.6 435.3L791.8 434.9L792.0 435.1L792.2 438.3L792.4 439.8L792.6 439.9L792.7 442.2L792.9 446.1L793.1 452.8L793.3 456.2L793.5 460.6L793.9 471.7L794.1 477.5L794.3 479.3L794.5 480.1L794.7 479.1L794.8 480.7L795.0 484.2L795.2 490.4L795.4 495.0L795.6 493.9L795.8 491.1L796.0 493.2L796.2 499.3L796.4 501.6L796.6 500.6L796.8 498.0L796.9 497.6L797.1 497.5L797.3 496.9L797.5 495.4L797.7 488.5L797.9 481.9L798.3 474.8L798.5 475.3L798.7 475.8L798.9 476.3L799.0 473.8L799.2 467.6L799.4 460.0L799.6 454.8L799.8 455.3L800.0 458.4L800.2 461.4L800.4 460.0L800.6 459.5L800.8 464.9L801.0 466.7L801.1 465.3L801.3 464.4L801.5 465.2L801.7 466.9L801.9 467.5L802.1 467.7L802.3 466.0L802.5 462.3L802.7 463.2L802.9 466.2L803.1 466.5L803.2 464.6L803.4 463.9L803.6 465.3L803.8 466.1L804.0 468.1L804.2 467.8L804.4 466.2L804.6 464.7L804.8 463.3L805.0 463.9L805.2 462.7L805.3 459.1L805.5 457.9L805.7 459.6L805.9 461.5L806.1 460.6L806.3 458.9L806.5 471.8L806.7 458.8L806.9 460.7L807.1 461.6L807.3 463.1L807.4 465.5L807.6 465.7L807.8 462.8L808.0 458.3L808.2 451.9L808.4 447.2L808.6 445.0L808.8 446.3L809.0 451.3L809.2 454.7L809.4 457.9L809.5 461.8L809.7 468.8L809.9 475.7L810.1 478.5L810.3 478.1L810.7 479.8L810.9 478.2L811.1 476.7L811.3 480.8L811.5 489.1L811.7 499.3L811.8 503.8L812.0 442.6L812.2 342.2L812.4 408.0L812.6 446.5L812.8 439.7L813.0 520.0L813.2 633.0L813.4 557.5L813.6 526.3L813.8 526.8L813.9 534.7L814.1 535.6L814.3 531.1L814.5 520.6L814.7 509.2L815.1 483.0L815.3 472.3L815.5 462.8L815.7 458.7L815.9 457.9L816.0 457.3L816.2 453.4L816.4 447.6L816.6 442.0L816.8 437.2L817.0 434.6L817.2 435.1L817.4 439.5L817.6 442.5L817.8 440.8L818.0 438.8L818.1 441.5L818.3 445.3L818.5 446.9L818.7 446.2L819.1 439.9L819.3 440.7L819.5 444.2L819.7 447.9L819.9 447.5L820.1 445.2L820.2 446.6L820.4 453.2L820.6 459.6L820.8 465.9L821.0 471.8L821.2 476.1L821.4 480.5L821.6 486.3L821.8 495.3L822.0 500.0L822.2 501.5L822.3 501.8L822.5 501.8L822.7 502.0L822.9 502.5L823.1 505.0L823.5 498.1L823.7 493.0L823.9 492.3L824.1 492.8L824.3 492.2L824.4 490.5L824.6 488.5L824.8 489.3L825.0 490.8L825.2 491.5L825.4 489.0L825.6 488.5L825.8 489.2L826.0 488.0L826.2 483.6L826.4 476.2L826.5 470.5L826.7 468.8L826.9 470.3L827.1 463.3L827.3 475.9L827.5 474.2L827.7 471.1L827.9 469.2L828.1 468.9L828.3 465.6L828.5 459.2L828.6 453.4L828.8 450.2L829.0 451.0L829.2 451.2L829.4 450.2L829.6 451.2L829.8 452.3L830.0 450.7L830.2 448.1L830.4 444.9L830.6 443.9L830.7 443.1L830.9 440.4L831.1 440.4L831.3 444.4L831.5 448.6L831.9 440.2L832.1 435.3L832.3 433.4L832.5 435.8L832.7 439.3L832.8 441.7L833.0 443.0L833.2 442.2L833.4 440.5L833.6 439.3L833.8 425.1L834.0 440.7L834.2 440.5L834.4 438.5L834.6 436.3L834.8 435.1L834.9 433.2L835.1 431.7L835.3 429.2L835.5 429.0L835.7 428.3L835.9 428.0L836.3 431.5L836.5 433.4L836.7 437.9L836.9 445.5L837.0 454.9L837.2 461.6L837.4 464.3L837.6 462.0L837.8 458.0L838.0 456.5L838.2 456.5L838.4 462.2L838.6 468.3L838.8 472.9L839.0 477.7L839.1 417.0L839.3 312.6L839.5 382.7L839.7 421.1L839.9 412.6L840.3 608.1L840.5 532.3L840.7 495.0L840.9 490.7L841.1 500.4L841.2 503.6L841.4 498.4L841.6 487.1L841.8 474.7L842.0 462.4L842.2 451.9L842.4 443.2L842.6 437.3L842.8 432.7L843.0 429.7L843.2 424.3L843.3 415.9L843.5 408.5L843.7 403.7L843.9 402.6L844.1 402.6L844.3 403.5L844.7 399.5L844.9 403.3L845.1 410.4L845.3 413.8L845.4 412.0L845.6 410.1L845.8 407.1L846.0 403.4L846.2 399.2L846.4 401.6L846.6 409.4L846.8 413.7L847.0 412.5L847.2 410.0L847.4 412.1L847.5 419.5L847.7 426.4L847.9 428.8L848.1 432.0L848.3 437.7L848.7 449.2L848.9 454.1L849.1 458.7L849.3 461.7L849.5 462.6L849.6 462.6L849.8 463.2L850.0 463.4L850.2 461.2L850.4 460.6L850.6 458.4L850.8 454.3L851.0 450.9L851.2 451.2L851.4 453.1L851.6 455.2L851.7 456.6L851.9 457.4L852.1 458.1L852.3 452.9L852.5 448.2L852.7 445.4L853.1 439.7L853.3 439.4L853.5 442.4L853.7 441.6L853.9 435.2L854.0 425.6L854.2 419.5L854.4 421.6L854.6 423.3L854.8 421.8L855.0 420.4L855.2 419.1L855.4 416.2L855.6 415.6L855.8 416.4L856.0 419.0L856.1 424.9L856.3 428.8L856.5 424.8L856.7 420.9L857.1 417.4L857.3 419.8L857.5 423.0L857.7 425.8L857.9 426.2L858.1 424.2L858.2 421.9L858.4 418.7L858.6 417.8L858.8 416.5L859.0 413.4L859.2 413.7L859.4 416.5L859.6 420.6L859.8 424.7L860.0 423.2L860.2 420.1L860.3 418.0L860.5 416.5L860.7 413.7L860.9 408.3L861.1 405.7L861.3 403.0L861.5 403.1L861.7 408.0L861.9 412.7L862.1 415.7L862.3 413.3L862.4 411.2L862.6 414.9L862.8 417.8L863.0 418.3L863.2 419.1L863.4 417.4L863.6 414.8L863.8 409.6L864.0 404.9L864.2 408.5L864.4 418.3L864.5 426.2L864.7 427.9L864.9 428.5L865.1 431.8L865.3 432.1L865.5 425.9L865.7 419.4L865.9 425.4L866.1 442.3L866.3 458.1L866.5 459.8L866.6 374.8L866.8 241.1L867.0 329.4L867.2 384.6L867.4 379.8L867.6 464.8L867.8 583.2L868.0 502.0L868.2 467.1L868.4 469.5L868.6 483.9L868.7 486.5L868.9 476.3L869.1 458.1L869.3 435.9L869.5 420.9L869.9 400.6L870.1 389.6L870.3 383.8L870.5 382.5L870.7 378.8L870.8 374.7L871.0 370.0L871.2 367.4L871.4 369.7L871.6 373.6L871.8 376.8L872.0 380.0L872.2 381.6L872.4 377.7L872.6 385.6L872.8 388.9L872.9 391.6L873.1 388.0L873.3 382.2L873.5 377.9L873.9 383.3L874.1 386.0L874.3 396.5L874.5 407.3L874.7 409.4L874.9 404.5L875.0 402.5L875.2 409.6L875.4 422.3L875.6 431.1L875.8 436.2L876.0 448.1L876.2 461.1L876.4 464.4L876.6 455.9L876.8 463.7L877.0 446.2L877.1 446.9L877.3 453.0L877.5 457.5L877.7 454.5L877.9 445.7L878.1 430.9L878.3 435.0L878.5 431.6L878.7 432.7L878.9 436.3L879.1 437.7L879.2 431.3L879.4 424.8L879.6 420.6L879.8 417.8L880.0 418.9L880.2 421.4L880.4 419.3L880.6 410.6L880.8 396.9L881.0 387.9L881.2 388.8L881.3 392.8L881.5 395.7L881.7 393.9L881.9 390.8L882.1 385.8L882.3 378.3L882.7 366.4L882.9 367.5L883.1 373.4L883.3 382.1L883.4 389.9L883.6 390.9L883.8 391.5L884.0 377.3L884.2 368.3L884.4 359.1L884.6 351.1L884.8 347.1L885.0 355.6L885.2 372.3L885.4 382.0L885.5 383.4L885.7 379.2L885.9 395.1L886.1 380.1L886.3 375.4L886.5 374.1L886.7 378.0L886.9 377.1L887.1 377.8L887.3 373.9L887.5 360.3L887.6 340.4L887.8 327.6L888.0 331.4L888.2 349.1L888.4 362.7L888.6 371.0L888.8 348.9L889.0 338.1L889.2 335.3L889.4 336.6L889.6 336.6L889.7 344.3L889.9 354.0L890.1 362.8L890.3 370.3L890.5 385.0L890.7 403.2L890.9 407.9L891.1 402.1L891.3 399.0L891.5 399.8L891.7 397.6L891.8 391.0L892.0 403.6L892.2 411.8L892.4 416.9L892.6 337.8L892.8 227.1L893.0 290.9L893.2 325.2L893.4 306.2L893.6 387.5L893.8 514.8L893.9 445.3L894.1 427.1L894.3 433.6L894.5 448.0L894.7 454.0L895.1 429.2L895.3 408.5L895.5 399.2L895.7 399.5L895.9 391.9L896.1 372.1L896.2 351.7L896.4 350.0L896.6 366.9L896.8 377.8L897.0 369.4L897.2 352.2L897.4 342.7L897.6 342.3L897.8 336.9L898.0 313.5L898.2 300.0L898.3 304.8L898.5 322.2L898.7 333.0L898.9 332.6L899.1 331.6L899.5 319.1L899.7 309.2L899.9 303.4L900.1 302.9L900.3 310.5L900.4 334.9L900.6 352.7L900.8 367.4L901.0 363.8L901.2 351.2L901.4 342.8L901.6 349.9L901.8 363.3L902.0 370.0L902.2 366.5L902.4 365.9L902.5 371.3L902.7 371.7L902.9 369.8L903.1 370.2L903.5 394.5L903.7 381.1L903.9 370.5L904.1 378.4L904.3 392.4L904.5 394.4L904.6 384.9L904.8 371.0L905.0 363.8L905.2 360.9L905.4 355.7L905.6 351.9L905.8 357.4L906.0 361.5L906.2 358.2L906.4 357.9L906.6 367.2L906.7 377.3L906.9 377.1L907.1 376.1L907.3 380.1L907.5 379.9L907.9 356.5L908.1 358.1L908.3 368.3L908.5 368.2L908.7 353.6L908.8 337.9L909.0 333.5L909.2 337.3L909.4 307.0L909.6 332.6L909.8 310.3L910.0 326.8L910.2 342.1L910.4 367.1L910.6 385.9L910.8 383.7L910.9 364.9L911.1 341.4L911.3 325.4L911.5 324.0L911.9 346.2L912.1 328.7L912.3 326.7L912.5 330.1L912.7 337.1L912.9 338.0L913.0 337.3L913.2 341.7L913.4 347.5L913.6 347.7L913.8 341.4L914.0 337.5L914.2 367.1L914.4 338.7L914.6 336.1L914.8 331.8L915.0 324.9L915.1 317.1L915.3 311.2L915.5 315.3L915.7 332.0L915.9 349.1L916.1 358.7L916.3 355.0L916.5 350.5L916.7 352.0L916.9 357.1L917.1 366.9L917.2 378.3L917.4 372.6L917.6 387.8L917.8 390.7L918.0 413.4L918.2 401.1L918.4 328.6L918.6 233.3L918.8 296.7L919.0 340.6L919.2 345.5L919.3 401.5L919.5 505.5L919.7 438.9L919.9 414.5L920.1 397.0L920.3 434.7L920.5 459.9L920.7 436.0L920.9 418.7L921.1 396.0L921.3 375.9L921.4 366.7L921.6 358.4L921.8 364.0L922.0 354.6L922.2 342.1L922.4 336.9L922.6 331.2L922.8 330.9L923.0 332.9L923.2 336.4L923.4 339.0L923.5 360.0L923.7 340.8L923.9 334.3L924.1 333.2L924.3 344.2L924.7 359.4L924.9 341.1L925.1 327.6L925.3 321.8L925.5 316.7L925.6 311.6L925.8 305.7L926.0 292.3L926.2 306.1L926.4 331.7L926.6 346.7L926.8 354.1L927.0 349.1L927.2 340.3L927.4 340.9L927.6 350.1L927.7 376.8L927.9 385.3L928.1 383.5L928.3 380.2L928.5 382.7L928.7 391.6L929.1 399.7L929.3 381.6L929.5 390.8L929.7 388.8L929.8 393.7L930.0 400.5L930.2 397.6L930.4 383.8L930.6 369.6L930.8 366.0L931.0 367.3L931.2 368.2L931.4 337.9L931.6 360.9L931.8 363.4L931.9 366.2L932.1 370.0L932.3 373.0L932.5 376.6L932.7 379.6L932.9 376.6L933.1 379.8L933.3 371.1L933.5 366.6L933.7 364.5L933.9 364.1L934.0 361.1L934.2 355.0L934.4 351.0L934.6 352.6L934.8 357.9L935.0 357.2L935.2 354.2L935.4 353.9L935.6 355.4L935.8 356.5L936.0 354.7L936.1 355.3L936.3 362.2L936.5 371.3L936.7 379.1L936.9 376.1L937.1 363.1L937.5 351.1L937.7 350.3L937.9 358.7L938.1 364.6L938.3 372.1L938.4 377.7L938.6 376.8L938.8 368.6L939.0 380.1L939.2 357.9L939.4 360.3L939.6 364.2L939.8 368.4L940.0 372.4L940.2 377.0L940.4 378.5L940.5 395.3L940.7 378.3L940.9 380.5L941.1 412.1L941.3 393.5L941.5 399.8L941.7 406.6L941.9 404.9L942.1 411.4L942.3 409.1L942.5 408.5L942.6 411.7L942.8 425.6L943.0 427.5L943.2 431.1L943.4 430.8L943.6 361.5L943.8 247.3L944.0 322.4L944.2 364.0L944.4 356.3L944.6 444.7L944.7 567.7L944.9 485.6L945.1 449.4L945.3 451.1L945.5 464.2L945.7 468.7L945.9 465.3L946.1 452.5L946.3 436.1L946.5 422.4L946.7 414.6L946.8 409.0L947.0 411.0L947.2 391.9L947.4 389.0L947.6 388.9L947.8 377.8L948.0 380.7L948.2 375.4L948.4 375.1L948.6 373.8L948.8 374.4L948.9 378.2L949.1 384.4L949.3 389.4L949.5 390.6L949.7 391.1L949.9 385.6L950.1 378.5L950.3 373.8L950.5 372.2L950.7 372.5L950.9 371.0L951.0 368.5L951.2 369.5L951.4 375.1L951.6 379.0L951.8 383.2L952.0 386.5L952.2 389.9L952.4 394.4L952.6 398.6L952.8 407.6L953.0 415.5L953.1 417.3L953.3 418.8L953.5 420.6L953.7 425.6L953.9 431.1L954.1 432.0L954.3 431.6L954.5 430.6L954.7 431.0L954.9 430.5L955.1 427.9L955.2 426.9L955.4 426.1L955.6 422.6L955.8 419.4L956.0 418.5L956.2 421.0L956.4 424.2L956.6 426.3L956.8 426.6L957.0 421.8L957.2 418.1L957.3 417.5L957.5 419.2L957.7 420.4L957.9 420.2L958.3 422.7L958.5 422.4L958.7 420.5L958.9 417.3L959.1 412.7L959.3 411.0L959.4 408.7L959.6 405.3L959.8 404.6L960.0 405.6L960.2 405.3L960.4 401.9L960.6 398.0L960.8 395.4L961.0 393.2L961.2 391.9L961.4 394.3L961.5 397.5L961.7 398.4L961.9 395.2L962.1 388.6L962.3 384.8L962.7 386.3L962.9 387.6L963.1 388.7L963.3 389.1L963.5 390.0L963.6 387.9L963.8 384.4L964.0 383.2L964.2 385.3L964.4 390.1L964.6 392.7L964.8 394.3L965.0 397.6L965.2 399.4L965.4 400.8L965.6 407.8L965.7 416.9L965.9 424.6L966.1 425.6L966.3 423.6L966.5 422.4L966.7 421.3L967.1 419.9L967.3 424.5L967.5 431.5L967.7 437.7L967.8 441.5L968.0 372.6L968.2 255.1L968.4 333.5L968.6 378.5L968.8 371.2L969.0 455.3L969.2 575.4L969.4 495.1L969.6 459.8L969.8 458.8L969.9 467.8L970.1 468.8L970.3 465.9L970.5 460.0L970.7 447.6L971.1 417.6L971.3 406.3L971.5 402.4L971.7 402.1L971.9 399.4L972.0 393.7L972.2 384.1L972.4 374.5L972.6 367.2L972.8 364.6L973.0 364.9L973.2 365.6L973.4 365.9L973.6 366.0L973.8 367.5L974.0 369.9L974.1 368.6L974.3 366.6L974.5 365.8L974.7 363.6L974.9 364.2L975.1 367.8L975.3 369.6L975.5 368.0L975.7 364.8L975.9 364.6L976.1 367.1L976.2 370.0L976.4 373.5L976.6 376.0L976.8 384.2L977.0 392.7L977.2 395.5L977.4 398.5L977.6 398.1L977.8 404.5L978.0 409.0L978.2 410.5L978.3 415.0L978.5 420.0L978.7 421.0L978.9 419.0L979.1 413.6L979.5 406.3L979.7 405.6L979.9 407.0L980.1 404.5L980.3 400.9L980.5 398.8L980.6 396.1L980.8 395.8L981.0 394.9L981.2 396.2L981.4 402.7L981.6 408.4L981.8 410.1L982.0 406.2L982.2 403.4L982.4 399.7L982.6 397.2L982.7 398.0L982.9 398.3L983.1 395.5L983.3 387.8L983.5 384.2L983.9 385.3L984.1 384.1L984.3 383.6L984.5 383.5L984.7 381.4L984.8 377.8L985.0 374.3L985.2 373.2L985.4 374.2L985.6 377.5L985.8 379.8L986.0 384.6L986.2 388.7L986.4 388.6L986.6 387.8L986.8 386.8L986.9 382.8L987.1 377.3L987.3 376.3L987.5 378.7L987.9 380.8L988.1 381.5L988.3 383.9L988.5 386.9L988.7 387.8L988.9 385.7L989.0 382.1L989.2 379.5L989.4 378.0L989.6 374.8L989.8 376.5L990.0 388.7L990.2 404.1L990.4 416.3L990.6 420.8L990.8 356.6L991.0 250.4L991.1 320.4L991.3 360.1L991.5 350.9L991.7 433.5L991.9 552.1L992.3 440.8L992.5 444.8L992.7 458.6L992.9 461.6L993.1 457.4L993.2 447.1L993.4 433.8L993.6 422.8L993.8 415.7L994.0 408.4L994.2 397.9L994.4 388.7L994.6 381.7L994.8 378.2L995.0 375.4L995.2 371.1L995.3 367.1L995.5 361.1L995.7 356.1L995.9 355.3L996.3 361.6L996.5 364.7L996.7 365.8L996.9 365.4L997.1 360.8L997.3 357.0L997.4 354.3L997.6 351.4L997.8 348.8L998.0 345.0L998.2 343.9L998.4 345.8L998.6 348.0L998.8 349.8L999.0 350.3L999.2 351.0L999.4 352.2L999.5 354.6L999.7 361.8L999.9 369.8L1000.1 376.7L1000.3 382.7L1000.7 392.2L1000.9 394.5L1001.1 397.0L1001.3 399.9L1001.5 399.9L1001.6 400.4L1001.8 400.3L1002.0 395.8L1002.2 393.7L1002.4 394.5L1002.6 394.7L1002.8 396.1L1003.0 398.3L1003.2 398.9L1003.4 392.9L1003.6 382.4L1003.7 379.1L1003.9 369.2L1004.1 384.6L1004.3 390.1L1004.5 390.9L1004.7 388.5L1004.9 383.5L1005.1 385.7L1005.3 391.0L1005.5 395.5L1005.7 396.4L1005.8 390.2L1006.0 385.5L1006.2 383.5L1006.4 381.3L1006.6 377.3L1006.8 375.7L1007.0 373.6L1007.2 368.6L1007.4 366.6L1007.6 367.6L1007.8 369.5L1007.9 368.1L1008.1 366.4L1008.3 370.9L1008.5 387.3L1008.7 382.2L1009.1 374.2L1009.3 371.7L1009.5 372.0L1009.7 365.1L1009.9 373.8L1010.0 373.2L1010.2 375.2L1010.4 377.8L1010.6 377.8L1010.8 374.3L1011.0 368.0L1011.2 369.5L1011.4 375.9L1011.6 376.8L1011.8 372.5L1012.0 366.7L1012.1 365.7L1012.3 369.1L1012.5 370.2L1012.7 372.2L1012.9 375.6L1013.1 381.9L1013.3 387.5L1013.5 384.7L1013.7 381.7L1013.9 383.2L1014.1 388.5L1014.2 396.2L1014.4 401.5L1014.6 404.0L1014.8 404.9L1015.0 404.0L1015.2 404.3L1015.4 404.3L1015.6 405.7L1015.8 410.4L1016.0 416.4L1016.2 424.9L1016.3 429.6L1016.5 367.5L1016.7 253.6L1016.9 331.7L1017.1 377.8L1017.3 368.8L1017.5 454.6L1017.7 573.9L1017.9 493.5L1018.1 454.2L1018.3 449.9L1018.4 463.0L1018.6 471.0L1018.8 473.4L1019.0 467.0L1019.2 454.4L1019.4 437.9L1019.6 420.4L1019.8 409.8L1020.0 407.5L1020.2 408.6L1020.4 407.9L1020.5 404.4L1020.7 397.1L1020.9 386.4L1021.1 378.5L1021.3 375.7L1021.5 376.2L1021.9 382.9L1022.1 389.3L1022.3 393.6L1022.5 396.8L1022.6 396.8L1022.8 392.6L1023.0 384.9L1023.2 376.7L1023.4 374.4L1023.6 379.5L1023.8 389.0L1024.0 394.3L1024.2 393.2L1024.4 390.3L1024.6 390.8L1024.8 395.8L1024.9 400.4L1025.1 400.5L1025.3 398.3L1025.5 402.5L1025.9 408.3L1026.1 414.4L1026.3 422.3L1026.5 430.1L1026.7 431.1L1026.9 427.0L1027.0 421.9L1027.2 423.4L1027.4 430.3L1027.6 438.7L1027.8 443.3L1028.0 439.2L1028.2 433.1L1028.4 418.5L1028.6 436.9L1028.8 436.9L1029.0 431.8L1029.1 428.1L1029.3 426.7L1029.5 424.0L1029.7 420.3L1029.9 417.2L1030.3 419.1L1030.5 417.2L1030.7 412.7L1030.9 410.9L1031.1 415.4L1031.2 424.7L1031.4 430.2L1031.6 428.0L1031.8 424.4L1032.0 420.0L1032.2 416.8L1032.4 412.6L1032.6 409.1L1032.8 408.4L1033.0 408.8L1033.2 410.8L1033.3 410.5L1033.5 407.4L1033.7 405.5L1033.9 404.7L1034.1 404.6L1034.3 405.5L1034.5 410.0L1034.7 417.7L1034.9 425.4L1035.1 429.5L1035.3 428.3L1035.4 423.9L1035.6 420.8L1035.8 420.9L1036.0 423.4L1036.2 422.7L1036.4 415.0L1036.6 410.7L1036.8 415.5L1037.0 421.2L1037.2 426.7L1037.4 419.0L1037.5 411.8L1037.7 410.0L1037.9 410.0L1038.1 413.1L1038.3 414.9L1038.7 416.3L1038.9 415.9L1039.1 416.7L1039.3 417.7L1039.5 421.9L1039.6 428.5L1039.8 430.7L1040.0 432.1L1040.2 437.6L1040.4 445.7L1040.6 451.6L1040.8 449.0L1041.0 444.2L1041.2 442.0L1041.4 441.5L1041.6 445.7L1041.7 453.6L1041.9 463.7L1042.1 470.9L1042.3 469.6L1042.7 280.0L1042.9 359.5L1043.1 398.1L1043.3 387.0L1043.5 482.1L1043.7 611.2L1043.8 526.2L1044.0 485.2L1044.2 484.5L1044.4 499.4L1044.6 503.4L1044.8 494.5L1045.0 477.2L1045.2 462.8L1045.4 452.8L1045.6 443.1L1045.8 437.8L1045.9 435.6L1046.1 432.8L1046.3 428.0L1046.5 421.5L1046.7 416.3L1046.9 414.0L1047.1 414.1L1047.3 414.8L1047.5 411.1L1047.7 404.6L1047.9 404.3L1048.0 412.0L1048.2 419.4L1048.4 422.5L1048.6 425.9L1048.8 424.4L1049.0 419.4L1049.2 407.7L1049.4 397.5L1049.6 399.5L1049.8 410.0L1050.0 421.7L1050.1 426.0L1050.3 425.2L1050.5 424.1L1050.7 424.0L1050.9 429.2L1051.1 443.1L1051.3 453.9L1051.5 452.0L1051.7 447.9L1051.9 451.9L1052.1 464.4L1052.2 472.5L1052.4 467.2L1052.6 462.4L1052.8 462.7L1053.0 464.8L1053.2 469.4L1053.4 468.7L1053.6 465.3L1053.8 463.9L1054.0 464.5L1054.2 471.2L1054.3 474.2L1054.5 469.0L1054.7 463.0L1054.9 456.6L1055.1 450.3L1055.5 439.8L1055.7 448.7L1055.9 461.4L1056.1 468.2L1056.3 471.0L1056.4 471.1L1056.6 468.6L1056.8 463.7L1057.0 458.8L1057.2 455.4L1057.4 451.7L1057.6 444.2L1057.8 439.6L1058.0 440.6L1058.2 441.7L1058.4 439.6L1058.5 434.2L1058.7 432.2L1058.9 436.5L1059.1 439.7L1059.3 436.7L1059.5 430.4L1059.7 428.5L1059.9 432.8L1060.1 437.6L1060.3 440.9L1060.5 444.4L1060.6 449.2L1060.8 451.3L1061.0 450.4L1061.2 450.3L1061.4 448.6L1061.6 446.2L1061.8 443.3L1062.0 440.6L1062.2 438.4L1062.4 437.4L1062.6 440.0L1062.7 442.8L1062.9 447.1L1063.1 450.9L1063.3 450.6L1063.5 447.1L1063.9 440.0L1064.1 443.6L1064.3 445.9L1064.5 447.8L1064.7 452.8L1064.8 457.7L1065.0 462.7L1065.2 469.2L1065.4 478.8L1065.6 487.4L1065.8 490.9L1066.0 487.3L1066.2 481.1L1066.4 482.5L1066.6 493.4L1066.8 509.6L1067.0 513.5L1067.1 436.4L1067.3 326.6L1067.5 395.5L1067.7 434.6L1067.9 426.8L1068.3 650.1L1068.5 563.6L1068.7 531.9L1068.9 535.9L1069.1 548.1L1069.2 551.7L1069.4 548.2L1069.6 538.6L1069.8 521.8L1070.0 507.6L1070.2 498.3L1070.4 491.5L1070.6 481.7L1070.8 465.7L1071.0 452.8L1071.2 446.3L1071.3 447.7L1071.5 452.8L1071.7 455.2L1071.9 454.5L1072.1 454.1L1072.3 455.1L1072.5 452.2L1072.7 451.6L1072.9 453.2L1073.1 450.2L1073.3 445.9L1073.4 444.9L1073.6 447.3L1073.8 446.6L1074.0 440.5L1074.2 435.4L1074.4 434.9L1074.6 435.4L1074.8 437.6L1075.0 442.1L1075.2 449.4L1075.4 455.4L1075.5 459.3L1075.7 466.7L1075.9 474.5L1076.1 477.9L1076.3 479.1L1076.7 475.4L1076.9 478.5L1077.1 479.6L1077.3 493.2L1077.5 497.6L1077.6 501.0L1077.8 500.4L1078.0 496.0L1078.2 493.5L1078.4 494.6L1078.6 492.0L1078.8 481.8L1079.0 474.4L1079.2 478.3L1079.4 486.0L1079.6 487.2L1079.7 484.4L1079.9 483.0L1080.1 484.4L1080.3 485.5L1080.7 491.1L1080.9 491.0L1081.1 489.3L1081.3 486.5L1081.5 486.9L1081.7 490.5L1081.8 492.0L1082.0 490.5L1082.2 483.9L1082.4 477.1L1082.6 474.9L1082.8 475.8L1083.0 476.5L1083.2 472.6L1083.4 468.4L1083.6 470.7L1083.8 476.3L1083.9 479.1L1084.1 476.3L1084.3 473.7L1084.5 473.7L1084.7 469.8L1085.1 453.8L1085.3 454.9L1085.5 466.4L1085.7 476.1L1085.9 477.4L1086.0 474.0L1086.2 471.6L1086.4 475.4L1086.6 478.5L1086.8 480.1L1087.0 476.5L1087.2 472.0L1087.4 473.2L1087.6 473.6L1087.8 478.2L1088.0 484.8L1088.1 491.1L1088.3 493.3L1088.5 485.1L1088.7 474.0L1088.9 469.0L1089.1 473.1L1089.5 490.1L1089.7 488.1L1089.9 478.8L1090.1 467.5L1090.2 458.6L1090.4 458.7L1090.6 466.7L1090.8 480.4L1091.0 492.2L1091.2 495.7L1091.4 494.2L1091.6 488.7L1091.8 483.2L1092.0 480.1L1092.2 477.0L1092.3 476.4L1092.5 477.3L1092.7 484.4L1092.9 485.1L1093.1 379.3L1093.3 205.3L1093.5 327.2L1093.7 404.9L1093.9 402.9L1094.1 510.8L1094.3 650.1L1094.4 554.7L1094.6 504.8L1094.8 502.0L1095.0 519.0L1095.2 525.0L1095.4 522.8L1095.6 518.1L1095.8 516.3L1096.0 511.6L1096.2 499.1L1096.4 484.3L1096.5 474.6L1096.7 470.7L1096.9 465.3L1097.1 460.3L1097.3 463.0L1097.5 464.4L1097.7 463.3L1097.9 464.7L1098.1 465.1L1098.3 463.9L1098.5 460.0L1098.6 457.8L1098.8 464.0L1099.0 473.5L1099.2 476.4L1099.4 473.3L1099.6 469.3L1099.8 467.1L1100.0 465.0L1100.2 461.0L1100.4 458.9L1100.6 461.8L1100.7 472.3L1100.9 484.2L1101.1 488.9L1101.3 489.1L1101.5 490.5L1101.9 503.8L1102.1 511.2L1102.3 519.0L1102.5 524.1L1102.7 523.0L1102.8 516.0L1103.0 511.6L1103.2 513.2L1103.4 517.5L1103.6 520.1L1103.8 520.4L1104.0 522.2L1104.2 519.7L1104.4 511.1L1104.6 505.6L1104.8 508.6L1104.9 508.9L1105.1 499.8L1105.3 488.0L1105.5 481.3L1105.7 480.3L1105.9 483.3L1106.3 522.3L1106.5 506.7L1106.7 514.0L1106.9 516.0L1107.0 511.7L1107.2 507.7L1107.4 501.4L1107.6 499.1L1107.8 499.1L1108.0 497.4L1108.2 498.1L1108.4 498.3L1108.6 496.7L1108.8 497.0L1109.0 499.4L1109.2 503.5L1109.3 503.8L1109.5 497.8L1109.7 485.6L1109.9 475.5L1110.1 473.4L1110.3 475.5L1110.5 478.8L1110.7 480.4L1110.9 482.7L1111.1 486.0L1111.3 489.8L1111.4 489.1L1111.6 486.0L1111.8 485.1L1112.0 488.8L1112.2 492.7L1112.4 499.8L1112.6 482.0L1112.8 484.4L1113.0 493.8L1113.2 497.6L1113.4 494.5L1113.5 489.3L1113.7 490.0L1113.9 494.2L1114.1 495.0L1114.3 492.9L1114.7 477.8L1114.9 478.7L1115.1 482.9L1115.3 484.1L1115.5 482.9L1115.6 480.5L1115.8 478.4L1116.0 481.2L1116.2 488.1L1116.4 493.5L1116.6 494.7L1116.8 494.4L1117.0 495.8L1117.2 497.5L1117.4 498.5L1117.6 502.6L1117.7 507.8L1117.9 507.1L1118.1 503.1L1118.3 498.8L1118.7 199.1L1118.9 339.0L1119.1 432.4L1119.3 422.7L1119.5 518.2L1119.7 653.2L1119.8 563.9L1120.0 523.4L1120.2 522.5L1120.4 537.8L1120.6 542.2L1120.8 536.0L1121.0 520.8L1121.2 506.7L1121.4 495.9L1121.6 487.3L1121.8 483.4L1121.9 487.7L1122.1 496.2L1122.3 499.4L1122.5 494.4L1122.7 481.6L1123.1 463.0L1123.3 459.2L1123.5 461.4L1123.7 468.4L1123.9 474.5L1124.0 471.7L1124.2 466.4L1124.4 466.2L1124.6 468.6L1124.8 448.9L1125.0 458.0L1125.2 452.3L1125.4 451.5L1125.6 451.6L1125.8 455.4L1126.0 460.7L1126.1 464.7L1126.3 464.2L1126.5 458.4L1126.7 455.6L1127.1 471.5L1127.3 480.2L1127.5 483.8L1127.7 488.6L1127.9 496.3L1128.1 507.0L1128.2 510.6L1128.4 509.0L1128.6 504.8L1128.8 501.8L1129.0 503.4L1129.2 507.2L1129.4 508.8L1129.6 506.9L1129.8 501.9L1130.0 500.9L1130.2 499.9L1130.3 495.3L1130.5 489.8L1130.7 487.2L1130.9 488.4L1131.1 486.7L1131.5 481.1L1131.7 485.5L1131.9 490.4L1132.1 484.7L1132.3 493.4L1132.4 490.0L1132.6 485.9L1132.8 481.3L1133.0 475.9L1133.2 471.0L1133.4 471.5L1133.6 478.0L1133.8 482.7L1134.0 481.8L1134.2 479.0L1134.4 477.1L1134.5 474.7L1134.7 474.3L1134.9 477.1L1135.1 479.2L1135.3 476.4L1135.5 470.3L1135.7 469.2L1135.9 473.6L1136.1 474.8L1136.3 475.3L1136.5 474.6L1136.6 473.5L1136.8 472.4L1137.0 472.9L1137.2 477.6L1137.4 479.1L1137.6 480.1L1137.8 478.6L1138.0 474.2L1138.2 470.9L1138.4 472.5L1138.6 478.7L1138.7 483.5L1138.9 485.8L1139.1 487.1L1139.3 483.5L1139.5 475.6L1139.9 469.4L1140.1 471.3L1140.3 471.0L1140.5 471.5L1140.7 475.1L1140.8 475.4L1141.0 472.7L1141.2 472.0L1141.4 476.4L1141.6 482.0L1141.8 483.7L1142.0 484.9L1142.2 487.8L1142.4 489.5L1142.6 487.2L1142.8 483.1L1142.9 483.2L1143.1 490.1L1143.3 496.9L1143.5 500.7L1143.7 504.0L1143.9 504.6L1144.3 210.0L1144.5 347.6L1144.7 442.4L1144.9 432.2L1145.0 521.4L1145.2 653.2L1145.4 563.3L1145.6 521.6L1145.8 519.8L1146.0 530.6L1146.2 529.2L1146.4 519.3L1146.6 506.8L1146.8 492.8L1147.0 481.5L1147.1 471.2L1147.3 463.8L1147.5 461.9L1147.7 464.0L1147.9 466.7L1148.3 462.1L1148.5 451.8L1148.7 443.2L1148.9 437.2L1149.1 436.3L1149.2 442.3L1149.4 447.6L1149.6 453.8L1149.8 459.1L1150.0 460.3L1150.2 455.5L1150.4 448.4L1150.6 448.3L1150.8 451.9L1151.0 454.3L1151.2 452.6L1151.4 448.0L1151.5 446.8L1151.7 447.4L1151.9 452.0L1152.1 462.3L1152.3 471.2L1152.7 476.4L1152.9 478.4L1153.1 487.0L1153.3 497.5L1153.5 507.5L1153.6 515.0L1153.8 520.3L1154.0 522.7L1154.2 520.1L1154.4 515.1L1154.6 509.3L1154.8 506.9L1155.0 508.2L1155.2 506.9L1155.4 503.1L1155.6 499.2L1155.7 496.5L1155.9 493.9L1156.1 493.0L1156.3 489.6L1156.7 484.3L1156.9 482.2L1157.1 482.5L1157.3 482.0L1157.5 478.3L1157.7 474.4L1157.8 474.2L1158.0 477.8L1158.2 480.9L1158.4 479.7L1158.6 474.3L1158.8 468.9L1159.0 466.5L1159.2 467.4L1159.4 469.3L1159.6 466.4L1159.8 462.5L1159.9 459.4L1160.1 456.9L1160.3 458.1L1160.5 460.9L1160.7 460.4L1160.9 460.1L1161.1 461.9L1161.3 466.0L1161.5 470.5L1161.7 472.7L1161.9 471.6L1162.0 465.3L1162.2 456.1L1162.4 451.4L1162.6 455.5L1162.8 463.3L1163.0 468.6L1163.2 467.7L1163.4 462.6L1163.6 460.0L1163.8 459.1L1164.0 462.5L1164.1 469.2L1164.3 473.6L1164.5 471.6L1164.7 462.4L1165.1 450.9L1165.3 452.2L1165.5 454.5L1165.7 454.5L1165.9 458.0L1166.1 464.8L1166.2 471.5L1166.4 477.0L1166.6 481.4L1166.8 488.9L1167.0 493.5L1167.2 495.8L1167.4 498.7L1167.6 500.9L1167.8 504.9L1168.0 508.7L1168.2 510.9L1168.3 511.9L1168.5 436.7L1168.7 312.6L1168.9 401.1L1169.1 458.5L1169.3 452.0L1169.5 535.2L1169.7 654.7L1169.9 572.6L1170.1 537.9L1170.3 539.8L1170.4 551.8L1170.6 552.6L1170.8 545.3L1171.0 535.3L1171.2 523.3L1171.4 511.8L1171.6 500.0L1171.8 487.2L1172.0 479.3L1172.2 475.2L1172.4 470.4L1172.5 466.5L1172.7 461.2L1172.9 453.9L1173.1 448.7L1173.3 443.1L1173.5 440.0L1173.9 438.2L1174.1 440.1L1174.3 441.1L1174.5 443.1L1174.6 443.0L1174.8 441.1L1175.0 439.5L1175.2 438.8L1175.4 438.0L1175.6 434.2L1175.8 429.1L1176.0 426.5L1176.2 426.5L1176.4 428.7L1176.6 431.7L1176.7 434.8L1176.9 435.9L1177.1 433.1L1177.3 431.5L1177.5 433.6L1177.9 449.5L1178.1 451.6L1178.3 450.8L1178.5 453.6L1178.7 459.3L1178.8 462.8L1179.0 463.5L1179.2 461.6L1179.4 458.3L1179.6 460.5L1179.8 464.0L1180.0 466.3L1180.2 468.6L1180.4 468.6" stroke="#0072bd" stroke-width="1.05" fill="none" stroke-linejoin="round"/>
<path d="M789.5 459.4L790.1 448.7L790.6 440.6L791.2 435.6L791.8 433.9L792.4 437.5L792.9 447.1L793.5 460.2L794.1 474.3L794.7 487.1L795.2 496.1L795.8 499.0L796.4 497.2L796.9 492.6L797.5 486.1L798.1 478.6L798.7 471.1L799.2 464.4L799.8 459.4L800.4 457.1L801.0 457.0L801.5 457.7L802.1 458.8L802.7 460.2L803.2 461.6L803.8 462.7L804.4 463.2L805.0 462.8L805.5 461.9L806.1 460.5L806.7 459.0L807.3 457.6L807.8 456.5L808.4 456.1L809.0 456.5L809.5 459.8L810.1 465.5L810.7 472.7L811.3 480.3L811.8 487.4L812.4 492.8L813.0 495.5L813.6 494.7L814.1 490.4L814.7 483.7L815.3 475.2L815.9 466.0L816.4 456.9L817.0 448.7L817.6 442.5L818.1 439.0L818.7 439.2L819.3 443.5L819.9 450.9L820.4 460.3L821.0 470.7L821.6 480.8L822.2 489.7L822.7 496.0L823.3 498.9L823.9 498.2L824.4 495.1L825.0 490.3L825.6 484.3L826.2 477.8L826.7 471.3L827.3 465.3L827.9 460.5L828.5 457.0L829.0 453.7L829.6 450.5L830.2 447.5L830.7 444.7L831.3 442.2L831.9 439.9L832.5 438.0L833.0 436.4L833.6 435.2L834.2 434.4L834.8 434.0L835.3 434.1L835.9 434.8L836.5 437.4L837.0 442.8L837.6 449.9L838.2 457.4L838.8 464.2L839.3 469.2L839.9 471.1L840.5 468.8L841.1 462.6L841.6 453.7L842.2 443.0L842.8 431.6L843.3 420.6L843.9 411.1L844.5 404.1L845.1 400.6L845.6 401.5L846.2 405.8L846.8 412.8L847.4 421.4L847.9 430.9L848.5 440.2L849.1 448.6L849.6 455.2L850.2 458.9L850.8 459.4L851.4 457.5L851.9 454.0L852.5 449.3L853.1 443.7L853.7 437.8L854.2 432.0L854.8 426.6L855.4 422.3L856.0 419.4L856.5 417.6L857.1 416.1L857.7 414.8L858.2 413.6L858.8 412.7L859.4 411.9L860.0 411.4L860.5 411.0L861.1 410.9L861.7 411.0L862.3 411.3L862.8 411.8L863.4 412.8L864.0 415.4L864.5 419.0L865.1 423.3L865.7 427.7L866.3 431.6L866.8 434.6L867.4 436.2L868.0 435.7L868.6 431.4L869.1 424.0L869.7 414.6L870.3 404.2L870.8 394.0L871.4 385.2L872.0 378.8L872.6 375.9L873.1 377.7L873.7 383.9L874.3 393.3L874.9 404.4L875.4 416.1L876.0 426.8L876.6 435.3L877.1 440.2L877.7 440.4L878.3 436.8L878.9 430.4L879.4 422.1L880.0 413.0L880.6 403.9L881.2 396.0L881.7 390.1L882.3 385.9L882.9 381.9L883.4 378.2L884.0 374.8L884.6 371.7L885.2 368.9L885.7 366.6L886.3 364.6L886.9 363.0L887.5 361.9L888.0 361.3L888.6 361.2L889.2 361.7L889.7 363.4L890.3 367.5L890.9 373.1L891.5 379.3L892.0 385.4L892.6 390.5L893.2 393.7L893.8 394.3L894.3 390.3L894.9 382.2L895.5 371.3L896.1 358.9L896.6 346.4L897.2 335.1L897.8 326.4L898.3 321.6L898.9 321.6L899.5 325.6L900.1 332.4L900.6 341.1L901.2 350.9L901.8 360.6L902.4 369.6L902.9 376.6L903.5 381.0L904.1 381.7L904.6 379.0L905.2 373.9L905.8 367.1L906.4 359.6L906.9 352.1L907.5 345.5L908.1 340.7L908.7 338.4L909.2 337.4L909.8 336.6L910.4 336.0L910.9 335.6L911.5 335.5L912.1 335.6L912.7 336.0L913.2 336.5L913.8 337.3L914.4 339.3L915.0 343.2L915.5 348.4L916.1 354.6L916.7 361.2L917.2 367.9L917.8 374.0L918.4 379.3L919.0 383.1L919.5 385.1L920.1 384.5L920.7 379.3L921.3 370.1L921.8 358.6L922.4 346.3L923.0 335.0L923.5 326.1L924.1 321.4L924.7 321.8L925.3 326.1L925.8 333.2L926.4 342.3L927.0 352.5L927.6 363.0L928.1 372.8L928.7 381.1L929.3 387.0L929.8 389.7L930.4 388.7L931.0 384.8L931.6 379.1L932.1 372.7L932.7 366.4L933.3 361.5L933.9 358.8L934.4 358.1L935.0 357.8L935.6 357.9L936.1 358.4L936.7 359.3L937.3 360.6L937.9 362.2L938.4 364.1L939.0 366.4L939.6 368.9L940.2 371.8L940.7 376.8L941.3 384.0L941.9 392.7L942.5 401.7L943.0 410.4L943.6 417.7L944.2 422.7L944.7 424.6L945.3 422.6L945.9 417.4L946.5 409.8L947.0 400.9L947.6 391.7L948.2 383.1L948.8 376.2L949.3 372.0L949.9 371.4L950.5 374.5L951.0 380.4L951.6 388.2L952.2 397.1L952.8 406.3L953.3 414.9L953.9 422.0L954.5 426.8L955.1 428.4L955.6 428.0L956.2 426.4L956.8 423.8L957.3 420.3L957.9 416.4L958.5 412.0L959.1 407.5L959.6 403.0L960.2 398.7L960.8 394.9L961.4 391.8L961.9 389.6L962.5 388.5L963.1 388.7L963.6 390.6L964.2 393.9L964.8 398.4L965.4 403.6L965.9 409.2L966.5 414.8L967.1 420.2L967.7 424.9L968.2 428.6L968.8 431.0L969.4 431.6L969.9 429.5L970.5 423.8L971.1 415.5L971.7 405.5L972.2 394.9L972.8 384.7L973.4 375.7L974.0 369.1L974.5 365.8L975.1 366.6L975.7 370.7L976.2 377.4L976.8 385.4L977.4 394.0L978.0 401.9L978.5 408.4L979.1 412.3L979.7 412.8L980.3 410.9L980.8 407.1L981.4 402.1L982.0 396.4L982.6 390.7L983.1 385.4L983.7 381.2L984.3 378.7L984.8 378.5L985.4 379.9L986.0 380.7L986.6 381.4L987.1 381.9L987.7 382.5L988.3 383.3L988.9 384.5L989.4 387.2L990.0 392.7L990.6 399.6L991.1 406.5L991.7 411.9L992.3 414.3L992.9 412.7L993.4 407.4L994.0 399.3L994.6 389.5L995.2 379.0L995.7 368.7L996.3 359.8L996.9 353.1L997.4 349.6L998.0 350.1L998.6 353.8L999.2 359.8L999.7 367.3L1000.3 375.4L1000.9 383.1L1001.5 389.7L1002.0 394.2L1002.6 395.8L1003.2 394.9L1003.7 392.4L1004.3 388.8L1004.9 384.9L1005.5 381.3L1006.0 378.5L1006.6 377.1L1007.2 376.6L1007.8 376.1L1008.3 375.9L1008.9 375.8L1009.5 375.8L1010.0 376.1L1010.6 376.5L1011.2 377.1L1011.8 378.0L1012.3 379.0L1012.9 380.2L1013.5 382.5L1014.1 387.1L1014.6 393.2L1015.2 400.2L1015.8 407.6L1016.3 414.6L1016.9 420.6L1017.5 424.9L1018.1 426.9L1018.6 425.8L1019.2 421.3L1019.8 414.4L1020.4 406.1L1020.9 397.3L1021.5 389.2L1022.1 382.7L1022.6 378.8L1023.2 378.5L1023.8 382.2L1024.4 388.8L1024.9 397.4L1025.5 407.0L1026.1 416.4L1026.7 424.7L1027.2 430.8L1027.8 433.8L1028.4 433.6L1029.0 431.8L1029.5 428.9L1030.1 425.5L1030.7 422.0L1031.2 418.9L1031.8 416.9L1032.4 416.2L1033.0 417.0L1033.5 418.3L1034.1 419.8L1034.7 420.8L1035.3 420.8L1035.8 420.5L1036.4 420.0L1037.0 419.4L1037.5 419.0L1038.1 418.8L1038.7 419.0L1039.3 420.9L1039.8 425.5L1040.4 432.0L1041.0 439.6L1041.6 447.3L1042.1 454.5L1042.7 460.1L1043.3 463.5L1043.8 463.8L1044.4 460.6L1045.0 454.9L1045.6 447.3L1046.1 438.8L1046.7 430.2L1047.3 422.2L1047.9 415.8L1048.4 411.7L1049.0 410.8L1049.6 414.2L1050.1 421.3L1050.7 430.7L1051.3 441.3L1051.9 451.9L1052.4 461.2L1053.0 468.0L1053.6 471.0L1054.2 470.4L1054.7 467.7L1055.3 463.7L1055.9 459.0L1056.4 454.5L1057.0 450.8L1057.6 448.8L1058.2 448.1L1058.7 447.5L1059.3 447.1L1059.9 447.0L1060.5 447.0L1061.0 447.3L1061.6 447.8L1062.2 448.5L1062.7 449.5L1063.3 450.8L1063.9 452.4L1064.5 454.2L1065.0 457.4L1065.6 464.2L1066.2 473.2L1066.8 483.1L1067.3 492.4L1067.9 499.7L1068.5 503.4L1069.1 502.4L1069.6 497.4L1070.2 489.4L1070.8 479.6L1071.3 468.9L1071.9 458.6L1072.5 449.6L1073.1 443.0L1073.6 440.0L1074.2 441.4L1074.8 446.6L1075.4 454.5L1075.9 464.2L1076.5 474.4L1077.1 484.0L1077.6 492.1L1078.2 497.4L1078.8 499.0L1079.4 497.7L1079.9 494.6L1080.5 490.4L1081.1 485.7L1081.7 481.2L1082.2 477.4L1082.8 475.1L1083.4 474.4L1083.9 474.1L1084.5 474.0L1085.1 474.1L1085.7 474.3L1086.2 474.7L1086.8 475.1L1087.4 475.7L1088.0 476.9L1088.5 478.7L1089.1 480.5L1089.7 481.7L1090.2 481.3L1090.8 478.4L1091.4 473.9L1092.0 469.3L1092.5 465.9L1093.1 465.2L1093.7 468.0L1094.3 473.1L1094.8 479.1L1095.4 484.3L1096.0 487.2L1096.5 486.2L1097.1 481.9L1097.7 476.1L1098.3 470.5L1098.8 466.9L1099.4 466.9L1100.0 470.6L1100.6 477.1L1101.1 485.3L1101.7 494.3L1102.3 503.1L1102.8 510.7L1103.4 516.1L1104.0 518.4L1104.6 517.4L1105.1 514.1L1105.7 509.5L1106.3 504.4L1106.9 499.9L1107.4 496.9L1108.0 495.3L1108.6 494.1L1109.2 493.2L1109.7 492.6L1110.3 492.1L1110.9 491.6L1111.4 491.2L1112.0 490.6L1112.6 489.9L1113.2 488.9L1113.7 487.5L1114.3 486.0L1114.9 484.4L1115.5 483.0L1116.0 481.9L1116.6 481.3L1117.2 481.3L1117.7 482.7L1118.3 485.4L1118.9 488.8L1119.5 492.1L1120.0 494.4L1120.6 495.2L1121.2 493.0L1121.8 487.5L1122.3 480.0L1122.9 471.8L1123.5 464.2L1124.0 458.6L1124.6 456.2L1125.2 458.0L1125.8 463.2L1126.3 470.9L1126.9 479.9L1127.5 489.1L1128.1 497.6L1128.6 504.2L1129.2 507.8L1129.8 507.9L1130.3 505.6L1130.9 501.6L1131.5 496.6L1132.1 491.3L1132.6 486.4L1133.2 482.5L1133.8 480.3L1134.4 479.2L1134.9 478.2L1135.5 477.5L1136.1 476.8L1136.6 476.3L1137.2 476.0L1137.8 475.8L1138.4 475.7L1138.9 475.7L1139.5 475.8L1140.1 476.0L1140.7 476.3L1141.2 476.8L1141.8 477.3L1142.4 478.6L1142.9 480.6L1143.5 482.9L1144.1 485.0L1144.7 486.7L1145.2 487.4L1145.8 486.5L1146.4 482.9L1147.0 477.2L1147.5 470.4L1148.1 463.3L1148.7 456.9L1149.2 451.9L1149.8 449.4L1150.4 450.2L1151.0 454.8L1151.5 462.3L1152.1 471.4L1152.7 481.1L1153.3 490.2L1153.8 497.7L1154.4 502.5L1155.0 503.5L1155.6 501.7L1156.1 497.9L1156.7 492.7L1157.3 487.0L1157.8 481.2L1158.4 476.2L1159.0 472.6L1159.6 470.4L1160.1 468.5L1160.7 466.8L1161.3 465.3L1161.9 464.0L1162.4 463.1L1163.0 462.4L1163.6 462.1L1164.1 462.1L1164.7 462.4L1165.3 463.2L1165.9 466.1L1166.4 471.7L1167.0 479.2L1167.6 487.5L1168.2 495.8L1168.7 503.0L1169.3 508.3L1169.9 510.5L1170.4 508.6L1171.0 502.1L1171.6 492.3L1172.2 480.5L1172.7 468.1L1173.3 456.3L1173.9 446.4L1174.5 439.7L1175.0 437.4L1175.6 437.0L1176.2 437.3L1176.7 438.4L1177.3 440.4L1177.9 443.4L1178.5 447.5L1179.0 452.9L1179.6 459.7L1180.2 468.0" stroke="#d95319" stroke-width="2.1" fill="none" stroke-linejoin="round"/>
<path d="M789.5 154.5v6M789.5 700.5v-6M808.5 154.5v3.5M808.5 700.5v-3.5M827.5 154.5v3.5M827.5 700.5v-3.5M846.5 154.5v3.5M846.5 700.5v-3.5M865.5 154.5v3.5M865.5 700.5v-3.5M884.5 154.5v3.5M884.5 700.5v-3.5M904.5 154.5v3.5M904.5 700.5v-3.5M923.5 154.5v3.5M923.5 700.5v-3.5M942.5 154.5v3.5M942.5 700.5v-3.5M961.5 154.5v3.5M961.5 700.5v-3.5M980.5 154.5v6M980.5 700.5v-6M999.5 154.5v3.5M999.5 700.5v-3.5M1018.5 154.5v3.5M1018.5 700.5v-3.5M1037.5 154.5v3.5M1037.5 700.5v-3.5M1056.5 154.5v3.5M1056.5 700.5v-3.5M1075.5 154.5v3.5M1075.5 700.5v-3.5M1095.5 154.5v3.5M1095.5 700.5v-3.5M1114.5 154.5v3.5M1114.5 700.5v-3.5M1133.5 154.5v3.5M1133.5 700.5v-3.5M1152.5 154.5v3.5M1152.5 700.5v-3.5M1171.5 154.5v6M1171.5 700.5v-6M789.5 657.5h6M1180.5 657.5h-6M789.5 611.5h6M1180.5 611.5h-6M789.5 564.5h6M1180.5 564.5h-6M789.5 517.5h6M1180.5 517.5h-6M789.5 471.5h6M1180.5 471.5h-6M789.5 424.5h6M1180.5 424.5h-6M789.5 377.5h6M1180.5 377.5h-6M789.5 331.5h6M1180.5 331.5h-6M789.5 284.5h6M1180.5 284.5h-6M789.5 238.5h6M1180.5 238.5h-6M789.5 191.5h6M1180.5 191.5h-6M789.5 688.5h3.5M1180.5 688.5h-3.5M789.5 673.5h3.5M1180.5 673.5h-3.5M789.5 642.5h3.5M1180.5 642.5h-3.5M789.5 626.5h3.5M1180.5 626.5h-3.5M789.5 595.5h3.5M1180.5 595.5h-3.5M789.5 580.5h3.5M1180.5 580.5h-3.5M789.5 548.5h3.5M1180.5 548.5h-3.5M789.5 533.5h3.5M1180.5 533.5h-3.5M789.5 502.5h3.5M1180.5 502.5h-3.5M789.5 486.5h3.5M1180.5 486.5h-3.5M789.5 455.5h3.5M1180.5 455.5h-3.5M789.5 440.5h3.5M1180.5 440.5h-3.5M789.5 409.5h3.5M1180.5 409.5h-3.5M789.5 393.5h3.5M1180.5 393.5h-3.5M789.5 362.5h3.5M1180.5 362.5h-3.5M789.5 346.5h3.5M1180.5 346.5h-3.5M789.5 315.5h3.5M1180.5 315.5h-3.5M789.5 300.5h3.5M1180.5 300.5h-3.5M789.5 269.5h3.5M1180.5 269.5h-3.5M789.5 253.5h3.5M1180.5 253.5h-3.5M789.5 222.5h3.5M1180.5 222.5h-3.5M789.5 206.5h3.5M1180.5 206.5h-3.5M789.5 175.5h3.5M1180.5 175.5h-3.5M789.5 160.5h3.5M1180.5 160.5h-3.5" stroke="#1a1a1a" stroke-width="1" fill="none"/><rect x="789.5" y="154.5" width="391.0" height="546.0" fill="none" stroke="#1a1a1a" stroke-width="1.2"/>
<text x="784.3" y="662.0" font-size="14" text-anchor="end" fill="#333" textLength="21.3" lengthAdjust="spacingAndGlyphs">-1.5</text>
<text x="784.3" y="615.3" font-size="14" text-anchor="end" fill="#333" textLength="21.3" lengthAdjust="spacingAndGlyphs">-1.2</text>
<text x="784.3" y="568.7" font-size="14" text-anchor="end" fill="#333" textLength="21.3" lengthAdjust="spacingAndGlyphs">-0.9</text>
<text x="784.3" y="522.0" font-size="14" text-anchor="end" fill="#333" textLength="21.3" lengthAdjust="spacingAndGlyphs">-0.6</text>
<text x="784.3" y="475.4" font-size="14" text-anchor="end" fill="#333" textLength="21.3" lengthAdjust="spacingAndGlyphs">-0.3</text>
<text x="784.3" y="428.7" font-size="14" text-anchor="end" fill="#333" textLength="6.9" lengthAdjust="spacingAndGlyphs">0</text>
<text x="784.3" y="382.1" font-size="14" text-anchor="end" fill="#333" textLength="17.2" lengthAdjust="spacingAndGlyphs">0.3</text>
<text x="784.3" y="335.4" font-size="14" text-anchor="end" fill="#333" textLength="17.2" lengthAdjust="spacingAndGlyphs">0.6</text>
<text x="784.3" y="288.8" font-size="14" text-anchor="end" fill="#333" textLength="17.2" lengthAdjust="spacingAndGlyphs">0.9</text>
<text x="784.3" y="242.1" font-size="14" text-anchor="end" fill="#333" textLength="17.2" lengthAdjust="spacingAndGlyphs">1.2</text>
<text x="784.3" y="195.5" font-size="14" text-anchor="end" fill="#333" textLength="17.2" lengthAdjust="spacingAndGlyphs">1.5</text>
<text x="789.5" y="717.0" font-size="14" text-anchor="middle" fill="#333" textLength="6.9" lengthAdjust="spacingAndGlyphs">0</text>
<text x="980.5" y="717.0" font-size="14" text-anchor="middle" fill="#333" textLength="27.6" lengthAdjust="spacingAndGlyphs">1000</text>
<text x="1171.4" y="717.0" font-size="14" text-anchor="middle" fill="#333" textLength="27.6" lengthAdjust="spacingAndGlyphs">2000</text>
<text x="985" y="735.5" font-size="15" text-anchor="middle" fill="#333" textLength="55.5" lengthAdjust="spacingAndGlyphs">samples</text>
<rect x="820.5" y="189.5" width="79" height="41" fill="#fff" stroke="#1a1a1a" stroke-width="1.1"/>
<path d="M825.5 201.5 H857.5" stroke="#0072bd" stroke-width="1.1"/>
<path d="M825.5 219.3 H857.5" stroke="#d95319" stroke-width="2.1"/>
<text x="860" y="205" font-size="12.6" fill="#333">wecg</text>
<text x="860" y="222.8" font-size="12.6" fill="#333">wecg1</text>
</svg>
<div id="popup" class="abs">
<div class="ph" style="top:0"><span class="f" style="transform:scaleX(0.959)">Fixed-Bandwidth MRA</span></div>
<div class="ph" style="top:164px"><span class="f" style="transform:scaleX(0.974)">Data-Adaptive MRA</span></div>
<div class="pi" style="top:26px"><b style="top:12px"><span class="f" style="transform:scaleX(1.008)">MODWT</span></b><i style="top:30px"><span class="f" style="transform:scaleX(1.009)">Add decomposition using Maximal Overlap</span></i><i style="top:45px"><span class="f" style="transform:scaleX(0.976)">Discrete Wavelet Transform (MODWT)</span></i></div>
<div class="pi sel" style="top:95px"><b style="top:11px"><span class="f" style="transform:scaleX(0.951)">TQWT</span></b><i style="top:29px"><span class="f" style="transform:scaleX(1.014)">Add decomposition using</span></i><i style="top:44px"><span class="f" style="transform:scaleX(0.979)">Tunable Q-factor Wavelet Transform (TQWT)</span></i></div>
<div class="pi" style="top:190px"><b style="top:12px"><span class="f" style="transform:scaleX(0.936)">EWT</span></b><i style="top:30px"><span class="f" style="transform:scaleX(1.014)">Add decomposition using</span></i><i style="top:45px"><span class="f" style="transform:scaleX(0.963)">Empirical Wavelet Transform (EWT)</span></i></div>
<div class="pi" style="top:259px"><b style="top:12px"><span class="f" style="transform:scaleX(0.961)">EMD</span></b><i style="top:30px"><span class="f" style="transform:scaleX(1.014)">Add decomposition using</span></i><i style="top:45px"><span class="f" style="transform:scaleX(0.994)">Empirical Mode Decomposition (EMD)</span></i></div>
<div class="pi" style="top:328px"><b style="top:12px"><span class="f" style="transform:scaleX(1.029)">VMD</span></b><i style="top:30px"><span class="f" style="transform:scaleX(1.014)">Add decomposition using</span></i><i style="top:45px"><span class="f" style="transform:scaleX(1.005)">Variational Mode Decomposition (VMD)</span></i></div>
</div>
<svg width="1200" height="770" viewBox="0 0 1200 770" style="pointer-events:none"><path d="M632.2 220 L632.2 236.6 L635.8 233.2 L638 237.5 L640.7 236.2 L638.7 232.2 L643.8 232.2 Z" fill="#b2ee00" stroke="#111" stroke-width="1" stroke-linejoin="round"/></svg>
</div>
</body></html>
